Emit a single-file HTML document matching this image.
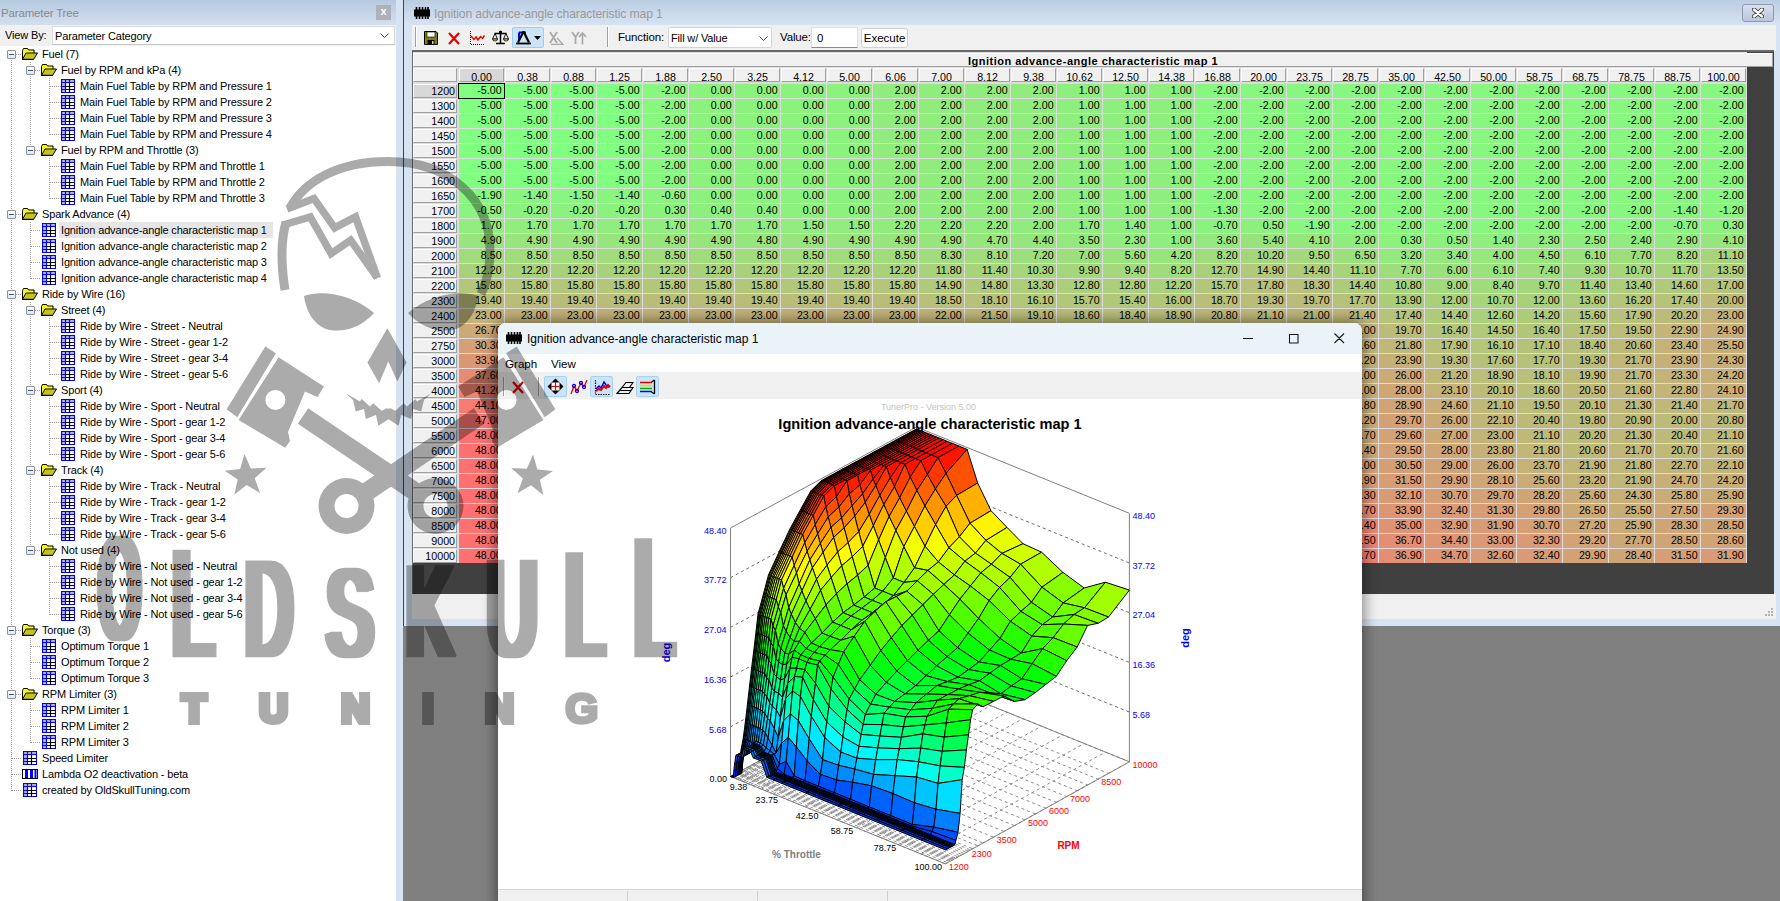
<!DOCTYPE html><html><head><meta charset="utf-8"><title>TunerPro</title><style>
html,body{margin:0;padding:0}
body{width:1780px;height:901px;overflow:hidden;background:#808080;position:relative;font-family:"Liberation Sans",sans-serif;font-size:11px;color:#000}
div,span,svg{position:absolute;box-sizing:border-box}
.t{white-space:nowrap;line-height:16px;height:16px;letter-spacing:-.15px}
#left{left:0;top:0;width:396px;height:901px;background:#fff}
#ltitle{left:0;top:0;width:396px;height:25px;background:linear-gradient(#b7c9df,#d3dfee)}
#lview{left:0;top:25px;width:396px;height:21px;background:#f0f0f0}
.dv{width:1px;background-image:linear-gradient(#9a9a9a 50%,rgba(0,0,0,0) 50%);background-size:1px 2px}
.dh{height:1px;background-image:linear-gradient(90deg,#9a9a9a 50%,rgba(0,0,0,0) 50%);background-size:2px 1px}
.bx{width:9px;height:9px;border:1px solid #919191;background:linear-gradient(#fff,#e4e4e4);border-radius:1px}
.bx:after{content:"";position:absolute;left:1px;top:3px;width:5px;height:1px;background:#3c52a0}
#tw{left:403px;top:0;width:1377px;height:626px;background:#d6e3f2;border-left:1px solid #444}
#gw{left:498px;top:323px;width:864px;height:590px;background:#fff;border-radius:8px 8px 0 0;box-shadow:0 0 14px 2px rgba(0,0,0,.45);overflow:hidden}
.c{height:13.6px;width:44.6px;text-align:right;padding-right:2px;font-size:10.67px;line-height:13px;white-space:nowrap;overflow:hidden}
.rh{left:0px;width:44px;height:14px;background:#f0f0f0;border:1px solid #fff;border-right-color:#a0a0a0;border-bottom-color:#a0a0a0;text-align:right;padding-right:1px;font-size:10.67px;line-height:12px}
.ch{top:16px;width:45px;height:14px;background:#f0f0f0;border:1px solid #fff;border-right-color:#a0a0a0;border-bottom-color:#a0a0a0;text-align:center;font-size:10.67px;line-height:16px;overflow:hidden}
</style></head><body>
<svg width="0" height="0" style="left:-10px;top:-10px"><defs>
<symbol id="it" viewBox="0 0 14 14"><rect x="0" y="0" width="14" height="14" fill="#fff"/><rect x="1" y="1" width="12" height="3" fill="#b8b8b8"/><rect x="1" y="1" width="3" height="12" fill="#b8b8b8"/><path d="M.5 .5h13v13h-13zM0 3.5h14M4.5 0v14M8.5 0v4M0 7.5h4.5M0 10.5h4.5" fill="none" stroke="#00f" stroke-width="1.2"/><path d="M8.5 4v10M4.5 7.5h9M4.5 10.5h9" fill="none" stroke="#000" stroke-width="1.2"/></symbol>
<symbol id="if" viewBox="0 0 16 12"><path d="M.5 11.5V2.5l1-2h4l1 1.5h5.5v3" fill="#ff0" stroke="#000"/><path d="M.5 11.5l3.5-6.5h11.5l-4 6.5z" fill="#c4c420" stroke="#000"/><path d="M0 11.5h11.5" stroke="#000" stroke-width="1.4"/></symbol>
<symbol id="il" viewBox="0 0 16 10"><rect x=".5" y=".5" width="15" height="9" fill="#fff" stroke="#000"/><rect x="3" y="1" width="3" height="8" fill="#00f"/><rect x="8" y="1" width="3" height="8" fill="#00f"/><rect x="12.5" y="1" width="2" height="8" fill="#00f"/></symbol>
<symbol id="chip" viewBox="0 0 16 12"><rect x="0" y="2.5" width="16" height="7" fill="#000"/><path d="M2.5 0v12M5.5 0v12M8.5 0v12M11.5 0v12M14 0v12" stroke="#000" stroke-width="1.6"/></symbol>
</defs></svg>
<div id="left">
<div id="ltitle"><span class="t" style="left:1px;top:5px;font-size:11.5px;color:#8a8a8a">Parameter Tree</span><div style="left:376px;top:5px;width:15px;height:15px;background:#aeb2b8;color:#fff;font-size:11px;font-weight:bold;line-height:13px;text-align:center">x</div></div>
<div id="lview"><span class="t" style="left:5px;top:2px">View By:</span><div style="left:52px;top:1px;width:343px;height:19px;background:#fff;border:1px solid #dcdcdc;border-bottom-color:#c8c8c8"><span class="t" style="left:2px;top:1px">Parameter Category</span><svg style="left:327px;top:6px" width="9" height="6"><path d="M.5 .5l4 4 4-4" fill="none" stroke="#444" stroke-width="1"/></svg></div></div>
<div class="dv" style="left:11px;top:60px;height:731px"></div>
<div class="dv" style="left:30px;top:62px;height:89px"></div>
<div class="dv" style="left:30px;top:222px;height:57px"></div>
<div class="dv" style="left:30px;top:302px;height:249px"></div>
<div class="dv" style="left:30px;top:638px;height:41px"></div>
<div class="dv" style="left:30px;top:702px;height:41px"></div>
<div class="dv" style="left:49px;top:78px;height:57px"></div>
<div class="dv" style="left:49px;top:158px;height:41px"></div>
<div class="dv" style="left:49px;top:318px;height:57px"></div>
<div class="dv" style="left:49px;top:398px;height:57px"></div>
<div class="dv" style="left:49px;top:478px;height:57px"></div>
<div class="dv" style="left:49px;top:558px;height:57px"></div>
<div class="dh" style="left:16px;top:54px;width:6px"></div>
<div class="bx" style="left:7px;top:50px"></div>
<svg style="left:22px;top:48px" width="16" height="12"><use href="#if"/></svg>
<span class="t" style="left:42px;top:46px">Fuel (7)</span>
<div class="dh" style="left:35px;top:70px;width:6px"></div>
<div class="bx" style="left:26px;top:66px"></div>
<svg style="left:41px;top:64px" width="16" height="12"><use href="#if"/></svg>
<span class="t" style="left:61px;top:62px">Fuel by RPM and kPa (4)</span>
<div class="dh" style="left:50px;top:86px;width:11px"></div>
<svg style="left:61px;top:79px" width="14" height="14"><use href="#it"/></svg>
<span class="t" style="left:80px;top:78px">Main Fuel Table by RPM and Pressure 1</span>
<div class="dh" style="left:50px;top:102px;width:11px"></div>
<svg style="left:61px;top:95px" width="14" height="14"><use href="#it"/></svg>
<span class="t" style="left:80px;top:94px">Main Fuel Table by RPM and Pressure 2</span>
<div class="dh" style="left:50px;top:118px;width:11px"></div>
<svg style="left:61px;top:111px" width="14" height="14"><use href="#it"/></svg>
<span class="t" style="left:80px;top:110px">Main Fuel Table by RPM and Pressure 3</span>
<div class="dh" style="left:50px;top:134px;width:11px"></div>
<svg style="left:61px;top:127px" width="14" height="14"><use href="#it"/></svg>
<span class="t" style="left:80px;top:126px">Main Fuel Table by RPM and Pressure 4</span>
<div class="dh" style="left:35px;top:150px;width:6px"></div>
<div class="bx" style="left:26px;top:146px"></div>
<svg style="left:41px;top:144px" width="16" height="12"><use href="#if"/></svg>
<span class="t" style="left:61px;top:142px">Fuel by RPM and Throttle (3)</span>
<div class="dh" style="left:50px;top:166px;width:11px"></div>
<svg style="left:61px;top:159px" width="14" height="14"><use href="#it"/></svg>
<span class="t" style="left:80px;top:158px">Main Fuel Table by RPM and Throttle 1</span>
<div class="dh" style="left:50px;top:182px;width:11px"></div>
<svg style="left:61px;top:175px" width="14" height="14"><use href="#it"/></svg>
<span class="t" style="left:80px;top:174px">Main Fuel Table by RPM and Throttle 2</span>
<div class="dh" style="left:50px;top:198px;width:11px"></div>
<svg style="left:61px;top:191px" width="14" height="14"><use href="#it"/></svg>
<span class="t" style="left:80px;top:190px">Main Fuel Table by RPM and Throttle 3</span>
<div class="dh" style="left:16px;top:214px;width:6px"></div>
<div class="bx" style="left:7px;top:210px"></div>
<svg style="left:22px;top:208px" width="16" height="12"><use href="#if"/></svg>
<span class="t" style="left:42px;top:206px">Spark Advance (4)</span>
<div class="dh" style="left:31px;top:230px;width:10px"></div>
<svg style="left:42px;top:223px" width="14" height="14"><use href="#it"/></svg>
<div style="left:59px;top:222px;width:214px;height:16px;background:#e6e6e6"></div>
<span class="t" style="left:61px;top:222px">Ignition advance-angle characteristic map 1</span>
<div class="dh" style="left:31px;top:246px;width:10px"></div>
<svg style="left:42px;top:239px" width="14" height="14"><use href="#it"/></svg>
<span class="t" style="left:61px;top:238px">Ignition advance-angle characteristic map 2</span>
<div class="dh" style="left:31px;top:262px;width:10px"></div>
<svg style="left:42px;top:255px" width="14" height="14"><use href="#it"/></svg>
<span class="t" style="left:61px;top:254px">Ignition advance-angle characteristic map 3</span>
<div class="dh" style="left:31px;top:278px;width:10px"></div>
<svg style="left:42px;top:271px" width="14" height="14"><use href="#it"/></svg>
<span class="t" style="left:61px;top:270px">Ignition advance-angle characteristic map 4</span>
<div class="dh" style="left:16px;top:294px;width:6px"></div>
<div class="bx" style="left:7px;top:290px"></div>
<svg style="left:22px;top:288px" width="16" height="12"><use href="#if"/></svg>
<span class="t" style="left:42px;top:286px">Ride by Wire (16)</span>
<div class="dh" style="left:35px;top:310px;width:6px"></div>
<div class="bx" style="left:26px;top:306px"></div>
<svg style="left:41px;top:304px" width="16" height="12"><use href="#if"/></svg>
<span class="t" style="left:61px;top:302px">Street (4)</span>
<div class="dh" style="left:50px;top:326px;width:11px"></div>
<svg style="left:61px;top:319px" width="14" height="14"><use href="#it"/></svg>
<span class="t" style="left:80px;top:318px">Ride by Wire - Street - Neutral</span>
<div class="dh" style="left:50px;top:342px;width:11px"></div>
<svg style="left:61px;top:335px" width="14" height="14"><use href="#it"/></svg>
<span class="t" style="left:80px;top:334px">Ride by Wire - Street - gear 1-2</span>
<div class="dh" style="left:50px;top:358px;width:11px"></div>
<svg style="left:61px;top:351px" width="14" height="14"><use href="#it"/></svg>
<span class="t" style="left:80px;top:350px">Ride by Wire - Street - gear 3-4</span>
<div class="dh" style="left:50px;top:374px;width:11px"></div>
<svg style="left:61px;top:367px" width="14" height="14"><use href="#it"/></svg>
<span class="t" style="left:80px;top:366px">Ride by Wire - Street - gear 5-6</span>
<div class="dh" style="left:35px;top:390px;width:6px"></div>
<div class="bx" style="left:26px;top:386px"></div>
<svg style="left:41px;top:384px" width="16" height="12"><use href="#if"/></svg>
<span class="t" style="left:61px;top:382px">Sport (4)</span>
<div class="dh" style="left:50px;top:406px;width:11px"></div>
<svg style="left:61px;top:399px" width="14" height="14"><use href="#it"/></svg>
<span class="t" style="left:80px;top:398px">Ride by Wire - Sport - Neutral</span>
<div class="dh" style="left:50px;top:422px;width:11px"></div>
<svg style="left:61px;top:415px" width="14" height="14"><use href="#it"/></svg>
<span class="t" style="left:80px;top:414px">Ride by Wire - Sport - gear 1-2</span>
<div class="dh" style="left:50px;top:438px;width:11px"></div>
<svg style="left:61px;top:431px" width="14" height="14"><use href="#it"/></svg>
<span class="t" style="left:80px;top:430px">Ride by Wire - Sport - gear 3-4</span>
<div class="dh" style="left:50px;top:454px;width:11px"></div>
<svg style="left:61px;top:447px" width="14" height="14"><use href="#it"/></svg>
<span class="t" style="left:80px;top:446px">Ride by Wire - Sport - gear 5-6</span>
<div class="dh" style="left:35px;top:470px;width:6px"></div>
<div class="bx" style="left:26px;top:466px"></div>
<svg style="left:41px;top:464px" width="16" height="12"><use href="#if"/></svg>
<span class="t" style="left:61px;top:462px">Track (4)</span>
<div class="dh" style="left:50px;top:486px;width:11px"></div>
<svg style="left:61px;top:479px" width="14" height="14"><use href="#it"/></svg>
<span class="t" style="left:80px;top:478px">Ride by Wire - Track - Neutral</span>
<div class="dh" style="left:50px;top:502px;width:11px"></div>
<svg style="left:61px;top:495px" width="14" height="14"><use href="#it"/></svg>
<span class="t" style="left:80px;top:494px">Ride by Wire - Track - gear 1-2</span>
<div class="dh" style="left:50px;top:518px;width:11px"></div>
<svg style="left:61px;top:511px" width="14" height="14"><use href="#it"/></svg>
<span class="t" style="left:80px;top:510px">Ride by Wire - Track - gear 3-4</span>
<div class="dh" style="left:50px;top:534px;width:11px"></div>
<svg style="left:61px;top:527px" width="14" height="14"><use href="#it"/></svg>
<span class="t" style="left:80px;top:526px">Ride by Wire - Track - gear 5-6</span>
<div class="dh" style="left:35px;top:550px;width:6px"></div>
<div class="bx" style="left:26px;top:546px"></div>
<svg style="left:41px;top:544px" width="16" height="12"><use href="#if"/></svg>
<span class="t" style="left:61px;top:542px">Not used (4)</span>
<div class="dh" style="left:50px;top:566px;width:11px"></div>
<svg style="left:61px;top:559px" width="14" height="14"><use href="#it"/></svg>
<span class="t" style="left:80px;top:558px">Ride by Wire - Not used - Neutral</span>
<div class="dh" style="left:50px;top:582px;width:11px"></div>
<svg style="left:61px;top:575px" width="14" height="14"><use href="#it"/></svg>
<span class="t" style="left:80px;top:574px">Ride by Wire - Not used - gear 1-2</span>
<div class="dh" style="left:50px;top:598px;width:11px"></div>
<svg style="left:61px;top:591px" width="14" height="14"><use href="#it"/></svg>
<span class="t" style="left:80px;top:590px">Ride by Wire - Not used - gear 3-4</span>
<div class="dh" style="left:50px;top:614px;width:11px"></div>
<svg style="left:61px;top:607px" width="14" height="14"><use href="#it"/></svg>
<span class="t" style="left:80px;top:606px">Ride by Wire - Not used - gear 5-6</span>
<div class="dh" style="left:16px;top:630px;width:6px"></div>
<div class="bx" style="left:7px;top:626px"></div>
<svg style="left:22px;top:624px" width="16" height="12"><use href="#if"/></svg>
<span class="t" style="left:42px;top:622px">Torque (3)</span>
<div class="dh" style="left:31px;top:646px;width:10px"></div>
<svg style="left:42px;top:639px" width="14" height="14"><use href="#it"/></svg>
<span class="t" style="left:61px;top:638px">Optimum Torque 1</span>
<div class="dh" style="left:31px;top:662px;width:10px"></div>
<svg style="left:42px;top:655px" width="14" height="14"><use href="#it"/></svg>
<span class="t" style="left:61px;top:654px">Optimum Torque 2</span>
<div class="dh" style="left:31px;top:678px;width:10px"></div>
<svg style="left:42px;top:671px" width="14" height="14"><use href="#it"/></svg>
<span class="t" style="left:61px;top:670px">Optimum Torque 3</span>
<div class="dh" style="left:16px;top:694px;width:6px"></div>
<div class="bx" style="left:7px;top:690px"></div>
<svg style="left:22px;top:688px" width="16" height="12"><use href="#if"/></svg>
<span class="t" style="left:42px;top:686px">RPM Limiter (3)</span>
<div class="dh" style="left:31px;top:710px;width:10px"></div>
<svg style="left:42px;top:703px" width="14" height="14"><use href="#it"/></svg>
<span class="t" style="left:61px;top:702px">RPM Limiter 1</span>
<div class="dh" style="left:31px;top:726px;width:10px"></div>
<svg style="left:42px;top:719px" width="14" height="14"><use href="#it"/></svg>
<span class="t" style="left:61px;top:718px">RPM Limiter 2</span>
<div class="dh" style="left:31px;top:742px;width:10px"></div>
<svg style="left:42px;top:735px" width="14" height="14"><use href="#it"/></svg>
<span class="t" style="left:61px;top:734px">RPM Limiter 3</span>
<div class="dh" style="left:12px;top:758px;width:10px"></div>
<svg style="left:23px;top:751px" width="14" height="14"><use href="#it"/></svg>
<span class="t" style="left:42px;top:750px">Speed Limiter</span>
<div class="dh" style="left:12px;top:774px;width:10px"></div>
<svg style="left:22px;top:769px" width="16" height="10"><use href="#il"/></svg>
<span class="t" style="left:42px;top:766px">Lambda O2 deactivation - beta</span>
<div class="dh" style="left:12px;top:790px;width:10px"></div>
<svg style="left:23px;top:783px" width="14" height="14"><use href="#it"/></svg>
<span class="t" style="left:42px;top:782px">created by OldSkullTuning.com</span>
</div>
<div style="left:396px;top:0;width:7px;height:901px;background:#d6e3f2"></div>
<div id="tw">
<svg style="left:10px;top:7px" width="16" height="12"><use href="#chip"/></svg>
<div style="left:0;top:0;width:1377px;height:25px;background:linear-gradient(#bccde2,#d6e3f2)"></div>
<svg style="left:10px;top:7px" width="16" height="12"><use href="#chip"/></svg>
<span class="t" style="left:30px;top:6px;font-size:12.2px;color:#9a9a9a">Ignition advance-angle characteristic map 1</span>
<div style="left:1338px;top:4px;width:32px;height:18px;border:1px solid #8f9bb0;border-radius:3px;background:linear-gradient(#d5dfee,#b9c6da)"><svg style="left:9px;top:3px" width="12" height="10"><path d="M2 1.5l8 7M10 1.5l-8 7" stroke="#3c3c3c" stroke-width="4.200" stroke-linecap="round"/><path d="M2 1.5l8 7M10 1.5l-8 7" stroke="#fff" stroke-width="2.400" stroke-linecap="round"/></svg></div>
<div id="tb" style="left:8px;top:25px;width:1364px;height:26px;background:#f0f0f0">
<div style="left:3px;top:2px;width:2px;height:20px;border-left:1px solid #a0a0a0;border-right:1px solid #fff"></div>
<svg style="left:12px;top:6px" width="14" height="14" viewBox="0 0 14 14"><path d="M.5 .5h11.5l1.5 1.5v11.5h-13z" fill="#808000" stroke="#000"/><rect x="3" y="1" width="8" height="5" fill="#fff" stroke="#000" stroke-width=".6"/><rect x="3.5" y="9" width="7" height="4.5" fill="#000"/><rect x="8" y="10" width="1.6" height="3" fill="#c8c8c8"/></svg>
<svg style="left:36px;top:7px" width="12" height="13" viewBox="0 0 12 13"><path d="M1 1l10 11M11 1l-10 11" stroke="#e60000" stroke-width="2.2" fill="none"/></svg>
<svg style="left:57px;top:6px" width="16" height="14" viewBox="0 0 16 14"><path d="M1.5 0v13.5h14" fill="none" stroke="#000" stroke-width="1" stroke-dasharray="1 1"/><path d="M2 5l3 3.5 2-2.5 2 3 2.5-3.5 2 2 2-3" fill="none" stroke="#e60000" stroke-width="1.4"/></svg>
<svg style="left:80px;top:5px" width="17" height="15" viewBox="0 0 17 15"><path d="M8.5 1v12M4 13.5h9M2.5 3.5h12" stroke="#000" stroke-width="1.5" fill="none"/><path d="M3 3.5l-2.5 5.5h5zM14 3.5l-2.5 5.5h5z" fill="none" stroke="#000" stroke-width=".9"/><path d="M.5 9h5a2.5 2 0 0 1-5 0zM11.5 9h5a2.5 2 0 0 1-5 0z" fill="#e8d800" stroke="#000" stroke-width=".7"/><circle cx="8.5" cy="2" r="1.6" fill="#000"/></svg>
<div style="left:100px;top:2px;width:32px;height:21px;background:#cce4f7;border:1px solid #99cff5;border-radius:2px"></div>
<svg style="left:104px;top:5px" width="16" height="15" viewBox="0 0 16 15"><path d="M3 2.5h7M3 2.5v8" stroke="#00f" stroke-width="2" fill="none"/><path d="M7.5 1.5l-5.5 11M7.5 1.5l5.5 11" stroke="#000" stroke-width="2.2" fill="none"/><path d="M0 13.5h15" stroke="#000" stroke-width="1.8"/></svg>
<svg style="left:122px;top:11px" width="8" height="5" viewBox="0 0 8 5"><path d="M0 0h7l-3.5 4z" fill="#000"/></svg>
<svg style="left:136px;top:6px" width="16" height="14" viewBox="0 0 16 14"><path d="M2 1l7 11M9 1l-7 11" stroke="#a9a9a9" stroke-width="1.8" fill="none"/><path d="M9 7l6 6.5h-12" stroke="#a9a9a9" stroke-width="1.4" fill="none"/></svg>
<svg style="left:159px;top:6px" width="16" height="14" viewBox="0 0 16 14"><path d="M1 1l3.5 5v7M8 1l-3.5 5" stroke="#a9a9a9" stroke-width="1.8" fill="none"/><path d="M11.5 13.5v-11M8 6l3.5-4 3.5 4" stroke="#a9a9a9" stroke-width="1.6" fill="none"/></svg>
<div style="left:195px;top:2px;width:2px;height:20px;border-left:1px solid #a0a0a0;border-right:1px solid #fff"></div>
<span class="t" style="left:206px;top:4px;font-size:11.5px">Function:</span>
<div style="left:256px;top:2px;width:104px;height:21px;background:#fff;border:1px solid #d4d4d4;border-radius:2px"><span class="t" style="left:2px;top:2px;font-size:11px">Fill w/ Value</span><svg style="left:90px;top:8px" width="9" height="6"><path d="M.5 .5l4 4 4-4" fill="none" stroke="#444"/></svg></div>
<span class="t" style="left:368px;top:4px;font-size:11.5px">Value:</span>
<div style="left:399px;top:2px;width:47px;height:21px;background:#fff;border:1px solid #e0e0e0;border-bottom-color:#8a8a8a"><span class="t" style="left:5px;top:2px;font-size:11.5px">0</span></div>
<div style="left:449px;top:3px;width:47px;height:20px;background:#fdfdfd;border:1px solid #d0d0d0;border-radius:3px;text-align:center;line-height:18px;font-size:11.5px">Execute</div>
</div>
<div id="grid" style="left:8px;top:50px;width:1362px;height:544px;background:#404040;border-top:2px solid #6a6a6a;border-left:1px solid #696969">
<div style="left:0;top:0;width:1334px;height:511px;background:#dedcde"></div>
<div style="left:0px;top:1px;width:1360px;height:14px;background:#f0f0f0;border:1px solid #fff;border-right-color:#a0a0a0;border-bottom-color:#a0a0a0;text-align:center;font-weight:bold;font-size:11px;line-height:15px;letter-spacing:.5px">Ignition advance-angle characteristic map 1</div>
<div class="ch" style="left:0px;width:44px"></div>
<div class="ch" style="left:46px;background:#d8d8d8">0.00</div>
<div class="ch" style="left:92px">0.38</div>
<div class="ch" style="left:138px">0.88</div>
<div class="ch" style="left:184px">1.25</div>
<div class="ch" style="left:230px">1.88</div>
<div class="ch" style="left:276px">2.50</div>
<div class="ch" style="left:322px">3.25</div>
<div class="ch" style="left:368px">4.12</div>
<div class="ch" style="left:414px">5.00</div>
<div class="ch" style="left:460px">6.06</div>
<div class="ch" style="left:506px">7.00</div>
<div class="ch" style="left:552px">8.12</div>
<div class="ch" style="left:598px">9.38</div>
<div class="ch" style="left:644px">10.62</div>
<div class="ch" style="left:690px">12.50</div>
<div class="ch" style="left:736px">14.38</div>
<div class="ch" style="left:782px">16.88</div>
<div class="ch" style="left:828px">20.00</div>
<div class="ch" style="left:874px">23.75</div>
<div class="ch" style="left:920px">28.75</div>
<div class="ch" style="left:966px">35.00</div>
<div class="ch" style="left:1012px">42.50</div>
<div class="ch" style="left:1058px">50.00</div>
<div class="ch" style="left:1104px">58.75</div>
<div class="ch" style="left:1150px">68.75</div>
<div class="ch" style="left:1196px">78.75</div>
<div class="ch" style="left:1242px">88.75</div>
<div class="ch" style="left:1288px">100.00</div>
<div class="rh" style="top:32px;background:#d8d8d8">1200</div>
<div class="c" style="left:46px;top:32px;background:#80ff80;outline:1px solid #000">-5.00</div>
<div class="c" style="left:92px;top:32px;background:#80ff80">-5.00</div>
<div class="c" style="left:138px;top:32px;background:#80ff80">-5.00</div>
<div class="c" style="left:184px;top:32px;background:#80ff80">-5.00</div>
<div class="c" style="left:230px;top:32px;background:#87f77f">-2.00</div>
<div class="c" style="left:276px;top:32px;background:#8cf27e">0.00</div>
<div class="c" style="left:322px;top:32px;background:#8cf27e">0.00</div>
<div class="c" style="left:368px;top:32px;background:#8cf27e">0.00</div>
<div class="c" style="left:414px;top:32px;background:#8cf27e">0.00</div>
<div class="c" style="left:460px;top:32px;background:#91ec7e">2.00</div>
<div class="c" style="left:506px;top:32px;background:#91ec7e">2.00</div>
<div class="c" style="left:552px;top:32px;background:#91ec7e">2.00</div>
<div class="c" style="left:598px;top:32px;background:#91ec7e">2.00</div>
<div class="c" style="left:644px;top:32px;background:#8eef7e">1.00</div>
<div class="c" style="left:690px;top:32px;background:#8eef7e">1.00</div>
<div class="c" style="left:736px;top:32px;background:#8eef7e">1.00</div>
<div class="c" style="left:782px;top:32px;background:#87f77f">-2.00</div>
<div class="c" style="left:828px;top:32px;background:#87f77f">-2.00</div>
<div class="c" style="left:874px;top:32px;background:#87f77f">-2.00</div>
<div class="c" style="left:920px;top:32px;background:#87f77f">-2.00</div>
<div class="c" style="left:966px;top:32px;background:#87f77f">-2.00</div>
<div class="c" style="left:1012px;top:32px;background:#87f77f">-2.00</div>
<div class="c" style="left:1058px;top:32px;background:#87f77f">-2.00</div>
<div class="c" style="left:1104px;top:32px;background:#87f77f">-2.00</div>
<div class="c" style="left:1150px;top:32px;background:#87f77f">-2.00</div>
<div class="c" style="left:1196px;top:32px;background:#87f77f">-2.00</div>
<div class="c" style="left:1242px;top:32px;background:#87f77f">-2.00</div>
<div class="c" style="left:1288px;top:32px;background:#87f77f">-2.00</div>
<div class="rh" style="top:47px">1300</div>
<div class="c" style="left:46px;top:47px;background:#80ff80">-5.00</div>
<div class="c" style="left:92px;top:47px;background:#80ff80">-5.00</div>
<div class="c" style="left:138px;top:47px;background:#80ff80">-5.00</div>
<div class="c" style="left:184px;top:47px;background:#80ff80">-5.00</div>
<div class="c" style="left:230px;top:47px;background:#87f77f">-2.00</div>
<div class="c" style="left:276px;top:47px;background:#8cf27e">0.00</div>
<div class="c" style="left:322px;top:47px;background:#8cf27e">0.00</div>
<div class="c" style="left:368px;top:47px;background:#8cf27e">0.00</div>
<div class="c" style="left:414px;top:47px;background:#8cf27e">0.00</div>
<div class="c" style="left:460px;top:47px;background:#91ec7e">2.00</div>
<div class="c" style="left:506px;top:47px;background:#91ec7e">2.00</div>
<div class="c" style="left:552px;top:47px;background:#91ec7e">2.00</div>
<div class="c" style="left:598px;top:47px;background:#91ec7e">2.00</div>
<div class="c" style="left:644px;top:47px;background:#8eef7e">1.00</div>
<div class="c" style="left:690px;top:47px;background:#8eef7e">1.00</div>
<div class="c" style="left:736px;top:47px;background:#8eef7e">1.00</div>
<div class="c" style="left:782px;top:47px;background:#87f77f">-2.00</div>
<div class="c" style="left:828px;top:47px;background:#87f77f">-2.00</div>
<div class="c" style="left:874px;top:47px;background:#87f77f">-2.00</div>
<div class="c" style="left:920px;top:47px;background:#87f77f">-2.00</div>
<div class="c" style="left:966px;top:47px;background:#87f77f">-2.00</div>
<div class="c" style="left:1012px;top:47px;background:#87f77f">-2.00</div>
<div class="c" style="left:1058px;top:47px;background:#87f77f">-2.00</div>
<div class="c" style="left:1104px;top:47px;background:#87f77f">-2.00</div>
<div class="c" style="left:1150px;top:47px;background:#87f77f">-2.00</div>
<div class="c" style="left:1196px;top:47px;background:#87f77f">-2.00</div>
<div class="c" style="left:1242px;top:47px;background:#87f77f">-2.00</div>
<div class="c" style="left:1288px;top:47px;background:#87f77f">-2.00</div>
<div class="rh" style="top:62px">1400</div>
<div class="c" style="left:46px;top:62px;background:#80ff80">-5.00</div>
<div class="c" style="left:92px;top:62px;background:#80ff80">-5.00</div>
<div class="c" style="left:138px;top:62px;background:#80ff80">-5.00</div>
<div class="c" style="left:184px;top:62px;background:#80ff80">-5.00</div>
<div class="c" style="left:230px;top:62px;background:#87f77f">-2.00</div>
<div class="c" style="left:276px;top:62px;background:#8cf27e">0.00</div>
<div class="c" style="left:322px;top:62px;background:#8cf27e">0.00</div>
<div class="c" style="left:368px;top:62px;background:#8cf27e">0.00</div>
<div class="c" style="left:414px;top:62px;background:#8cf27e">0.00</div>
<div class="c" style="left:460px;top:62px;background:#91ec7e">2.00</div>
<div class="c" style="left:506px;top:62px;background:#91ec7e">2.00</div>
<div class="c" style="left:552px;top:62px;background:#91ec7e">2.00</div>
<div class="c" style="left:598px;top:62px;background:#91ec7e">2.00</div>
<div class="c" style="left:644px;top:62px;background:#8eef7e">1.00</div>
<div class="c" style="left:690px;top:62px;background:#8eef7e">1.00</div>
<div class="c" style="left:736px;top:62px;background:#8eef7e">1.00</div>
<div class="c" style="left:782px;top:62px;background:#87f77f">-2.00</div>
<div class="c" style="left:828px;top:62px;background:#87f77f">-2.00</div>
<div class="c" style="left:874px;top:62px;background:#87f77f">-2.00</div>
<div class="c" style="left:920px;top:62px;background:#87f77f">-2.00</div>
<div class="c" style="left:966px;top:62px;background:#87f77f">-2.00</div>
<div class="c" style="left:1012px;top:62px;background:#87f77f">-2.00</div>
<div class="c" style="left:1058px;top:62px;background:#87f77f">-2.00</div>
<div class="c" style="left:1104px;top:62px;background:#87f77f">-2.00</div>
<div class="c" style="left:1150px;top:62px;background:#87f77f">-2.00</div>
<div class="c" style="left:1196px;top:62px;background:#87f77f">-2.00</div>
<div class="c" style="left:1242px;top:62px;background:#87f77f">-2.00</div>
<div class="c" style="left:1288px;top:62px;background:#87f77f">-2.00</div>
<div class="rh" style="top:77px">1450</div>
<div class="c" style="left:46px;top:77px;background:#80ff80">-5.00</div>
<div class="c" style="left:92px;top:77px;background:#80ff80">-5.00</div>
<div class="c" style="left:138px;top:77px;background:#80ff80">-5.00</div>
<div class="c" style="left:184px;top:77px;background:#80ff80">-5.00</div>
<div class="c" style="left:230px;top:77px;background:#87f77f">-2.00</div>
<div class="c" style="left:276px;top:77px;background:#8cf27e">0.00</div>
<div class="c" style="left:322px;top:77px;background:#8cf27e">0.00</div>
<div class="c" style="left:368px;top:77px;background:#8cf27e">0.00</div>
<div class="c" style="left:414px;top:77px;background:#8cf27e">0.00</div>
<div class="c" style="left:460px;top:77px;background:#91ec7e">2.00</div>
<div class="c" style="left:506px;top:77px;background:#91ec7e">2.00</div>
<div class="c" style="left:552px;top:77px;background:#91ec7e">2.00</div>
<div class="c" style="left:598px;top:77px;background:#91ec7e">2.00</div>
<div class="c" style="left:644px;top:77px;background:#8eef7e">1.00</div>
<div class="c" style="left:690px;top:77px;background:#8eef7e">1.00</div>
<div class="c" style="left:736px;top:77px;background:#8eef7e">1.00</div>
<div class="c" style="left:782px;top:77px;background:#87f77f">-2.00</div>
<div class="c" style="left:828px;top:77px;background:#87f77f">-2.00</div>
<div class="c" style="left:874px;top:77px;background:#87f77f">-2.00</div>
<div class="c" style="left:920px;top:77px;background:#87f77f">-2.00</div>
<div class="c" style="left:966px;top:77px;background:#87f77f">-2.00</div>
<div class="c" style="left:1012px;top:77px;background:#87f77f">-2.00</div>
<div class="c" style="left:1058px;top:77px;background:#87f77f">-2.00</div>
<div class="c" style="left:1104px;top:77px;background:#87f77f">-2.00</div>
<div class="c" style="left:1150px;top:77px;background:#87f77f">-2.00</div>
<div class="c" style="left:1196px;top:77px;background:#87f77f">-2.00</div>
<div class="c" style="left:1242px;top:77px;background:#87f77f">-2.00</div>
<div class="c" style="left:1288px;top:77px;background:#87f77f">-2.00</div>
<div class="rh" style="top:92px">1500</div>
<div class="c" style="left:46px;top:92px;background:#80ff80">-5.00</div>
<div class="c" style="left:92px;top:92px;background:#80ff80">-5.00</div>
<div class="c" style="left:138px;top:92px;background:#80ff80">-5.00</div>
<div class="c" style="left:184px;top:92px;background:#80ff80">-5.00</div>
<div class="c" style="left:230px;top:92px;background:#87f77f">-2.00</div>
<div class="c" style="left:276px;top:92px;background:#8cf27e">0.00</div>
<div class="c" style="left:322px;top:92px;background:#8cf27e">0.00</div>
<div class="c" style="left:368px;top:92px;background:#8cf27e">0.00</div>
<div class="c" style="left:414px;top:92px;background:#8cf27e">0.00</div>
<div class="c" style="left:460px;top:92px;background:#91ec7e">2.00</div>
<div class="c" style="left:506px;top:92px;background:#91ec7e">2.00</div>
<div class="c" style="left:552px;top:92px;background:#91ec7e">2.00</div>
<div class="c" style="left:598px;top:92px;background:#91ec7e">2.00</div>
<div class="c" style="left:644px;top:92px;background:#8eef7e">1.00</div>
<div class="c" style="left:690px;top:92px;background:#8eef7e">1.00</div>
<div class="c" style="left:736px;top:92px;background:#8eef7e">1.00</div>
<div class="c" style="left:782px;top:92px;background:#87f77f">-2.00</div>
<div class="c" style="left:828px;top:92px;background:#87f77f">-2.00</div>
<div class="c" style="left:874px;top:92px;background:#87f77f">-2.00</div>
<div class="c" style="left:920px;top:92px;background:#87f77f">-2.00</div>
<div class="c" style="left:966px;top:92px;background:#87f77f">-2.00</div>
<div class="c" style="left:1012px;top:92px;background:#87f77f">-2.00</div>
<div class="c" style="left:1058px;top:92px;background:#87f77f">-2.00</div>
<div class="c" style="left:1104px;top:92px;background:#87f77f">-2.00</div>
<div class="c" style="left:1150px;top:92px;background:#87f77f">-2.00</div>
<div class="c" style="left:1196px;top:92px;background:#87f77f">-2.00</div>
<div class="c" style="left:1242px;top:92px;background:#87f77f">-2.00</div>
<div class="c" style="left:1288px;top:92px;background:#87f77f">-2.00</div>
<div class="rh" style="top:107px">1550</div>
<div class="c" style="left:46px;top:107px;background:#80ff80">-5.00</div>
<div class="c" style="left:92px;top:107px;background:#80ff80">-5.00</div>
<div class="c" style="left:138px;top:107px;background:#80ff80">-5.00</div>
<div class="c" style="left:184px;top:107px;background:#80ff80">-5.00</div>
<div class="c" style="left:230px;top:107px;background:#87f77f">-2.00</div>
<div class="c" style="left:276px;top:107px;background:#8cf27e">0.00</div>
<div class="c" style="left:322px;top:107px;background:#8cf27e">0.00</div>
<div class="c" style="left:368px;top:107px;background:#8cf27e">0.00</div>
<div class="c" style="left:414px;top:107px;background:#8cf27e">0.00</div>
<div class="c" style="left:460px;top:107px;background:#91ec7e">2.00</div>
<div class="c" style="left:506px;top:107px;background:#91ec7e">2.00</div>
<div class="c" style="left:552px;top:107px;background:#91ec7e">2.00</div>
<div class="c" style="left:598px;top:107px;background:#91ec7e">2.00</div>
<div class="c" style="left:644px;top:107px;background:#8eef7e">1.00</div>
<div class="c" style="left:690px;top:107px;background:#8eef7e">1.00</div>
<div class="c" style="left:736px;top:107px;background:#8eef7e">1.00</div>
<div class="c" style="left:782px;top:107px;background:#87f77f">-2.00</div>
<div class="c" style="left:828px;top:107px;background:#87f77f">-2.00</div>
<div class="c" style="left:874px;top:107px;background:#87f77f">-2.00</div>
<div class="c" style="left:920px;top:107px;background:#87f77f">-2.00</div>
<div class="c" style="left:966px;top:107px;background:#87f77f">-2.00</div>
<div class="c" style="left:1012px;top:107px;background:#87f77f">-2.00</div>
<div class="c" style="left:1058px;top:107px;background:#87f77f">-2.00</div>
<div class="c" style="left:1104px;top:107px;background:#87f77f">-2.00</div>
<div class="c" style="left:1150px;top:107px;background:#87f77f">-2.00</div>
<div class="c" style="left:1196px;top:107px;background:#87f77f">-2.00</div>
<div class="c" style="left:1242px;top:107px;background:#87f77f">-2.00</div>
<div class="c" style="left:1288px;top:107px;background:#87f77f">-2.00</div>
<div class="rh" style="top:122px">1600</div>
<div class="c" style="left:46px;top:122px;background:#80ff80">-5.00</div>
<div class="c" style="left:92px;top:122px;background:#80ff80">-5.00</div>
<div class="c" style="left:138px;top:122px;background:#80ff80">-5.00</div>
<div class="c" style="left:184px;top:122px;background:#80ff80">-5.00</div>
<div class="c" style="left:230px;top:122px;background:#87f77f">-2.00</div>
<div class="c" style="left:276px;top:122px;background:#8cf27e">0.00</div>
<div class="c" style="left:322px;top:122px;background:#8cf27e">0.00</div>
<div class="c" style="left:368px;top:122px;background:#8cf27e">0.00</div>
<div class="c" style="left:414px;top:122px;background:#8cf27e">0.00</div>
<div class="c" style="left:460px;top:122px;background:#91ec7e">2.00</div>
<div class="c" style="left:506px;top:122px;background:#91ec7e">2.00</div>
<div class="c" style="left:552px;top:122px;background:#91ec7e">2.00</div>
<div class="c" style="left:598px;top:122px;background:#91ec7e">2.00</div>
<div class="c" style="left:644px;top:122px;background:#8eef7e">1.00</div>
<div class="c" style="left:690px;top:122px;background:#8eef7e">1.00</div>
<div class="c" style="left:736px;top:122px;background:#8eef7e">1.00</div>
<div class="c" style="left:782px;top:122px;background:#87f77f">-2.00</div>
<div class="c" style="left:828px;top:122px;background:#87f77f">-2.00</div>
<div class="c" style="left:874px;top:122px;background:#87f77f">-2.00</div>
<div class="c" style="left:920px;top:122px;background:#87f77f">-2.00</div>
<div class="c" style="left:966px;top:122px;background:#87f77f">-2.00</div>
<div class="c" style="left:1012px;top:122px;background:#87f77f">-2.00</div>
<div class="c" style="left:1058px;top:122px;background:#87f77f">-2.00</div>
<div class="c" style="left:1104px;top:122px;background:#87f77f">-2.00</div>
<div class="c" style="left:1150px;top:122px;background:#87f77f">-2.00</div>
<div class="c" style="left:1196px;top:122px;background:#87f77f">-2.00</div>
<div class="c" style="left:1242px;top:122px;background:#87f77f">-2.00</div>
<div class="c" style="left:1288px;top:122px;background:#87f77f">-2.00</div>
<div class="rh" style="top:137px">1650</div>
<div class="c" style="left:46px;top:137px;background:#87f77f">-1.90</div>
<div class="c" style="left:92px;top:137px;background:#89f57f">-1.40</div>
<div class="c" style="left:138px;top:137px;background:#88f67f">-1.50</div>
<div class="c" style="left:184px;top:137px;background:#89f57f">-1.40</div>
<div class="c" style="left:230px;top:137px;background:#8bf37f">-0.60</div>
<div class="c" style="left:276px;top:137px;background:#8cf27e">0.00</div>
<div class="c" style="left:322px;top:137px;background:#8cf27e">0.00</div>
<div class="c" style="left:368px;top:137px;background:#8cf27e">0.00</div>
<div class="c" style="left:414px;top:137px;background:#8cf27e">0.00</div>
<div class="c" style="left:460px;top:137px;background:#91ec7e">2.00</div>
<div class="c" style="left:506px;top:137px;background:#91ec7e">2.00</div>
<div class="c" style="left:552px;top:137px;background:#91ec7e">2.00</div>
<div class="c" style="left:598px;top:137px;background:#91ec7e">2.00</div>
<div class="c" style="left:644px;top:137px;background:#8eef7e">1.00</div>
<div class="c" style="left:690px;top:137px;background:#8eef7e">1.00</div>
<div class="c" style="left:736px;top:137px;background:#8eef7e">1.00</div>
<div class="c" style="left:782px;top:137px;background:#87f77f">-2.00</div>
<div class="c" style="left:828px;top:137px;background:#87f77f">-2.00</div>
<div class="c" style="left:874px;top:137px;background:#87f77f">-2.00</div>
<div class="c" style="left:920px;top:137px;background:#87f77f">-2.00</div>
<div class="c" style="left:966px;top:137px;background:#87f77f">-2.00</div>
<div class="c" style="left:1012px;top:137px;background:#87f77f">-2.00</div>
<div class="c" style="left:1058px;top:137px;background:#87f77f">-2.00</div>
<div class="c" style="left:1104px;top:137px;background:#87f77f">-2.00</div>
<div class="c" style="left:1150px;top:137px;background:#87f77f">-2.00</div>
<div class="c" style="left:1196px;top:137px;background:#87f77f">-2.00</div>
<div class="c" style="left:1242px;top:137px;background:#87f77f">-2.00</div>
<div class="c" style="left:1288px;top:137px;background:#87f77f">-2.00</div>
<div class="rh" style="top:152px">1700</div>
<div class="c" style="left:46px;top:152px;background:#8bf37f">-0.50</div>
<div class="c" style="left:92px;top:152px;background:#8cf27f">-0.20</div>
<div class="c" style="left:138px;top:152px;background:#8cf27f">-0.20</div>
<div class="c" style="left:184px;top:152px;background:#8cf27f">-0.20</div>
<div class="c" style="left:230px;top:152px;background:#8df17e">0.30</div>
<div class="c" style="left:276px;top:152px;background:#8df07e">0.40</div>
<div class="c" style="left:322px;top:152px;background:#8df07e">0.40</div>
<div class="c" style="left:368px;top:152px;background:#8cf27e">0.00</div>
<div class="c" style="left:414px;top:152px;background:#8cf27e">0.00</div>
<div class="c" style="left:460px;top:152px;background:#91ec7e">2.00</div>
<div class="c" style="left:506px;top:152px;background:#91ec7e">2.00</div>
<div class="c" style="left:552px;top:152px;background:#91ec7e">2.00</div>
<div class="c" style="left:598px;top:152px;background:#91ec7e">2.00</div>
<div class="c" style="left:644px;top:152px;background:#8eef7e">1.00</div>
<div class="c" style="left:690px;top:152px;background:#8eef7e">1.00</div>
<div class="c" style="left:736px;top:152px;background:#8eef7e">1.00</div>
<div class="c" style="left:782px;top:152px;background:#89f57f">-1.30</div>
<div class="c" style="left:828px;top:152px;background:#87f77f">-2.00</div>
<div class="c" style="left:874px;top:152px;background:#87f77f">-2.00</div>
<div class="c" style="left:920px;top:152px;background:#87f77f">-2.00</div>
<div class="c" style="left:966px;top:152px;background:#87f77f">-2.00</div>
<div class="c" style="left:1012px;top:152px;background:#87f77f">-2.00</div>
<div class="c" style="left:1058px;top:152px;background:#87f77f">-2.00</div>
<div class="c" style="left:1104px;top:152px;background:#87f77f">-2.00</div>
<div class="c" style="left:1150px;top:152px;background:#87f77f">-2.00</div>
<div class="c" style="left:1196px;top:152px;background:#87f77f">-2.00</div>
<div class="c" style="left:1242px;top:152px;background:#89f57f">-1.40</div>
<div class="c" style="left:1288px;top:152px;background:#89f57f">-1.20</div>
<div class="rh" style="top:167px">1800</div>
<div class="c" style="left:46px;top:167px;background:#90ed7e">1.70</div>
<div class="c" style="left:92px;top:167px;background:#90ed7e">1.70</div>
<div class="c" style="left:138px;top:167px;background:#90ed7e">1.70</div>
<div class="c" style="left:184px;top:167px;background:#90ed7e">1.70</div>
<div class="c" style="left:230px;top:167px;background:#90ed7e">1.70</div>
<div class="c" style="left:276px;top:167px;background:#90ed7e">1.70</div>
<div class="c" style="left:322px;top:167px;background:#90ed7e">1.70</div>
<div class="c" style="left:368px;top:167px;background:#90ed7e">1.50</div>
<div class="c" style="left:414px;top:167px;background:#90ed7e">1.50</div>
<div class="c" style="left:460px;top:167px;background:#91ec7e">2.20</div>
<div class="c" style="left:506px;top:167px;background:#91ec7e">2.20</div>
<div class="c" style="left:552px;top:167px;background:#91ec7e">2.20</div>
<div class="c" style="left:598px;top:167px;background:#91ec7e">2.00</div>
<div class="c" style="left:644px;top:167px;background:#90ed7e">1.70</div>
<div class="c" style="left:690px;top:167px;background:#8fee7e">1.40</div>
<div class="c" style="left:736px;top:167px;background:#8eef7e">1.00</div>
<div class="c" style="left:782px;top:167px;background:#8af37f">-0.70</div>
<div class="c" style="left:828px;top:167px;background:#8df07e">0.50</div>
<div class="c" style="left:874px;top:167px;background:#87f77f">-1.90</div>
<div class="c" style="left:920px;top:167px;background:#87f77f">-2.00</div>
<div class="c" style="left:966px;top:167px;background:#87f77f">-2.00</div>
<div class="c" style="left:1012px;top:167px;background:#87f77f">-2.00</div>
<div class="c" style="left:1058px;top:167px;background:#87f77f">-2.00</div>
<div class="c" style="left:1104px;top:167px;background:#87f77f">-2.00</div>
<div class="c" style="left:1150px;top:167px;background:#87f77f">-2.00</div>
<div class="c" style="left:1196px;top:167px;background:#87f77f">-2.00</div>
<div class="c" style="left:1242px;top:167px;background:#8af37f">-0.70</div>
<div class="c" style="left:1288px;top:167px;background:#8df17e">0.30</div>
<div class="rh" style="top:182px">1900</div>
<div class="c" style="left:46px;top:182px;background:#98e47d">4.90</div>
<div class="c" style="left:92px;top:182px;background:#98e47d">4.90</div>
<div class="c" style="left:138px;top:182px;background:#98e47d">4.90</div>
<div class="c" style="left:184px;top:182px;background:#98e47d">4.90</div>
<div class="c" style="left:230px;top:182px;background:#98e47d">4.90</div>
<div class="c" style="left:276px;top:182px;background:#98e47d">4.90</div>
<div class="c" style="left:322px;top:182px;background:#97e57d">4.80</div>
<div class="c" style="left:368px;top:182px;background:#98e47d">4.90</div>
<div class="c" style="left:414px;top:182px;background:#98e47d">4.90</div>
<div class="c" style="left:460px;top:182px;background:#98e47d">4.90</div>
<div class="c" style="left:506px;top:182px;background:#98e47d">4.90</div>
<div class="c" style="left:552px;top:182px;background:#97e57d">4.70</div>
<div class="c" style="left:598px;top:182px;background:#97e67d">4.40</div>
<div class="c" style="left:644px;top:182px;background:#94e87d">3.50</div>
<div class="c" style="left:690px;top:182px;background:#91eb7e">2.30</div>
<div class="c" style="left:736px;top:182px;background:#8eef7e">1.00</div>
<div class="c" style="left:782px;top:182px;background:#95e87d">3.60</div>
<div class="c" style="left:828px;top:182px;background:#99e37d">5.40</div>
<div class="c" style="left:874px;top:182px;background:#96e67d">4.10</div>
<div class="c" style="left:920px;top:182px;background:#91ec7e">2.00</div>
<div class="c" style="left:966px;top:182px;background:#8df17e">0.30</div>
<div class="c" style="left:1012px;top:182px;background:#8df07e">0.50</div>
<div class="c" style="left:1058px;top:182px;background:#8fee7e">1.40</div>
<div class="c" style="left:1104px;top:182px;background:#91eb7e">2.30</div>
<div class="c" style="left:1150px;top:182px;background:#92eb7e">2.50</div>
<div class="c" style="left:1196px;top:182px;background:#92eb7e">2.40</div>
<div class="c" style="left:1242px;top:182px;background:#93ea7e">2.90</div>
<div class="c" style="left:1288px;top:182px;background:#96e67d">4.10</div>
<div class="rh" style="top:197px">2000</div>
<div class="c" style="left:46px;top:197px;background:#a0db7c">8.50</div>
<div class="c" style="left:92px;top:197px;background:#a0db7c">8.50</div>
<div class="c" style="left:138px;top:197px;background:#a0db7c">8.50</div>
<div class="c" style="left:184px;top:197px;background:#a0db7c">8.50</div>
<div class="c" style="left:230px;top:197px;background:#a0db7c">8.50</div>
<div class="c" style="left:276px;top:197px;background:#a0db7c">8.50</div>
<div class="c" style="left:322px;top:197px;background:#a0db7c">8.50</div>
<div class="c" style="left:368px;top:197px;background:#a0db7c">8.50</div>
<div class="c" style="left:414px;top:197px;background:#a0db7c">8.50</div>
<div class="c" style="left:460px;top:197px;background:#a0db7c">8.50</div>
<div class="c" style="left:506px;top:197px;background:#a0db7c">8.30</div>
<div class="c" style="left:552px;top:197px;background:#9fdc7c">8.10</div>
<div class="c" style="left:598px;top:197px;background:#9dde7c">7.20</div>
<div class="c" style="left:644px;top:197px;background:#9ddf7c">7.00</div>
<div class="c" style="left:690px;top:197px;background:#99e27d">5.60</div>
<div class="c" style="left:736px;top:197px;background:#96e67d">4.20</div>
<div class="c" style="left:782px;top:197px;background:#a0db7c">8.20</div>
<div class="c" style="left:828px;top:197px;background:#a4d67b">10.20</div>
<div class="c" style="left:874px;top:197px;background:#a3d87c">9.50</div>
<div class="c" style="left:920px;top:197px;background:#9ce07d">6.50</div>
<div class="c" style="left:966px;top:197px;background:#94e97e">3.20</div>
<div class="c" style="left:1012px;top:197px;background:#94e87d">3.40</div>
<div class="c" style="left:1058px;top:197px;background:#96e77d">4.00</div>
<div class="c" style="left:1104px;top:197px;background:#97e57d">4.50</div>
<div class="c" style="left:1150px;top:197px;background:#9be17d">6.10</div>
<div class="c" style="left:1196px;top:197px;background:#9edd7c">7.70</div>
<div class="c" style="left:1242px;top:197px;background:#a0db7c">8.20</div>
<div class="c" style="left:1288px;top:197px;background:#a7d47b">11.10</div>
<div class="rh" style="top:212px">2100</div>
<div class="c" style="left:46px;top:212px;background:#a9d17b">12.20</div>
<div class="c" style="left:92px;top:212px;background:#a9d17b">12.20</div>
<div class="c" style="left:138px;top:212px;background:#a9d17b">12.20</div>
<div class="c" style="left:184px;top:212px;background:#a9d17b">12.20</div>
<div class="c" style="left:230px;top:212px;background:#a9d17b">12.20</div>
<div class="c" style="left:276px;top:212px;background:#a9d17b">12.20</div>
<div class="c" style="left:322px;top:212px;background:#a9d17b">12.20</div>
<div class="c" style="left:368px;top:212px;background:#a9d17b">12.20</div>
<div class="c" style="left:414px;top:212px;background:#a9d17b">12.20</div>
<div class="c" style="left:460px;top:212px;background:#a9d17b">12.20</div>
<div class="c" style="left:506px;top:212px;background:#a8d27b">11.80</div>
<div class="c" style="left:552px;top:212px;background:#a7d37b">11.40</div>
<div class="c" style="left:598px;top:212px;background:#a5d67b">10.30</div>
<div class="c" style="left:644px;top:212px;background:#a4d77c">9.90</div>
<div class="c" style="left:690px;top:212px;background:#a3d87c">9.40</div>
<div class="c" style="left:736px;top:212px;background:#a0db7c">8.20</div>
<div class="c" style="left:782px;top:212px;background:#aacf7b">12.70</div>
<div class="c" style="left:828px;top:212px;background:#b0c97a">14.90</div>
<div class="c" style="left:874px;top:212px;background:#aecb7a">14.40</div>
<div class="c" style="left:920px;top:212px;background:#a7d47b">11.10</div>
<div class="c" style="left:966px;top:212px;background:#9edd7c">7.70</div>
<div class="c" style="left:1012px;top:212px;background:#9ae17d">6.00</div>
<div class="c" style="left:1058px;top:212px;background:#9be17d">6.10</div>
<div class="c" style="left:1104px;top:212px;background:#9ede7c">7.40</div>
<div class="c" style="left:1150px;top:212px;background:#a2d87c">9.30</div>
<div class="c" style="left:1196px;top:212px;background:#a6d57b">10.70</div>
<div class="c" style="left:1242px;top:212px;background:#a8d27b">11.70</div>
<div class="c" style="left:1288px;top:212px;background:#accd7a">13.50</div>
<div class="rh" style="top:227px">2200</div>
<div class="c" style="left:46px;top:227px;background:#b2c77a">15.80</div>
<div class="c" style="left:92px;top:227px;background:#b2c77a">15.80</div>
<div class="c" style="left:138px;top:227px;background:#b2c77a">15.80</div>
<div class="c" style="left:184px;top:227px;background:#b2c77a">15.80</div>
<div class="c" style="left:230px;top:227px;background:#b2c77a">15.80</div>
<div class="c" style="left:276px;top:227px;background:#b2c77a">15.80</div>
<div class="c" style="left:322px;top:227px;background:#b2c77a">15.80</div>
<div class="c" style="left:368px;top:227px;background:#b2c77a">15.80</div>
<div class="c" style="left:414px;top:227px;background:#b2c77a">15.80</div>
<div class="c" style="left:460px;top:227px;background:#b2c77a">15.80</div>
<div class="c" style="left:506px;top:227px;background:#b0c97a">14.90</div>
<div class="c" style="left:552px;top:227px;background:#afca7a">14.80</div>
<div class="c" style="left:598px;top:227px;background:#acce7a">13.30</div>
<div class="c" style="left:644px;top:227px;background:#abcf7b">12.80</div>
<div class="c" style="left:690px;top:227px;background:#abcf7b">12.80</div>
<div class="c" style="left:736px;top:227px;background:#a9d17b">12.20</div>
<div class="c" style="left:782px;top:227px;background:#b2c77a">15.70</div>
<div class="c" style="left:828px;top:227px;background:#b7c179">17.80</div>
<div class="c" style="left:874px;top:227px;background:#b8c079">18.30</div>
<div class="c" style="left:920px;top:227px;background:#aecb7a">14.40</div>
<div class="c" style="left:966px;top:227px;background:#a6d47b">10.80</div>
<div class="c" style="left:1012px;top:227px;background:#a2d97c">9.00</div>
<div class="c" style="left:1058px;top:227px;background:#a0db7c">8.40</div>
<div class="c" style="left:1104px;top:227px;background:#a3d77c">9.70</div>
<div class="c" style="left:1150px;top:227px;background:#a7d37b">11.40</div>
<div class="c" style="left:1196px;top:227px;background:#accd7a">13.40</div>
<div class="c" style="left:1242px;top:227px;background:#afca7a">14.60</div>
<div class="c" style="left:1288px;top:227px;background:#b5c479">17.00</div>
<div class="rh" style="top:242px">2300</div>
<div class="c" style="left:46px;top:242px;background:#babd79">19.40</div>
<div class="c" style="left:92px;top:242px;background:#babd79">19.40</div>
<div class="c" style="left:138px;top:242px;background:#babd79">19.40</div>
<div class="c" style="left:184px;top:242px;background:#babd79">19.40</div>
<div class="c" style="left:230px;top:242px;background:#babd79">19.40</div>
<div class="c" style="left:276px;top:242px;background:#babd79">19.40</div>
<div class="c" style="left:322px;top:242px;background:#babd79">19.40</div>
<div class="c" style="left:368px;top:242px;background:#babd79">19.40</div>
<div class="c" style="left:414px;top:242px;background:#babd79">19.40</div>
<div class="c" style="left:460px;top:242px;background:#babd79">19.40</div>
<div class="c" style="left:506px;top:242px;background:#b8c079">18.50</div>
<div class="c" style="left:552px;top:242px;background:#b7c179">18.10</div>
<div class="c" style="left:598px;top:242px;background:#b3c67a">16.10</div>
<div class="c" style="left:644px;top:242px;background:#b2c77a">15.70</div>
<div class="c" style="left:690px;top:242px;background:#b1c87a">15.40</div>
<div class="c" style="left:736px;top:242px;background:#b2c67a">16.00</div>
<div class="c" style="left:782px;top:242px;background:#b9bf79">18.70</div>
<div class="c" style="left:828px;top:242px;background:#babd79">19.30</div>
<div class="c" style="left:874px;top:242px;background:#bbbc79">19.70</div>
<div class="c" style="left:920px;top:242px;background:#b6c279">17.70</div>
<div class="c" style="left:966px;top:242px;background:#adcc7a">13.90</div>
<div class="c" style="left:1012px;top:242px;background:#a9d17b">12.00</div>
<div class="c" style="left:1058px;top:242px;background:#a6d57b">10.70</div>
<div class="c" style="left:1104px;top:242px;background:#a9d17b">12.00</div>
<div class="c" style="left:1150px;top:242px;background:#adcd7a">13.60</div>
<div class="c" style="left:1196px;top:242px;background:#b3c67a">16.20</div>
<div class="c" style="left:1242px;top:242px;background:#b6c379">17.40</div>
<div class="c" style="left:1288px;top:242px;background:#bcbc78">20.00</div>
<div class="rh" style="top:257px">2400</div>
<div class="c" style="left:46px;top:257px;background:#c3b378">23.00</div>
<div class="c" style="left:92px;top:257px;background:#c3b378">23.00</div>
<div class="c" style="left:138px;top:257px;background:#c3b378">23.00</div>
<div class="c" style="left:184px;top:257px;background:#c3b378">23.00</div>
<div class="c" style="left:230px;top:257px;background:#c3b378">23.00</div>
<div class="c" style="left:276px;top:257px;background:#c3b378">23.00</div>
<div class="c" style="left:322px;top:257px;background:#c3b378">23.00</div>
<div class="c" style="left:368px;top:257px;background:#c3b378">23.00</div>
<div class="c" style="left:414px;top:257px;background:#c3b378">23.00</div>
<div class="c" style="left:460px;top:257px;background:#c3b378">23.00</div>
<div class="c" style="left:506px;top:257px;background:#c1b678">22.00</div>
<div class="c" style="left:552px;top:257px;background:#c0b878">21.50</div>
<div class="c" style="left:598px;top:257px;background:#babe79">19.10</div>
<div class="c" style="left:644px;top:257px;background:#b9bf79">18.60</div>
<div class="c" style="left:690px;top:257px;background:#b8c079">18.40</div>
<div class="c" style="left:736px;top:257px;background:#b9bf79">18.90</div>
<div class="c" style="left:782px;top:257px;background:#beb978">20.80</div>
<div class="c" style="left:828px;top:257px;background:#bfb978">21.10</div>
<div class="c" style="left:874px;top:257px;background:#beb978">21.00</div>
<div class="c" style="left:920px;top:257px;background:#bfb878">21.40</div>
<div class="c" style="left:966px;top:257px;background:#b6c379">17.40</div>
<div class="c" style="left:1012px;top:257px;background:#aecb7a">14.40</div>
<div class="c" style="left:1058px;top:257px;background:#aad07b">12.60</div>
<div class="c" style="left:1104px;top:257px;background:#aecb7a">14.20</div>
<div class="c" style="left:1150px;top:257px;background:#b1c77a">15.60</div>
<div class="c" style="left:1196px;top:257px;background:#b7c179">17.90</div>
<div class="c" style="left:1242px;top:257px;background:#bcbb78">20.20</div>
<div class="c" style="left:1288px;top:257px;background:#c3b378">23.00</div>
<div class="rh" style="top:272px">2500</div>
<div class="c" style="left:46px;top:272px;background:#cca976">26.70</div>
<div class="c" style="left:92px;top:272px;background:#cca976">26.70</div>
<div class="c" style="left:138px;top:272px;background:#cca976">26.70</div>
<div class="c" style="left:184px;top:272px;background:#cca976">26.70</div>
<div class="c" style="left:230px;top:272px;background:#cca976">26.70</div>
<div class="c" style="left:276px;top:272px;background:#cca976">26.70</div>
<div class="c" style="left:322px;top:272px;background:#cca976">26.70</div>
<div class="c" style="left:368px;top:272px;background:#cca976">26.70</div>
<div class="c" style="left:414px;top:272px;background:#cca976">26.70</div>
<div class="c" style="left:460px;top:272px;background:#cca976">26.70</div>
<div class="c" style="left:506px;top:272px;background:#c9ad77">25.40</div>
<div class="c" style="left:552px;top:272px;background:#c7af77">24.70</div>
<div class="c" style="left:598px;top:272px;background:#c1b678">22.10</div>
<div class="c" style="left:644px;top:272px;background:#bfb878">21.30</div>
<div class="c" style="left:690px;top:272px;background:#beba78">20.70</div>
<div class="c" style="left:736px;top:272px;background:#beb978">20.80</div>
<div class="c" style="left:782px;top:272px;background:#c1b678">22.10</div>
<div class="c" style="left:828px;top:272px;background:#c0b778">21.70</div>
<div class="c" style="left:874px;top:272px;background:#c0b778">21.60</div>
<div class="c" style="left:920px;top:272px;background:#c1b678">22.00</div>
<div class="c" style="left:966px;top:272px;background:#bbbc79">19.70</div>
<div class="c" style="left:1012px;top:272px;background:#b3c57a">16.40</div>
<div class="c" style="left:1058px;top:272px;background:#afca7a">14.50</div>
<div class="c" style="left:1104px;top:272px;background:#b3c57a">16.40</div>
<div class="c" style="left:1150px;top:272px;background:#b6c279">17.50</div>
<div class="c" style="left:1196px;top:272px;background:#bbbd79">19.50</div>
<div class="c" style="left:1242px;top:272px;background:#c3b478">22.90</div>
<div class="c" style="left:1288px;top:272px;background:#c8ae77">24.90</div>
<div class="rh" style="top:287px">2750</div>
<div class="c" style="left:46px;top:287px;background:#d5a075">30.30</div>
<div class="c" style="left:92px;top:287px;background:#d5a075">30.30</div>
<div class="c" style="left:138px;top:287px;background:#d5a075">30.30</div>
<div class="c" style="left:184px;top:287px;background:#d5a075">30.30</div>
<div class="c" style="left:230px;top:287px;background:#d5a075">30.30</div>
<div class="c" style="left:276px;top:287px;background:#d5a075">30.30</div>
<div class="c" style="left:322px;top:287px;background:#d5a075">30.30</div>
<div class="c" style="left:368px;top:287px;background:#d5a075">30.30</div>
<div class="c" style="left:414px;top:287px;background:#d5a075">30.30</div>
<div class="c" style="left:460px;top:287px;background:#d5a075">30.30</div>
<div class="c" style="left:506px;top:287px;background:#d1a476">28.90</div>
<div class="c" style="left:552px;top:287px;background:#cfa676">27.90</div>
<div class="c" style="left:598px;top:287px;background:#c9ad77">25.30</div>
<div class="c" style="left:644px;top:287px;background:#c6b077">24.40</div>
<div class="c" style="left:690px;top:287px;background:#c4b277">23.40</div>
<div class="c" style="left:736px;top:287px;background:#c3b478">22.90</div>
<div class="c" style="left:782px;top:287px;background:#c4b277">23.40</div>
<div class="c" style="left:828px;top:287px;background:#c2b578">22.40</div>
<div class="c" style="left:874px;top:287px;background:#c1b578">22.30</div>
<div class="c" style="left:920px;top:287px;background:#c2b578">22.60</div>
<div class="c" style="left:966px;top:287px;background:#c0b778">21.80</div>
<div class="c" style="left:1012px;top:287px;background:#b7c179">17.90</div>
<div class="c" style="left:1058px;top:287px;background:#b3c67a">16.10</div>
<div class="c" style="left:1104px;top:287px;background:#b5c379">17.10</div>
<div class="c" style="left:1150px;top:287px;background:#b8c079">18.40</div>
<div class="c" style="left:1196px;top:287px;background:#bdba78">20.60</div>
<div class="c" style="left:1242px;top:287px;background:#c4b277">23.40</div>
<div class="c" style="left:1288px;top:287px;background:#c9ad77">25.50</div>
<div class="rh" style="top:302px">3000</div>
<div class="c" style="left:46px;top:302px;background:#dd9674">33.90</div>
<div class="c" style="left:92px;top:302px;background:#dd9674">33.90</div>
<div class="c" style="left:138px;top:302px;background:#dd9674">33.90</div>
<div class="c" style="left:184px;top:302px;background:#dd9674">33.90</div>
<div class="c" style="left:230px;top:302px;background:#dd9674">33.90</div>
<div class="c" style="left:276px;top:302px;background:#dd9674">33.90</div>
<div class="c" style="left:322px;top:302px;background:#dd9674">33.90</div>
<div class="c" style="left:368px;top:302px;background:#dd9674">33.90</div>
<div class="c" style="left:414px;top:302px;background:#dd9674">33.90</div>
<div class="c" style="left:460px;top:302px;background:#dd9674">33.90</div>
<div class="c" style="left:506px;top:302px;background:#d99a75">32.30</div>
<div class="c" style="left:552px;top:302px;background:#d79e75">31.10</div>
<div class="c" style="left:598px;top:302px;background:#d1a476">28.60</div>
<div class="c" style="left:644px;top:302px;background:#cea876">27.40</div>
<div class="c" style="left:690px;top:302px;background:#caab77">26.00</div>
<div class="c" style="left:736px;top:302px;background:#c8ae77">25.10</div>
<div class="c" style="left:782px;top:302px;background:#c7af77">24.70</div>
<div class="c" style="left:828px;top:302px;background:#c3b378">23.00</div>
<div class="c" style="left:874px;top:302px;background:#c3b478">22.90</div>
<div class="c" style="left:920px;top:302px;background:#c4b377">23.20</div>
<div class="c" style="left:966px;top:302px;background:#c5b177">23.90</div>
<div class="c" style="left:1012px;top:302px;background:#babd79">19.30</div>
<div class="c" style="left:1058px;top:302px;background:#b6c279">17.60</div>
<div class="c" style="left:1104px;top:302px;background:#b6c279">17.70</div>
<div class="c" style="left:1150px;top:302px;background:#babd79">19.30</div>
<div class="c" style="left:1196px;top:302px;background:#c0b778">21.70</div>
<div class="c" style="left:1242px;top:302px;background:#c5b177">23.90</div>
<div class="c" style="left:1288px;top:302px;background:#c6b077">24.30</div>
<div class="rh" style="top:317px">3500</div>
<div class="c" style="left:46px;top:317px;background:#e68c73">37.60</div>
<div class="c" style="left:92px;top:317px;background:#e68c73">37.60</div>
<div class="c" style="left:138px;top:317px;background:#e68c73">37.60</div>
<div class="c" style="left:184px;top:317px;background:#e68c73">37.60</div>
<div class="c" style="left:230px;top:317px;background:#e68c73">37.60</div>
<div class="c" style="left:276px;top:317px;background:#e68c73">37.60</div>
<div class="c" style="left:322px;top:317px;background:#e68c73">37.60</div>
<div class="c" style="left:368px;top:317px;background:#e68c73">37.60</div>
<div class="c" style="left:414px;top:317px;background:#e68c73">37.60</div>
<div class="c" style="left:460px;top:317px;background:#e68c73">37.60</div>
<div class="c" style="left:506px;top:317px;background:#e29074">36.00</div>
<div class="c" style="left:552px;top:317px;background:#df9474">34.60</div>
<div class="c" style="left:598px;top:317px;background:#da9a75">32.50</div>
<div class="c" style="left:644px;top:317px;background:#d79d75">31.20</div>
<div class="c" style="left:690px;top:317px;background:#d2a276">29.40</div>
<div class="c" style="left:736px;top:317px;background:#cfa676">27.90</div>
<div class="c" style="left:782px;top:317px;background:#cbaa77">26.40</div>
<div class="c" style="left:828px;top:317px;background:#c5b177">23.90</div>
<div class="c" style="left:874px;top:317px;background:#c5b177">23.90</div>
<div class="c" style="left:920px;top:317px;background:#c5b177">24.00</div>
<div class="c" style="left:966px;top:317px;background:#caab77">26.00</div>
<div class="c" style="left:1012px;top:317px;background:#bfb878">21.20</div>
<div class="c" style="left:1058px;top:317px;background:#b9bf79">18.90</div>
<div class="c" style="left:1104px;top:317px;background:#b7c179">18.10</div>
<div class="c" style="left:1150px;top:317px;background:#bcbc78">19.90</div>
<div class="c" style="left:1196px;top:317px;background:#c0b778">21.70</div>
<div class="c" style="left:1242px;top:317px;background:#c4b377">23.30</div>
<div class="c" style="left:1288px;top:317px;background:#c6b077">24.20</div>
<div class="rh" style="top:332px">4000</div>
<div class="c" style="left:46px;top:332px;background:#ef8272">41.20</div>
<div class="c" style="left:92px;top:332px;background:#ef8272">41.20</div>
<div class="c" style="left:138px;top:332px;background:#ef8272">41.20</div>
<div class="c" style="left:184px;top:332px;background:#ef8272">41.20</div>
<div class="c" style="left:230px;top:332px;background:#ef8272">41.20</div>
<div class="c" style="left:276px;top:332px;background:#ef8272">41.20</div>
<div class="c" style="left:322px;top:332px;background:#ef8272">41.20</div>
<div class="c" style="left:368px;top:332px;background:#ef8272">41.20</div>
<div class="c" style="left:414px;top:332px;background:#ef8272">41.20</div>
<div class="c" style="left:460px;top:332px;background:#ef8272">41.20</div>
<div class="c" style="left:506px;top:332px;background:#eb8773">39.60</div>
<div class="c" style="left:552px;top:332px;background:#e78b73">38.00</div>
<div class="c" style="left:598px;top:332px;background:#e38f74">36.40</div>
<div class="c" style="left:644px;top:332px;background:#e09374">34.90</div>
<div class="c" style="left:690px;top:332px;background:#db9975">32.80</div>
<div class="c" style="left:736px;top:332px;background:#d69e75">30.80</div>
<div class="c" style="left:782px;top:332px;background:#cfa676">28.10</div>
<div class="c" style="left:828px;top:332px;background:#c8ae77">25.00</div>
<div class="c" style="left:874px;top:332px;background:#c8ae77">25.00</div>
<div class="c" style="left:920px;top:332px;background:#c8ae77">25.00</div>
<div class="c" style="left:966px;top:332px;background:#cfa676">28.00</div>
<div class="c" style="left:1012px;top:332px;background:#c3b378">23.10</div>
<div class="c" style="left:1058px;top:332px;background:#bcbb78">20.10</div>
<div class="c" style="left:1104px;top:332px;background:#b9bf79">18.60</div>
<div class="c" style="left:1150px;top:332px;background:#bdba78">20.50</div>
<div class="c" style="left:1196px;top:332px;background:#c0b778">21.60</div>
<div class="c" style="left:1242px;top:332px;background:#c3b478">22.80</div>
<div class="c" style="left:1288px;top:332px;background:#c6b077">24.10</div>
<div class="rh" style="top:347px">4500</div>
<div class="c" style="left:46px;top:347px;background:#f67b71">44.10</div>
<div class="c" style="left:92px;top:347px;background:#f67b71">44.10</div>
<div class="c" style="left:138px;top:347px;background:#f67b71">44.10</div>
<div class="c" style="left:184px;top:347px;background:#f67b71">44.10</div>
<div class="c" style="left:230px;top:347px;background:#f67b71">44.10</div>
<div class="c" style="left:276px;top:347px;background:#f67b71">44.10</div>
<div class="c" style="left:322px;top:347px;background:#f67b71">44.10</div>
<div class="c" style="left:368px;top:347px;background:#f67b71">44.10</div>
<div class="c" style="left:414px;top:347px;background:#f67b71">44.10</div>
<div class="c" style="left:460px;top:347px;background:#f67b71">44.10</div>
<div class="c" style="left:506px;top:347px;background:#f17f72">42.30</div>
<div class="c" style="left:552px;top:347px;background:#ed8472">40.50</div>
<div class="c" style="left:598px;top:347px;background:#e98973">38.70</div>
<div class="c" style="left:644px;top:347px;background:#e58e73">37.00</div>
<div class="c" style="left:690px;top:347px;background:#df9474">34.60</div>
<div class="c" style="left:736px;top:347px;background:#d99a75">32.30</div>
<div class="c" style="left:782px;top:347px;background:#d2a276">29.30</div>
<div class="c" style="left:828px;top:347px;background:#caac77">25.80</div>
<div class="c" style="left:874px;top:347px;background:#caac77">25.80</div>
<div class="c" style="left:920px;top:347px;background:#caac77">25.80</div>
<div class="c" style="left:966px;top:347px;background:#d1a476">28.90</div>
<div class="c" style="left:1012px;top:347px;background:#c7af77">24.60</div>
<div class="c" style="left:1058px;top:347px;background:#bfb978">21.10</div>
<div class="c" style="left:1104px;top:347px;background:#bbbd79">19.50</div>
<div class="c" style="left:1150px;top:347px;background:#bcbb78">20.10</div>
<div class="c" style="left:1196px;top:347px;background:#bfb878">21.30</div>
<div class="c" style="left:1242px;top:347px;background:#bfb878">21.40</div>
<div class="c" style="left:1288px;top:347px;background:#c0b778">21.70</div>
<div class="rh" style="top:362px">5000</div>
<div class="c" style="left:46px;top:362px;background:#fd7370">47.00</div>
<div class="c" style="left:92px;top:362px;background:#fd7370">47.00</div>
<div class="c" style="left:138px;top:362px;background:#fd7370">47.00</div>
<div class="c" style="left:184px;top:362px;background:#fd7370">47.00</div>
<div class="c" style="left:230px;top:362px;background:#fd7370">47.00</div>
<div class="c" style="left:276px;top:362px;background:#fd7370">47.00</div>
<div class="c" style="left:322px;top:362px;background:#fd7370">47.00</div>
<div class="c" style="left:368px;top:362px;background:#fd7370">47.00</div>
<div class="c" style="left:414px;top:362px;background:#fd7370">47.00</div>
<div class="c" style="left:460px;top:362px;background:#fd7370">47.00</div>
<div class="c" style="left:506px;top:362px;background:#f87871">44.90</div>
<div class="c" style="left:552px;top:362px;background:#f37e72">42.90</div>
<div class="c" style="left:598px;top:362px;background:#ee8372">40.90</div>
<div class="c" style="left:644px;top:362px;background:#e98873">39.00</div>
<div class="c" style="left:690px;top:362px;background:#e39074">36.20</div>
<div class="c" style="left:736px;top:362px;background:#dc9774">33.60</div>
<div class="c" style="left:782px;top:362px;background:#d4a075">30.20</div>
<div class="c" style="left:828px;top:362px;background:#cbab77">26.20</div>
<div class="c" style="left:874px;top:362px;background:#cbab77">26.20</div>
<div class="c" style="left:920px;top:362px;background:#cbab77">26.20</div>
<div class="c" style="left:966px;top:362px;background:#d3a176">29.70</div>
<div class="c" style="left:1012px;top:362px;background:#caab77">26.00</div>
<div class="c" style="left:1058px;top:362px;background:#c1b678">22.10</div>
<div class="c" style="left:1104px;top:362px;background:#bdba78">20.40</div>
<div class="c" style="left:1150px;top:362px;background:#bbbc79">19.80</div>
<div class="c" style="left:1196px;top:362px;background:#beb978">20.90</div>
<div class="c" style="left:1242px;top:362px;background:#bcbc78">20.00</div>
<div class="c" style="left:1288px;top:362px;background:#beb978">20.80</div>
<div class="rh" style="top:377px">5500</div>
<div class="c" style="left:46px;top:377px;background:#ff7070">48.00</div>
<div class="c" style="left:92px;top:377px;background:#ff7070">48.00</div>
<div class="c" style="left:138px;top:377px;background:#ff7070">48.00</div>
<div class="c" style="left:184px;top:377px;background:#ff7070">48.00</div>
<div class="c" style="left:230px;top:377px;background:#ff7070">48.00</div>
<div class="c" style="left:276px;top:377px;background:#ff7070">48.00</div>
<div class="c" style="left:322px;top:377px;background:#ff7070">48.00</div>
<div class="c" style="left:368px;top:377px;background:#ff7070">48.00</div>
<div class="c" style="left:414px;top:377px;background:#ff7070">48.00</div>
<div class="c" style="left:460px;top:377px;background:#ff7070">48.00</div>
<div class="c" style="left:506px;top:377px;background:#fa7671">45.80</div>
<div class="c" style="left:552px;top:377px;background:#f57b71">43.80</div>
<div class="c" style="left:598px;top:377px;background:#f08172">41.70</div>
<div class="c" style="left:644px;top:377px;background:#eb8672">39.80</div>
<div class="c" style="left:690px;top:377px;background:#e58e73">37.00</div>
<div class="c" style="left:736px;top:377px;background:#de9574">34.30</div>
<div class="c" style="left:782px;top:377px;background:#d69e75">30.80</div>
<div class="c" style="left:828px;top:377px;background:#cca976">26.70</div>
<div class="c" style="left:874px;top:377px;background:#cca976">26.70</div>
<div class="c" style="left:920px;top:377px;background:#cca976">26.70</div>
<div class="c" style="left:966px;top:377px;background:#d3a276">29.60</div>
<div class="c" style="left:1012px;top:377px;background:#cda976">27.00</div>
<div class="c" style="left:1058px;top:377px;background:#c3b378">23.00</div>
<div class="c" style="left:1104px;top:377px;background:#bfb978">21.10</div>
<div class="c" style="left:1150px;top:377px;background:#bcbb78">20.20</div>
<div class="c" style="left:1196px;top:377px;background:#bfb878">21.30</div>
<div class="c" style="left:1242px;top:377px;background:#bdba78">20.40</div>
<div class="c" style="left:1288px;top:377px;background:#bfb978">21.10</div>
<div class="rh" style="top:392px">6000</div>
<div class="c" style="left:46px;top:392px;background:#ff7070">48.00</div>
<div class="c" style="left:92px;top:392px;background:#ff7070">48.00</div>
<div class="c" style="left:138px;top:392px;background:#ff7070">48.00</div>
<div class="c" style="left:184px;top:392px;background:#ff7070">48.00</div>
<div class="c" style="left:230px;top:392px;background:#ff7070">48.00</div>
<div class="c" style="left:276px;top:392px;background:#ff7070">48.00</div>
<div class="c" style="left:322px;top:392px;background:#ff7070">48.00</div>
<div class="c" style="left:368px;top:392px;background:#ff7070">48.00</div>
<div class="c" style="left:414px;top:392px;background:#ff7070">48.00</div>
<div class="c" style="left:460px;top:392px;background:#ff7070">48.00</div>
<div class="c" style="left:506px;top:392px;background:#ff7070">48.00</div>
<div class="c" style="left:552px;top:392px;background:#f97771">45.40</div>
<div class="c" style="left:598px;top:392px;background:#f37d71">43.10</div>
<div class="c" style="left:644px;top:392px;background:#ee8372">41.10</div>
<div class="c" style="left:690px;top:392px;background:#e78b73">38.10</div>
<div class="c" style="left:736px;top:392px;background:#e19274">35.30</div>
<div class="c" style="left:782px;top:392px;background:#d89c75">31.70</div>
<div class="c" style="left:828px;top:392px;background:#cea876">27.40</div>
<div class="c" style="left:874px;top:392px;background:#cea876">27.40</div>
<div class="c" style="left:920px;top:392px;background:#cea876">27.40</div>
<div class="c" style="left:966px;top:392px;background:#d3a276">29.50</div>
<div class="c" style="left:1012px;top:392px;background:#cfa676">28.00</div>
<div class="c" style="left:1058px;top:392px;background:#c5b177">23.80</div>
<div class="c" style="left:1104px;top:392px;background:#c0b778">21.80</div>
<div class="c" style="left:1150px;top:392px;background:#bdba78">20.60</div>
<div class="c" style="left:1196px;top:392px;background:#c0b778">21.70</div>
<div class="c" style="left:1242px;top:392px;background:#beba78">20.70</div>
<div class="c" style="left:1288px;top:392px;background:#c0b778">21.60</div>
<div class="rh" style="top:407px">6500</div>
<div class="c" style="left:46px;top:407px;background:#ff7070">48.00</div>
<div class="c" style="left:92px;top:407px;background:#ff7070">48.00</div>
<div class="c" style="left:138px;top:407px;background:#ff7070">48.00</div>
<div class="c" style="left:184px;top:407px;background:#ff7070">48.00</div>
<div class="c" style="left:230px;top:407px;background:#ff7070">48.00</div>
<div class="c" style="left:276px;top:407px;background:#ff7070">48.00</div>
<div class="c" style="left:322px;top:407px;background:#ff7070">48.00</div>
<div class="c" style="left:368px;top:407px;background:#ff7070">48.00</div>
<div class="c" style="left:414px;top:407px;background:#ff7070">48.00</div>
<div class="c" style="left:460px;top:407px;background:#ff7070">48.00</div>
<div class="c" style="left:506px;top:407px;background:#ff7070">48.00</div>
<div class="c" style="left:552px;top:407px;background:#fa7571">46.10</div>
<div class="c" style="left:598px;top:407px;background:#f67a71">44.40</div>
<div class="c" style="left:644px;top:407px;background:#f37e72">42.80</div>
<div class="c" style="left:690px;top:407px;background:#ed8472">40.60</div>
<div class="c" style="left:736px;top:407px;background:#e88a73">38.50</div>
<div class="c" style="left:782px;top:407px;background:#e29174">35.90</div>
<div class="c" style="left:828px;top:407px;background:#da9975">32.70</div>
<div class="c" style="left:874px;top:407px;background:#d1a376">29.00</div>
<div class="c" style="left:920px;top:407px;background:#d1a376">29.00</div>
<div class="c" style="left:966px;top:407px;background:#d59f75">30.50</div>
<div class="c" style="left:1012px;top:407px;background:#d1a376">29.00</div>
<div class="c" style="left:1058px;top:407px;background:#caab77">26.00</div>
<div class="c" style="left:1104px;top:407px;background:#c5b277">23.70</div>
<div class="c" style="left:1150px;top:407px;background:#c0b678">21.90</div>
<div class="c" style="left:1196px;top:407px;background:#c0b778">21.80</div>
<div class="c" style="left:1242px;top:407px;background:#c2b478">22.70</div>
<div class="c" style="left:1288px;top:407px;background:#c1b678">22.10</div>
<div class="rh" style="top:422px">7000</div>
<div class="c" style="left:46px;top:422px;background:#ff7070">48.00</div>
<div class="c" style="left:92px;top:422px;background:#ff7070">48.00</div>
<div class="c" style="left:138px;top:422px;background:#ff7070">48.00</div>
<div class="c" style="left:184px;top:422px;background:#ff7070">48.00</div>
<div class="c" style="left:230px;top:422px;background:#ff7070">48.00</div>
<div class="c" style="left:276px;top:422px;background:#ff7070">48.00</div>
<div class="c" style="left:322px;top:422px;background:#ff7070">48.00</div>
<div class="c" style="left:368px;top:422px;background:#ff7070">48.00</div>
<div class="c" style="left:414px;top:422px;background:#ff7070">48.00</div>
<div class="c" style="left:460px;top:422px;background:#ff7070">48.00</div>
<div class="c" style="left:506px;top:422px;background:#ff7070">48.00</div>
<div class="c" style="left:552px;top:422px;background:#ff7070">48.00</div>
<div class="c" style="left:598px;top:422px;background:#fb7470">46.40</div>
<div class="c" style="left:644px;top:422px;background:#f87871">45.20</div>
<div class="c" style="left:690px;top:422px;background:#f47c71">43.40</div>
<div class="c" style="left:736px;top:422px;background:#f08172">41.80</div>
<div class="c" style="left:782px;top:422px;background:#eb8673">39.70</div>
<div class="c" style="left:828px;top:422px;background:#e58d73">37.30</div>
<div class="c" style="left:874px;top:422px;background:#df9474">34.50</div>
<div class="c" style="left:920px;top:422px;background:#d69e75">30.90</div>
<div class="c" style="left:966px;top:422px;background:#d79d75">31.50</div>
<div class="c" style="left:1012px;top:422px;background:#d4a175">29.90</div>
<div class="c" style="left:1058px;top:422px;background:#cfa676">28.10</div>
<div class="c" style="left:1104px;top:422px;background:#c9ac77">25.60</div>
<div class="c" style="left:1150px;top:422px;background:#c4b377">23.20</div>
<div class="c" style="left:1196px;top:422px;background:#c0b678">21.90</div>
<div class="c" style="left:1242px;top:422px;background:#c7af77">24.70</div>
<div class="c" style="left:1288px;top:422px;background:#c6b077">24.20</div>
<div class="rh" style="top:437px">7500</div>
<div class="c" style="left:46px;top:437px;background:#ff7070">48.00</div>
<div class="c" style="left:92px;top:437px;background:#ff7070">48.00</div>
<div class="c" style="left:138px;top:437px;background:#ff7070">48.00</div>
<div class="c" style="left:184px;top:437px;background:#ff7070">48.00</div>
<div class="c" style="left:230px;top:437px;background:#ff7070">48.00</div>
<div class="c" style="left:276px;top:437px;background:#ff7070">48.00</div>
<div class="c" style="left:322px;top:437px;background:#ff7070">48.00</div>
<div class="c" style="left:368px;top:437px;background:#ff7070">48.00</div>
<div class="c" style="left:414px;top:437px;background:#ff7070">48.00</div>
<div class="c" style="left:460px;top:437px;background:#ff7070">48.00</div>
<div class="c" style="left:506px;top:437px;background:#ff7070">48.00</div>
<div class="c" style="left:552px;top:437px;background:#ff7070">48.00</div>
<div class="c" style="left:598px;top:437px;background:#ff7070">48.00</div>
<div class="c" style="left:644px;top:437px;background:#ff7070">48.00</div>
<div class="c" style="left:690px;top:437px;background:#fa7571">46.00</div>
<div class="c" style="left:736px;top:437px;background:#f67a71">44.40</div>
<div class="c" style="left:782px;top:437px;background:#f27f72">42.50</div>
<div class="c" style="left:828px;top:437px;background:#ec8572">40.20</div>
<div class="c" style="left:874px;top:437px;background:#e68c73">37.60</div>
<div class="c" style="left:920px;top:437px;background:#de9574">34.30</div>
<div class="c" style="left:966px;top:437px;background:#d99b75">32.10</div>
<div class="c" style="left:1012px;top:437px;background:#d69f75">30.70</div>
<div class="c" style="left:1058px;top:437px;background:#d3a176">29.70</div>
<div class="c" style="left:1104px;top:437px;background:#d0a576">28.20</div>
<div class="c" style="left:1150px;top:437px;background:#c9ac77">25.60</div>
<div class="c" style="left:1196px;top:437px;background:#c6b077">24.30</div>
<div class="c" style="left:1242px;top:437px;background:#caac77">25.80</div>
<div class="c" style="left:1288px;top:437px;background:#caac77">25.90</div>
<div class="rh" style="top:452px">8000</div>
<div class="c" style="left:46px;top:452px;background:#ff7070">48.00</div>
<div class="c" style="left:92px;top:452px;background:#ff7070">48.00</div>
<div class="c" style="left:138px;top:452px;background:#ff7070">48.00</div>
<div class="c" style="left:184px;top:452px;background:#ff7070">48.00</div>
<div class="c" style="left:230px;top:452px;background:#ff7070">48.00</div>
<div class="c" style="left:276px;top:452px;background:#ff7070">48.00</div>
<div class="c" style="left:322px;top:452px;background:#ff7070">48.00</div>
<div class="c" style="left:368px;top:452px;background:#ff7070">48.00</div>
<div class="c" style="left:414px;top:452px;background:#ff7070">48.00</div>
<div class="c" style="left:460px;top:452px;background:#ff7070">48.00</div>
<div class="c" style="left:506px;top:452px;background:#ff7070">48.00</div>
<div class="c" style="left:552px;top:452px;background:#ff7070">48.00</div>
<div class="c" style="left:598px;top:452px;background:#ff7070">48.00</div>
<div class="c" style="left:644px;top:452px;background:#ff7070">48.00</div>
<div class="c" style="left:690px;top:452px;background:#ff7070">48.00</div>
<div class="c" style="left:736px;top:452px;background:#ff7070">48.00</div>
<div class="c" style="left:782px;top:452px;background:#f97671">45.70</div>
<div class="c" style="left:828px;top:452px;background:#f47c71">43.40</div>
<div class="c" style="left:874px;top:452px;background:#ee8372">40.80</div>
<div class="c" style="left:920px;top:452px;background:#e68c73">37.70</div>
<div class="c" style="left:966px;top:452px;background:#dd9674">33.90</div>
<div class="c" style="left:1012px;top:452px;background:#da9a75">32.40</div>
<div class="c" style="left:1058px;top:452px;background:#d79d75">31.30</div>
<div class="c" style="left:1104px;top:452px;background:#d3a175">29.80</div>
<div class="c" style="left:1150px;top:452px;background:#cbaa76">26.50</div>
<div class="c" style="left:1196px;top:452px;background:#c9ad77">25.50</div>
<div class="c" style="left:1242px;top:452px;background:#cea776">27.50</div>
<div class="c" style="left:1288px;top:452px;background:#d2a276">29.30</div>
<div class="rh" style="top:467px">8500</div>
<div class="c" style="left:46px;top:467px;background:#ff7070">48.00</div>
<div class="c" style="left:92px;top:467px;background:#ff7070">48.00</div>
<div class="c" style="left:138px;top:467px;background:#ff7070">48.00</div>
<div class="c" style="left:184px;top:467px;background:#ff7070">48.00</div>
<div class="c" style="left:230px;top:467px;background:#ff7070">48.00</div>
<div class="c" style="left:276px;top:467px;background:#ff7070">48.00</div>
<div class="c" style="left:322px;top:467px;background:#ff7070">48.00</div>
<div class="c" style="left:368px;top:467px;background:#ff7070">48.00</div>
<div class="c" style="left:414px;top:467px;background:#ff7070">48.00</div>
<div class="c" style="left:460px;top:467px;background:#ff7070">48.00</div>
<div class="c" style="left:506px;top:467px;background:#ff7070">48.00</div>
<div class="c" style="left:552px;top:467px;background:#ff7070">48.00</div>
<div class="c" style="left:598px;top:467px;background:#ff7070">48.00</div>
<div class="c" style="left:644px;top:467px;background:#ff7070">48.00</div>
<div class="c" style="left:690px;top:467px;background:#ff7070">48.00</div>
<div class="c" style="left:736px;top:467px;background:#ff7070">48.00</div>
<div class="c" style="left:782px;top:467px;background:#ff7070">48.00</div>
<div class="c" style="left:828px;top:467px;background:#f97671">45.60</div>
<div class="c" style="left:874px;top:467px;background:#f37d71">43.20</div>
<div class="c" style="left:920px;top:467px;background:#ed8572">40.40</div>
<div class="c" style="left:966px;top:467px;background:#e09374">35.00</div>
<div class="c" style="left:1012px;top:467px;background:#db9975">32.90</div>
<div class="c" style="left:1058px;top:467px;background:#d89b75">31.90</div>
<div class="c" style="left:1104px;top:467px;background:#d69f75">30.70</div>
<div class="c" style="left:1150px;top:467px;background:#cda876">27.20</div>
<div class="c" style="left:1196px;top:467px;background:#caac77">25.90</div>
<div class="c" style="left:1242px;top:467px;background:#d0a576">28.30</div>
<div class="c" style="left:1288px;top:467px;background:#d0a576">28.50</div>
<div class="rh" style="top:482px">9000</div>
<div class="c" style="left:46px;top:482px;background:#ff7070">48.00</div>
<div class="c" style="left:92px;top:482px;background:#ff7070">48.00</div>
<div class="c" style="left:138px;top:482px;background:#ff7070">48.00</div>
<div class="c" style="left:184px;top:482px;background:#ff7070">48.00</div>
<div class="c" style="left:230px;top:482px;background:#ff7070">48.00</div>
<div class="c" style="left:276px;top:482px;background:#ff7070">48.00</div>
<div class="c" style="left:322px;top:482px;background:#ff7070">48.00</div>
<div class="c" style="left:368px;top:482px;background:#ff7070">48.00</div>
<div class="c" style="left:414px;top:482px;background:#ff7070">48.00</div>
<div class="c" style="left:460px;top:482px;background:#ff7070">48.00</div>
<div class="c" style="left:506px;top:482px;background:#ff7070">48.00</div>
<div class="c" style="left:552px;top:482px;background:#ff7070">48.00</div>
<div class="c" style="left:598px;top:482px;background:#ff7070">48.00</div>
<div class="c" style="left:644px;top:482px;background:#ff7070">48.00</div>
<div class="c" style="left:690px;top:482px;background:#ff7070">48.00</div>
<div class="c" style="left:736px;top:482px;background:#ff7070">48.00</div>
<div class="c" style="left:782px;top:482px;background:#ff7070">48.00</div>
<div class="c" style="left:828px;top:482px;background:#ff7070">48.00</div>
<div class="c" style="left:874px;top:482px;background:#f97771">45.30</div>
<div class="c" style="left:920px;top:482px;background:#ef8272">41.50</div>
<div class="c" style="left:966px;top:482px;background:#e48e73">36.70</div>
<div class="c" style="left:1012px;top:482px;background:#de9574">34.40</div>
<div class="c" style="left:1058px;top:482px;background:#db9875">33.00</div>
<div class="c" style="left:1104px;top:482px;background:#d99a75">32.30</div>
<div class="c" style="left:1150px;top:482px;background:#d2a376">29.20</div>
<div class="c" style="left:1196px;top:482px;background:#cea776">27.70</div>
<div class="c" style="left:1242px;top:482px;background:#d0a576">28.50</div>
<div class="c" style="left:1288px;top:482px;background:#d1a476">28.60</div>
<div class="rh" style="top:497px">10000</div>
<div class="c" style="left:46px;top:497px;background:#ff7070">48.00</div>
<div class="c" style="left:92px;top:497px;background:#ff7070">48.00</div>
<div class="c" style="left:138px;top:497px;background:#ff7070">48.00</div>
<div class="c" style="left:184px;top:497px;background:#ff7070">48.00</div>
<div class="c" style="left:230px;top:497px;background:#ff7070">48.00</div>
<div class="c" style="left:276px;top:497px;background:#ff7070">48.00</div>
<div class="c" style="left:322px;top:497px;background:#ff7070">48.00</div>
<div class="c" style="left:368px;top:497px;background:#ff7070">48.00</div>
<div class="c" style="left:414px;top:497px;background:#ff7070">48.00</div>
<div class="c" style="left:460px;top:497px;background:#ff7070">48.00</div>
<div class="c" style="left:506px;top:497px;background:#ff7070">48.00</div>
<div class="c" style="left:552px;top:497px;background:#ff7070">48.00</div>
<div class="c" style="left:598px;top:497px;background:#ff7070">48.00</div>
<div class="c" style="left:644px;top:497px;background:#ff7070">48.00</div>
<div class="c" style="left:690px;top:497px;background:#ff7070">48.00</div>
<div class="c" style="left:736px;top:497px;background:#ff7070">48.00</div>
<div class="c" style="left:782px;top:497px;background:#ff7070">48.00</div>
<div class="c" style="left:828px;top:497px;background:#ff7070">48.00</div>
<div class="c" style="left:874px;top:497px;background:#ff7070">48.00</div>
<div class="c" style="left:920px;top:497px;background:#f08172">41.70</div>
<div class="c" style="left:966px;top:497px;background:#e48e73">36.90</div>
<div class="c" style="left:1012px;top:497px;background:#df9474">34.70</div>
<div class="c" style="left:1058px;top:497px;background:#da9a75">32.60</div>
<div class="c" style="left:1104px;top:497px;background:#da9a75">32.40</div>
<div class="c" style="left:1150px;top:497px;background:#d4a175">29.90</div>
<div class="c" style="left:1196px;top:497px;background:#d0a576">28.40</div>
<div class="c" style="left:1242px;top:497px;background:#d79d75">31.50</div>
<div class="c" style="left:1288px;top:497px;background:#d89b75">31.90</div>
</div>
<div style="left:8px;top:594px;width:1364px;height:25px;background:#f0f0f0"><svg style="left:1352px;top:13px" width="10" height="10"><path d="M7 1h2v2h-2zM4 4h2v2h-2zM7 4h2v2h-2zM1 7h2v2h-2zM4 7h2v2h-2zM7 7h2v2h-2z" fill="#b4b4b4"/></svg></div>
</div>
<div id="gw">
<div style="left:0;top:0;width:864px;height:31px;background:#e9f3f8"></div>
<svg style="left:8px;top:9px" width="16" height="12"><use href="#chip"/></svg>
<span class="t" style="left:29px;top:8px;font-size:12px;letter-spacing:0">Ignition advance-angle characteristic map 1</span>
<svg style="left:740px;top:5px" width="110" height="20"><path d="M5 10.5h10M51.5 6.5h8.5v8.500h-8.500zM96.500 5.500l9.500 9.500M106 5.500l-9.500 9.500" fill="none" stroke="#1a1a1a" stroke-width="1.100"/></svg>
<span class="t" style="left:7px;top:33px;font-size:11.6px;letter-spacing:0">Graph</span>
<span class="t" style="left:53px;top:33px;font-size:11.6px;letter-spacing:0">View</span>
<div style="left:0;top:49px;width:864px;height:27px;background:#f0f0f0"></div>
<div style="left:5px;top:54px;width:2px;height:19px;border-left:1px solid #a0a0a0;border-right:1px solid #fff"></div>
<svg style="left:14px;top:58px" width="12" height="13" viewBox="0 0 12 13"><path d="M1 1l10 11M11 1l-10 11" stroke="#e00000" stroke-width="2.200" fill="none"/></svg>
<div style="left:40px;top:54px;width:2px;height:19px;border-left:1px solid #a0a0a0;border-right:1px solid #fff"></div>
<div style="left:46px;top:53px;width:23px;height:21px;background:#cce4f7;border:1px solid #a5d2f5;border-radius:2px"></div>
<svg style="left:49px;top:55px" width="17" height="17" viewBox="0 0 17 17"><path d="M8.500 .5l8 8-8 8-8-8z" fill="#000"/><rect x="4.500" y="4.500" width="8" height="8" fill="#fff"/><path d="M8.500 4.500v8M4.500 8.500h8" stroke="#e00000" stroke-width="1.200" fill="none"/></svg>
<svg style="left:72px;top:55px" width="18" height="18" viewBox="0 0 18 18"><path d="M1 16l3-8 3 5 4-8 3 4 3-7" fill="none" stroke="#e00000" stroke-width="1.300"/><g fill="none" stroke="#00f" stroke-width="1.100"><circle cx="4" cy="8" r="1.600"/><circle cx="7" cy="13" r="1.600"/><circle cx="11" cy="5" r="1.600"/><circle cx="14" cy="9" r="1.600"/></g></svg>
<div style="left:92px;top:53px;width:23px;height:21px;background:#cce4f7;border:1px solid #a5d2f5;border-radius:2px"></div>
<svg style="left:95px;top:55px" width="18" height="18" viewBox="0 0 18 18"><path d="M2.500 2v13.500M2.500 16.500h14" fill="none" stroke="#000" stroke-width="1.200" stroke-dasharray="1.500 1"/><path d="M3 11l3-3 2 2 3-6 2 3 2 2 2-1" fill="none" stroke="#00f" stroke-width="1.500"/><path d="M3 13l3-2 2 1 3-4 2 2 2-3 2 2" fill="none" stroke="#e00000" stroke-width="2"/></svg>
<svg style="left:118px;top:56px" width="18" height="16" viewBox="0 0 18 16"><path d="M1 14.500l5-6h11l-4 6zM6 8.500l4-5h7l-3.500 5M3.500 11.500h11" fill="none" stroke="#000" stroke-width="1.200"/></svg>
<div style="left:138px;top:53px;width:23px;height:21px;background:#cce4f7;border:1px solid #a5d2f5;border-radius:2px"></div>
<svg style="left:141px;top:56px" width="18" height="16" viewBox="0 0 18 16"><path d="M1 3.500h12" stroke="#e00000" stroke-width="1.600"/><path d="M1 6.500h12" stroke="#e8d800" stroke-width="1.600"/><path d="M1 9.500h12" stroke="#00b000" stroke-width="1.600"/><path d="M1 12.500h12" stroke="#00f" stroke-width="1.600"/><path d="M15.500 1v14M15.500 1l-3 2M15.500 15l-3-2" stroke="#000" stroke-width="1.300" fill="none"/></svg>
<svg style="left:0;top:76px" width="864" height="490" viewBox="498 399 864 490" font-family="Liberation Sans,sans-serif" font-size="9">
<path d="M730.5,776.5 L916.5,675.5M731.3,776.8 L917.3,675.8M732.4,777.3 L918.4,676.3M733.2,777.6 L919.2,676.6M734.5,778.1 L920.5,677.1M735.9,778.7 L921.8,677.7M737.5,779.3 L923.4,678.3M739.4,780.1 L925.3,679.1M741.2,780.9 L927.1,679.8M743.5,781.8 L929.4,680.7M745.5,782.6 L931.4,681.5M748.0,783.6 L933.8,682.5M750.7,784.7 L936.5,683.6M753.3,785.8 L939.1,684.7M757.4,787.4 L943.1,686.3M761.4,789.1 L947.1,687.9M766.8,791.3 L952.4,690.1M773.5,794.0 L959.1,692.8M781.6,797.3 L967.1,696.0M792.3,801.6 L977.7,700.3M805.8,807.1 L991.0,705.7M821.9,813.6 L1007.0,712.2M838.0,820.2 L1023.0,718.6M856.8,827.8 L1041.6,726.2M878.3,836.6 L1062.9,734.8M899.8,845.3 L1084.2,743.5M921.3,854.1 L1105.4,752.1M945.5,863.9 L1129.4,761.8M730.5,776.5 L945.5,863.9M732.6,775.4 L947.6,862.7M734.7,774.2 L949.7,861.6M735.8,773.6 L950.7,861.0M736.8,773.1 L951.8,860.4M737.9,772.5 L952.8,859.8M739.0,771.9 L953.9,859.3M740.0,771.3 L954.9,858.7M741.1,770.8 L955.9,858.1M743.2,769.6 L958.0,856.9M745.3,768.5 L960.1,855.8M747.4,767.3 L962.2,854.6M749.5,766.2 L964.3,853.5M751.6,765.0 L966.4,852.3M753.8,763.9 L968.5,851.1M755.9,762.7 L970.6,850.0M758.0,761.6 L972.7,848.8M763.3,758.7 L977.9,845.9M768.5,755.8 L983.1,843.0M779.1,750.1 L993.6,837.2M789.7,744.4 L1004.0,831.4M800.2,738.6 L1014.5,825.6M810.8,732.9 L1024.9,819.8M821.4,727.1 L1035.4,814.0M832.0,721.4 L1045.8,808.2M842.5,715.7 L1056.3,802.4M853.1,709.9 L1066.7,796.6M863.7,704.2 L1077.2,790.8M874.2,698.5 L1087.6,785.0M884.8,692.7 L1098.1,779.2M895.4,687.0 L1108.5,773.4M916.5,675.5 L1129.4,761.8" fill="none" stroke="#8c8c8c" stroke-width="1" stroke-dasharray="3 3"/>
<path d="M730.5,577.7 L916.5,476.7 L1129.4,563.0M730.5,627.4 L916.5,526.4 L1129.4,612.7M730.5,677.1 L916.5,576.1 L1129.4,662.4M730.5,726.8 L916.5,625.8 L1129.4,712.1" fill="none" stroke="#6e6e6e" stroke-width="1" stroke-dasharray="3 3"/>
<path d="M730.5,776.5 L730.5,528.0 L916.5,427.0 L1129.4,513.3 L1129.4,761.8M730.5,776.5 L945.5,863.9 L1129.4,761.8 L916.5,675.5 L730.5,776.5M916.5,675.5 L916.5,427.0" fill="none" stroke="#808080" stroke-width="1"/>
<g stroke="#000" stroke-width="1" stroke-linejoin="round">
<path d="M895.4,440.3 896.2,440.7 917.3,429.2 916.5,428.9z" fill="#ff0800"/>
<path d="M896.2,440.7 897.2,441.1 918.4,429.6 917.3,429.2z" fill="#ff0800"/>
<path d="M897.2,441.1 898.0,441.4 919.2,429.9 918.4,429.6z" fill="#ff0800"/>
<path d="M898.0,441.4 899.4,442.0 920.5,430.5 919.2,429.9z" fill="#ff0800"/>
<path d="M899.4,442.0 900.7,442.5 921.8,431.0 920.5,430.5z" fill="#ff0800"/>
<path d="M900.7,442.5 902.3,443.1 923.4,431.7 921.8,431.0z" fill="#ff0800"/>
<path d="M902.3,443.1 904.1,443.9 925.3,432.4 923.4,431.7z" fill="#ff0800"/>
<path d="M904.1,443.9 906.0,444.7 927.1,433.2 925.3,432.4z" fill="#ff0800"/>
<path d="M906.0,444.7 908.3,445.6 929.4,434.1 927.1,433.2z" fill="#ff0800"/>
<path d="M908.3,445.6 910.3,446.4 931.4,434.9 929.4,434.1z" fill="#ff0800"/>
<path d="M910.3,446.4 912.7,447.4 933.8,435.9 931.4,434.9z" fill="#ff0800"/>
<path d="M912.7,447.4 915.4,448.4 936.5,437.0 933.8,435.9z" fill="#ff0800"/>
<path d="M915.4,448.4 918.0,449.5 939.1,438.0 936.5,437.0z" fill="#ff0800"/>
<path d="M918.0,449.5 922.0,451.1 943.1,439.6 939.1,438.0z" fill="#ff0800"/>
<path d="M922.0,451.1 926.0,452.8 947.1,441.3 943.1,439.6z" fill="#ff0800"/>
<path d="M926.0,452.8 931.3,454.9 952.4,443.4 947.1,441.3z" fill="#ff0800"/>
<path d="M931.3,454.9 938.0,457.6 959.1,446.1 952.4,443.4z" fill="#ff0800"/>
<path d="M938.0,457.6 946.0,473.4 967.1,449.4 959.1,446.1z" fill="#ff1500"/>
<path d="M946.0,473.4 956.6,495.4 977.7,483.0 967.1,449.4z" fill="#ff5200"/>
<path d="M956.6,495.4 970.0,523.2 991.0,510.7 977.7,483.0z" fill="#ffb000"/>
<path d="M970.0,523.2 985.9,540.4 1007.0,527.4 991.0,510.7z" fill="#fff300"/>
<path d="M985.9,540.4 1001.9,553.4 1023.0,543.7 1007.0,527.4z" fill="#e5ff00"/>
<path d="M1001.9,553.4 1020.6,564.2 1041.6,552.2 1023.0,543.7z" fill="#d0ff00"/>
<path d="M1020.6,564.2 1041.9,587.2 1062.9,572.4 1041.6,552.2z" fill="#b1ff00"/>
<path d="M1041.9,587.2 1063.2,602.9 1084.2,588.0 1062.9,572.4z" fill="#8f0"/>
<path d="M1063.2,602.9 1084.5,607.8 1105.4,582.2 1084.2,588.0z" fill="#8cff00"/>
<path d="M1084.5,607.8 1108.5,617.0 1129.4,590.1 1105.4,582.2z" fill="#a1ff00"/>
<path d="M884.8,446.1 885.6,446.4 896.2,440.7 895.4,440.3z" fill="#ff0800"/>
<path d="M885.6,446.4 886.7,446.8 897.2,441.1 896.2,440.7z" fill="#ff0800"/>
<path d="M886.7,446.8 887.5,447.2 898.0,441.4 897.2,441.1z" fill="#ff0800"/>
<path d="M887.5,447.2 888.8,447.7 899.4,442.0 898.0,441.4z" fill="#ff0800"/>
<path d="M888.8,447.7 890.1,448.2 900.7,442.5 899.4,442.0z" fill="#ff0800"/>
<path d="M890.1,448.2 891.7,448.9 902.3,443.1 900.7,442.5z" fill="#ff0800"/>
<path d="M891.7,448.9 893.6,449.6 904.1,443.9 902.3,443.1z" fill="#ff0800"/>
<path d="M893.6,449.6 895.5,450.4 906.0,444.7 904.1,443.9z" fill="#ff0800"/>
<path d="M895.5,450.4 897.7,451.3 908.3,445.6 906.0,444.7z" fill="#ff0800"/>
<path d="M897.7,451.3 899.7,452.1 910.3,446.4 908.3,445.6z" fill="#ff0800"/>
<path d="M899.7,452.1 902.1,453.1 912.7,447.4 910.3,446.4z" fill="#ff0800"/>
<path d="M902.1,453.1 904.8,454.2 915.4,448.4 912.7,447.4z" fill="#ff0800"/>
<path d="M904.8,454.2 907.4,455.3 918.0,449.5 915.4,448.4z" fill="#ff0800"/>
<path d="M907.4,455.3 911.5,456.9 922.0,451.1 918.0,449.5z" fill="#ff0800"/>
<path d="M911.5,456.9 915.5,458.5 926.0,452.8 922.0,451.1z" fill="#ff0800"/>
<path d="M915.5,458.5 920.8,460.7 931.3,454.9 926.0,452.8z" fill="#ff0800"/>
<path d="M920.8,460.7 927.4,474.5 938.0,457.6 931.3,454.9z" fill="#ff1300"/>
<path d="M927.4,474.5 935.4,489.0 946.0,473.4 938.0,457.6z" fill="#ff3700"/>
<path d="M935.4,489.0 946.1,506.3 956.6,495.4 946.0,473.4z" fill="#ff6f00"/>
<path d="M946.1,506.3 959.4,536.8 970.0,523.2 956.6,495.4z" fill="#ffbf00"/>
<path d="M959.4,536.8 975.4,553.1 985.9,540.4 970.0,523.2z" fill="#f9ff00"/>
<path d="M975.4,553.1 991.4,564.2 1001.9,553.4 985.9,540.4z" fill="#d9ff00"/>
<path d="M991.4,564.2 1010.1,577.4 1020.6,564.2 1001.9,553.4z" fill="#c4ff00"/>
<path d="M1010.1,577.4 1031.4,602.3 1041.9,587.2 1020.6,564.2z" fill="#9cff00"/>
<path d="M1031.4,602.3 1052.7,617.0 1063.2,602.9 1041.9,587.2z" fill="#6fff00"/>
<path d="M1052.7,617.0 1074.1,614.5 1084.5,607.8 1063.2,602.9z" fill="#71ff00"/>
<path d="M1074.1,614.5 1098.1,623.3 1108.5,617.0 1084.5,607.8z" fill="#81ff00"/>
<path d="M874.2,451.8 875.0,452.1 885.6,446.4 884.8,446.1z" fill="#ff0800"/>
<path d="M875.0,452.1 876.1,452.6 886.7,446.8 885.6,446.4z" fill="#ff0800"/>
<path d="M876.1,452.6 876.9,452.9 887.5,447.2 886.7,446.8z" fill="#ff0800"/>
<path d="M876.9,452.9 878.2,453.4 888.8,447.7 887.5,447.2z" fill="#ff0800"/>
<path d="M878.2,453.4 879.6,454.0 890.1,448.2 888.8,447.7z" fill="#ff0800"/>
<path d="M879.6,454.0 881.2,454.6 891.7,448.9 890.1,448.2z" fill="#ff0800"/>
<path d="M881.2,454.6 883.0,455.4 893.6,449.6 891.7,448.9z" fill="#ff0800"/>
<path d="M883.0,455.4 884.9,456.1 895.5,450.4 893.6,449.6z" fill="#ff0800"/>
<path d="M884.9,456.1 887.2,457.1 897.7,451.3 895.5,450.4z" fill="#ff0800"/>
<path d="M887.2,457.1 889.2,457.9 899.7,452.1 897.7,451.3z" fill="#ff0800"/>
<path d="M889.2,457.9 891.6,458.8 902.1,453.1 899.7,452.1z" fill="#ff0800"/>
<path d="M891.6,458.8 894.2,459.9 904.8,454.2 902.1,453.1z" fill="#ff0800"/>
<path d="M894.2,459.9 896.9,461.0 907.4,455.3 904.8,454.2z" fill="#ff0800"/>
<path d="M896.9,461.0 900.9,462.6 911.5,456.9 907.4,455.3z" fill="#ff0800"/>
<path d="M900.9,462.6 904.9,464.3 915.5,458.5 911.5,456.9z" fill="#ff0800"/>
<path d="M904.9,464.3 910.2,477.1 920.8,460.7 915.5,458.5z" fill="#ff1300"/>
<path d="M910.2,477.1 916.9,490.5 927.4,474.5 920.8,460.7z" fill="#ff3400"/>
<path d="M916.9,490.5 924.9,505.9 935.4,489.0 927.4,474.5z" fill="#ff6200"/>
<path d="M924.9,505.9 935.6,524.6 946.1,506.3 935.4,489.0z" fill="#ff9600"/>
<path d="M935.6,524.6 948.9,547.7 959.4,536.8 946.1,506.3z" fill="#ffdf00"/>
<path d="M948.9,547.7 964.9,561.2 975.4,553.1 959.4,536.8z" fill="#e2ff00"/>
<path d="M964.9,561.2 980.9,572.8 991.4,564.2 975.4,553.1z" fill="#c7ff00"/>
<path d="M980.9,572.8 999.6,587.4 1010.1,577.4 991.4,564.2z" fill="#b0ff00"/>
<path d="M999.6,587.4 1020.9,611.4 1031.4,602.3 1010.1,577.4z" fill="#83ff00"/>
<path d="M1020.9,611.4 1042.3,624.7 1052.7,617.0 1031.4,602.3z" fill="#57ff00"/>
<path d="M1042.3,624.7 1063.6,624.0 1074.1,614.5 1052.7,617.0z" fill="#61ff00"/>
<path d="M1063.6,624.0 1087.6,625.4 1098.1,623.3 1074.1,614.5z" fill="#80ff00"/>
<path d="M863.7,457.6 864.5,457.9 875.0,452.1 874.2,451.8z" fill="#ff0800"/>
<path d="M864.5,457.9 865.5,458.3 876.1,452.6 875.0,452.1z" fill="#ff0800"/>
<path d="M865.5,458.3 866.3,458.6 876.9,452.9 876.1,452.6z" fill="#ff0800"/>
<path d="M866.3,458.6 867.7,459.2 878.2,453.4 876.9,452.9z" fill="#ff0800"/>
<path d="M867.7,459.2 869.0,459.7 879.6,454.0 878.2,453.4z" fill="#ff0800"/>
<path d="M869.0,459.7 870.6,460.4 881.2,454.6 879.6,454.0z" fill="#ff0800"/>
<path d="M870.6,460.4 872.5,461.1 883.0,455.4 881.2,454.6z" fill="#ff0800"/>
<path d="M872.5,461.1 874.3,461.9 884.9,456.1 883.0,455.4z" fill="#ff0800"/>
<path d="M874.3,461.9 876.6,462.8 887.2,457.1 884.9,456.1z" fill="#ff0800"/>
<path d="M876.6,462.8 878.6,463.6 889.2,457.9 887.2,457.1z" fill="#ff0800"/>
<path d="M878.6,463.6 881.0,464.6 891.6,458.8 889.2,457.9z" fill="#ff0800"/>
<path d="M881.0,464.6 883.7,465.7 894.2,459.9 891.6,458.8z" fill="#ff0800"/>
<path d="M883.7,465.7 886.3,466.8 896.9,461.0 894.2,459.9z" fill="#ff0800"/>
<path d="M886.3,466.8 890.3,477.7 900.9,462.6 896.9,461.0z" fill="#f10"/>
<path d="M890.3,477.7 894.4,486.8 904.9,464.3 900.9,462.6z" fill="#f20"/>
<path d="M894.4,486.8 899.7,497.8 910.2,477.1 904.9,464.3z" fill="#ff3e00"/>
<path d="M899.7,497.8 906.4,511.2 916.9,490.5 910.2,477.1z" fill="#ff6800"/>
<path d="M906.4,511.2 914.4,526.5 924.9,505.9 916.9,490.5z" fill="#ff9700"/>
<path d="M914.4,526.5 925.0,546.2 935.6,524.6 924.9,505.9z" fill="#ffce00"/>
<path d="M925.0,546.2 938.4,561.9 948.9,547.7 935.6,524.6z" fill="#f4ff00"/>
<path d="M938.4,561.9 954.4,574.9 964.9,561.2 948.9,547.7z" fill="#caff00"/>
<path d="M954.4,574.9 970.4,586.0 980.9,572.8 964.9,561.2z" fill="#b2ff00"/>
<path d="M970.4,586.0 989.1,600.6 999.6,587.4 980.9,572.8z" fill="#9aff00"/>
<path d="M989.1,600.6 1010.4,621.3 1020.9,611.4 999.6,587.4z" fill="#6fff00"/>
<path d="M1010.4,621.3 1031.8,636.1 1042.3,624.7 1020.9,611.4z" fill="#48ff00"/>
<path d="M1031.8,636.1 1053.1,637.7 1063.6,624.0 1042.3,624.7z" fill="#4eff00"/>
<path d="M1053.1,637.7 1077.2,647.0 1087.6,625.4 1063.6,624.0z" fill="#68ff00"/>
<path d="M853.1,463.3 853.9,463.6 864.5,457.9 863.7,457.6z" fill="#ff0800"/>
<path d="M853.9,463.6 855.0,464.1 865.5,458.3 864.5,457.9z" fill="#ff0800"/>
<path d="M855.0,464.1 855.8,464.4 866.3,458.6 865.5,458.3z" fill="#ff0800"/>
<path d="M855.8,464.4 857.1,464.9 867.7,459.2 866.3,458.6z" fill="#ff0800"/>
<path d="M857.1,464.9 858.4,465.5 869.0,459.7 867.7,459.2z" fill="#ff0800"/>
<path d="M858.4,465.5 860.0,466.1 870.6,460.4 869.0,459.7z" fill="#ff0800"/>
<path d="M860.0,466.1 861.9,466.9 872.5,461.1 870.6,460.4z" fill="#ff0800"/>
<path d="M861.9,466.9 863.8,467.6 874.3,461.9 872.5,461.1z" fill="#ff0800"/>
<path d="M863.8,467.6 866.0,468.5 876.6,462.8 874.3,461.9z" fill="#ff0800"/>
<path d="M866.0,468.5 868.0,469.4 878.6,463.6 876.6,462.8z" fill="#ff0800"/>
<path d="M868.0,469.4 870.4,470.3 881.0,464.6 878.6,463.6z" fill="#ff0800"/>
<path d="M870.4,470.3 873.1,478.9 883.7,465.7 881.0,464.6z" fill="#ff0f00"/>
<path d="M873.1,478.9 875.8,485.5 886.3,466.8 883.7,465.7z" fill="#ff1d00"/>
<path d="M875.8,485.5 879.8,495.5 890.3,477.7 886.3,466.8z" fill="#ff3500"/>
<path d="M879.8,495.5 883.8,504.6 894.4,486.8 890.3,477.7z" fill="#ff5600"/>
<path d="M883.8,504.6 889.1,516.5 899.7,497.8 894.4,486.8z" fill="#ff7800"/>
<path d="M889.1,516.5 895.8,530.4 906.4,511.2 899.7,497.8z" fill="#ffa200"/>
<path d="M895.8,530.4 903.8,546.7 914.4,526.5 906.4,511.2z" fill="#ffd200"/>
<path d="M903.8,546.7 914.5,567.8 925.0,546.2 914.4,526.5z" fill="#f1ff00"/>
<path d="M914.5,567.8 927.9,570.4 938.4,561.9 925.0,546.2z" fill="#c9ff00"/>
<path d="M927.9,570.4 943.9,584.4 954.4,574.9 938.4,561.9z" fill="#b3ff00"/>
<path d="M943.9,584.4 959.9,599.2 970.4,586.0 954.4,574.9z" fill="#97ff00"/>
<path d="M959.9,599.2 978.6,618.5 989.1,600.6 970.4,586.0z" fill="#76ff00"/>
<path d="M978.6,618.5 1000.0,638.3 1010.4,621.3 989.1,600.6z" fill="#4bff00"/>
<path d="M1000.0,638.3 1021.3,653.0 1031.8,636.1 1010.4,621.3z" fill="#27ff00"/>
<path d="M1021.3,653.0 1042.7,648.6 1053.1,637.7 1031.8,636.1z" fill="#2fff00"/>
<path d="M1042.7,648.6 1066.7,660.7 1077.2,647.0 1053.1,637.7z" fill="#42ff00"/>
<path d="M842.5,469.0 843.3,469.4 853.9,463.6 853.1,463.3z" fill="#ff0800"/>
<path d="M843.3,469.4 844.4,469.8 855.0,464.1 853.9,463.6z" fill="#ff0800"/>
<path d="M844.4,469.8 845.2,470.1 855.8,464.4 855.0,464.1z" fill="#ff0800"/>
<path d="M845.2,470.1 846.5,470.7 857.1,464.9 855.8,464.4z" fill="#ff0800"/>
<path d="M846.5,470.7 847.9,471.2 858.4,465.5 857.1,464.9z" fill="#ff0800"/>
<path d="M847.9,471.2 849.5,471.9 860.0,466.1 858.4,465.5z" fill="#ff0800"/>
<path d="M849.5,471.9 851.3,472.6 861.9,466.9 860.0,466.1z" fill="#ff0800"/>
<path d="M851.3,472.6 853.2,473.4 863.8,467.6 861.9,466.9z" fill="#ff0800"/>
<path d="M853.2,473.4 855.5,474.3 866.0,468.5 863.8,467.6z" fill="#ff0800"/>
<path d="M855.5,474.3 857.5,475.1 868.0,469.4 866.0,468.5z" fill="#ff0800"/>
<path d="M857.5,475.1 859.9,484.9 870.4,470.3 868.0,469.4z" fill="#f10"/>
<path d="M859.9,484.9 862.6,493.9 873.1,478.9 870.4,470.3z" fill="#ff2a00"/>
<path d="M862.6,493.9 865.2,502.4 875.8,485.5 873.1,478.9z" fill="#ff4700"/>
<path d="M865.2,502.4 869.2,514.3 879.8,495.5 875.8,485.5z" fill="#ff6700"/>
<path d="M869.2,514.3 873.3,525.7 883.8,504.6 879.8,495.5z" fill="#ff8c00"/>
<path d="M873.3,525.7 878.6,540.0 889.1,516.5 883.8,504.6z" fill="#ffb400"/>
<path d="M878.6,540.0 885.3,557.6 895.8,530.4 889.1,516.5z" fill="#ffe500"/>
<path d="M885.3,557.6 893.3,578.0 903.8,546.7 895.8,530.4z" fill="#dfff00"/>
<path d="M893.3,578.0 904.0,582.4 914.5,567.8 903.8,546.7z" fill="#afff00"/>
<path d="M904.0,582.4 917.3,580.8 927.9,570.4 914.5,567.8z" fill="#a8ff00"/>
<path d="M917.3,580.8 933.4,594.3 943.9,584.4 927.9,570.4z" fill="#a3ff00"/>
<path d="M933.4,594.3 949.4,614.8 959.9,599.2 943.9,584.4z" fill="#7dff00"/>
<path d="M949.4,614.8 968.1,633.1 978.6,618.5 959.9,599.2z" fill="#4fff00"/>
<path d="M968.1,633.1 989.5,650.1 1000.0,638.3 978.6,618.5z" fill="#24ff00"/>
<path d="M989.5,650.1 1010.8,659.3 1021.3,653.0 1000.0,638.3z" fill="#0aff00"/>
<path d="M1010.8,659.3 1032.2,663.7 1042.7,648.6 1021.3,653.0z" fill="#15ff00"/>
<path d="M1032.2,663.7 1056.3,676.3 1066.7,660.7 1042.7,648.6z" fill="#21ff00"/>
<path d="M832.0,474.8 832.8,475.1 843.3,469.4 842.5,469.0z" fill="#ff0800"/>
<path d="M832.8,475.1 833.8,475.5 844.4,469.8 843.3,469.4z" fill="#ff0800"/>
<path d="M833.8,475.5 834.6,475.9 845.2,470.1 844.4,469.8z" fill="#ff0800"/>
<path d="M834.6,475.9 836.0,476.4 846.5,470.7 845.2,470.1z" fill="#ff0800"/>
<path d="M836.0,476.4 837.3,476.9 847.9,471.2 846.5,470.7z" fill="#ff0800"/>
<path d="M837.3,476.9 838.9,477.6 849.5,471.9 847.9,471.2z" fill="#ff0800"/>
<path d="M838.9,477.6 840.8,478.3 851.3,472.6 849.5,471.9z" fill="#ff0800"/>
<path d="M840.8,478.3 842.6,479.1 853.2,473.4 851.3,472.6z" fill="#ff0800"/>
<path d="M842.6,479.1 844.9,480.0 855.5,474.3 853.2,473.4z" fill="#ff0800"/>
<path d="M844.9,480.0 846.9,480.8 857.5,475.1 855.5,474.3z" fill="#ff0800"/>
<path d="M846.9,480.8 849.3,493.9 859.9,484.9 857.5,475.1z" fill="#ff1d00"/>
<path d="M849.3,493.9 852.0,505.7 862.6,493.9 859.9,484.9z" fill="#ff4600"/>
<path d="M852.0,505.7 854.7,516.1 865.2,502.4 862.6,493.9z" fill="#ff6a00"/>
<path d="M854.7,516.1 858.7,531.7 869.2,514.3 865.2,502.4z" fill="#ff9400"/>
<path d="M858.7,531.7 862.7,546.4 873.3,525.7 869.2,514.3z" fill="#ffc400"/>
<path d="M862.7,546.4 868.1,565.3 878.6,540.0 873.3,525.7z" fill="#fff900"/>
<path d="M868.1,565.3 874.7,588.0 885.3,557.6 878.6,540.0z" fill="#c3ff00"/>
<path d="M874.7,588.0 882.7,591.2 893.3,578.0 885.3,557.6z" fill="#8eff00"/>
<path d="M882.7,591.2 893.4,595.6 904.0,582.4 893.3,578.0z" fill="#7cff00"/>
<path d="M893.4,595.6 906.8,591.2 917.3,580.8 904.0,582.4z" fill="#8dff00"/>
<path d="M906.8,591.2 922.8,604.7 933.4,594.3 917.3,580.8z" fill="#90ff00"/>
<path d="M922.8,604.7 938.9,630.8 949.4,614.8 933.4,594.3z" fill="#60ff00"/>
<path d="M938.9,630.8 957.6,647.7 968.1,633.1 949.4,614.8z" fill="#29ff00"/>
<path d="M957.6,647.7 979.0,662.0 989.5,650.1 968.1,633.1z" fill="#06ff00"/>
<path d="M979.0,662.0 1000.4,665.5 1010.8,659.3 989.5,650.1z" fill="#00ff04"/>
<path d="M1000.4,665.5 1021.8,678.8 1032.2,663.7 1010.8,659.3z" fill="#0f0"/>
<path d="M1021.8,678.8 1045.8,684.4 1056.3,676.3 1032.2,663.7z" fill="#01ff00"/>
<path d="M821.4,480.5 822.2,480.8 832.8,475.1 832.0,474.8z" fill="#ff0800"/>
<path d="M822.2,480.8 823.3,481.3 833.8,475.5 832.8,475.1z" fill="#ff0800"/>
<path d="M823.3,481.3 824.1,481.6 834.6,475.9 833.8,475.5z" fill="#ff0800"/>
<path d="M824.1,481.6 825.4,482.1 836.0,476.4 834.6,475.9z" fill="#ff0800"/>
<path d="M825.4,482.1 826.7,482.7 837.3,476.9 836.0,476.4z" fill="#ff0800"/>
<path d="M826.7,482.7 828.3,483.3 838.9,477.6 837.3,476.9z" fill="#ff0800"/>
<path d="M828.3,483.3 830.2,484.1 840.8,478.3 838.9,477.6z" fill="#ff0800"/>
<path d="M830.2,484.1 832.1,484.9 842.6,479.1 840.8,478.3z" fill="#ff0800"/>
<path d="M832.1,484.9 834.4,485.8 844.9,480.0 842.6,479.1z" fill="#ff0800"/>
<path d="M834.4,485.8 836.4,496.8 846.9,480.8 844.9,480.0z" fill="#ff1200"/>
<path d="M836.4,496.8 838.8,507.1 849.3,493.9 846.9,480.8z" fill="#f30"/>
<path d="M838.8,507.1 841.5,518.0 852.0,505.7 849.3,493.9z" fill="#ff5e00"/>
<path d="M841.5,518.0 844.1,527.9 854.7,516.1 852.0,505.7z" fill="#ff8500"/>
<path d="M844.1,527.9 848.1,542.6 858.7,531.7 854.7,516.1z" fill="#ffb400"/>
<path d="M848.1,542.6 852.2,556.8 862.7,546.4 858.7,531.7z" fill="#ffea00"/>
<path d="M852.2,556.8 857.5,575.2 868.1,565.3 862.7,546.4z" fill="#d8ff00"/>
<path d="M857.5,575.2 864.2,597.0 874.7,588.0 868.1,565.3z" fill="#8eff00"/>
<path d="M864.2,597.0 872.2,600.3 882.7,591.2 874.7,588.0z" fill="#6f0"/>
<path d="M872.2,600.3 882.9,604.6 893.4,595.6 882.7,591.2z" fill="#6f0"/>
<path d="M882.9,604.6 896.3,596.5 906.8,591.2 893.4,595.6z" fill="#7eff00"/>
<path d="M896.3,596.5 912.3,615.2 922.8,604.7 906.8,591.2z" fill="#82ff00"/>
<path d="M912.3,615.2 928.4,640.3 938.9,630.8 922.8,604.7z" fill="#48ff00"/>
<path d="M928.4,640.3 947.1,656.7 957.6,647.7 938.9,630.8z" fill="#0eff00"/>
<path d="M947.1,656.7 968.5,669.6 979.0,662.0 957.6,647.7z" fill="#00ff0f"/>
<path d="M968.5,669.6 989.9,673.2 1000.4,665.5 979.0,662.0z" fill="#00ff0e"/>
<path d="M989.9,673.2 1011.3,686.0 1021.8,678.8 1000.4,665.5z" fill="#00ff0d"/>
<path d="M1011.3,686.0 1035.4,692.6 1045.8,684.4 1021.8,678.8z" fill="#00ff0e"/>
<path d="M810.8,490.9 811.6,491.2 822.2,480.8 821.4,480.5z" fill="#f10"/>
<path d="M811.6,491.2 812.7,491.7 823.3,481.3 822.2,480.8z" fill="#f10"/>
<path d="M812.7,491.7 813.5,492.0 824.1,481.6 823.3,481.3z" fill="#f10"/>
<path d="M813.5,492.0 814.8,492.5 825.4,482.1 824.1,481.6z" fill="#f10"/>
<path d="M814.8,492.5 816.2,493.1 826.7,482.7 825.4,482.1z" fill="#f10"/>
<path d="M816.2,493.1 817.8,493.7 828.3,483.3 826.7,482.7z" fill="#f10"/>
<path d="M817.8,493.7 819.6,494.5 830.2,484.1 828.3,483.3z" fill="#f10"/>
<path d="M819.6,494.5 821.5,495.2 832.1,484.9 830.2,484.1z" fill="#f10"/>
<path d="M821.5,495.2 823.8,496.2 834.4,485.8 832.1,484.9z" fill="#f10"/>
<path d="M823.8,496.2 825.8,506.8 836.4,496.8 834.4,485.8z" fill="#ff2600"/>
<path d="M825.8,506.8 828.2,517.0 838.8,507.1 836.4,496.8z" fill="#ff4d00"/>
<path d="M828.2,517.0 830.9,527.4 841.5,518.0 838.8,507.1z" fill="#ff7400"/>
<path d="M830.9,527.4 833.6,537.4 844.1,527.9 841.5,518.0z" fill="#ff9a00"/>
<path d="M833.6,537.4 837.6,552.0 848.1,542.6 844.1,527.9z" fill="#ffc700"/>
<path d="M837.6,552.0 841.6,565.8 852.2,556.8 848.1,542.6z" fill="#fffb00"/>
<path d="M841.6,565.8 847.0,583.8 857.5,575.2 852.2,556.8z" fill="#c9ff00"/>
<path d="M847.0,583.8 853.6,605.1 864.2,597.0 857.5,575.2z" fill="#81ff00"/>
<path d="M853.6,605.1 861.7,608.3 872.2,600.3 864.2,597.0z" fill="#5bff00"/>
<path d="M861.7,608.3 872.4,612.7 882.9,604.6 872.2,600.3z" fill="#5bff00"/>
<path d="M872.4,612.7 885.8,601.8 896.3,596.5 882.9,604.6z" fill="#79ff00"/>
<path d="M885.8,601.8 901.8,625.6 912.3,615.2 896.3,596.5z" fill="#7aff00"/>
<path d="M901.8,625.6 917.9,650.2 928.4,640.3 912.3,615.2z" fill="#36ff00"/>
<path d="M917.9,650.2 936.6,665.8 947.1,656.7 928.4,640.3z" fill="#00ff01"/>
<path d="M936.6,665.8 958.0,677.2 968.5,669.6 947.1,656.7z" fill="#00ff19"/>
<path d="M958.0,677.2 979.4,680.8 989.9,673.2 968.5,669.6z" fill="#00ff16"/>
<path d="M979.4,680.8 1000.8,693.7 1011.3,686.0 989.9,673.2z" fill="#00ff14"/>
<path d="M1000.8,693.7 1024.9,699.7 1035.4,692.6 1011.3,686.0z" fill="#00ff15"/>
<path d="M800.2,510.1 801.1,510.5 811.6,491.2 810.8,490.9z" fill="#ff3600"/>
<path d="M801.1,510.5 802.1,510.9 812.7,491.7 811.6,491.2z" fill="#ff3600"/>
<path d="M802.1,510.9 802.9,511.2 813.5,492.0 812.7,491.7z" fill="#ff3600"/>
<path d="M802.9,511.2 804.3,511.8 814.8,492.5 813.5,492.0z" fill="#ff3600"/>
<path d="M804.3,511.8 805.6,512.3 816.2,493.1 814.8,492.5z" fill="#ff3600"/>
<path d="M805.6,512.3 807.2,513.0 817.8,493.7 816.2,493.1z" fill="#ff3600"/>
<path d="M807.2,513.0 809.1,513.7 819.6,494.5 817.8,493.7z" fill="#ff3600"/>
<path d="M809.1,513.7 811.0,514.5 821.5,495.2 819.6,494.5z" fill="#ff3600"/>
<path d="M811.0,514.5 813.2,515.4 823.8,496.2 821.5,495.2z" fill="#ff3600"/>
<path d="M813.2,515.4 815.2,524.6 825.8,506.8 823.8,496.2z" fill="#ff4900"/>
<path d="M815.2,524.6 817.6,534.0 828.2,517.0 825.8,506.8z" fill="#ff6e00"/>
<path d="M817.6,534.0 820.3,543.4 830.9,527.4 828.2,517.0z" fill="#ff9200"/>
<path d="M820.3,543.4 823.0,552.4 833.6,537.4 830.9,527.4z" fill="#ffb500"/>
<path d="M823.0,552.4 827.0,565.2 837.6,552.0 833.6,537.4z" fill="#ffdf00"/>
<path d="M827.0,565.2 831.1,577.6 841.6,565.8 837.6,552.0z" fill="#ef0"/>
<path d="M831.1,577.6 836.4,593.7 847.0,583.8 841.6,565.8z" fill="#b8ff00"/>
<path d="M836.4,593.7 843.1,612.7 853.6,605.1 847.0,583.8z" fill="#76ff00"/>
<path d="M843.1,612.7 851.1,616.0 861.7,608.3 853.6,605.1z" fill="#52ff00"/>
<path d="M851.1,616.0 861.8,620.3 872.4,612.7 861.7,608.3z" fill="#52ff00"/>
<path d="M861.8,620.3 875.2,611.3 885.8,601.8 872.4,612.7z" fill="#72ff00"/>
<path d="M875.2,611.3 891.3,637.8 901.8,625.6 885.8,601.8z" fill="#6bff00"/>
<path d="M891.3,637.8 907.4,660.7 917.9,650.2 901.8,625.6z" fill="#21ff00"/>
<path d="M907.4,660.7 926.1,675.7 936.6,665.8 917.9,650.2z" fill="#00ff12"/>
<path d="M926.1,675.7 947.5,681.6 958.0,677.2 936.6,665.8z" fill="#00ff21"/>
<path d="M947.5,681.6 968.9,684.7 979.4,680.8 958.0,677.2z" fill="#00ff16"/>
<path d="M968.9,684.7 990.4,693.0 1000.8,693.7 979.4,680.8z" fill="#00ff0f"/>
<path d="M990.4,693.0 1014.5,701.4 1024.9,699.7 1000.8,693.7z" fill="#00ff0e"/>
<path d="M789.7,529.4 790.5,529.7 801.1,510.5 800.2,510.1z" fill="#ff6e00"/>
<path d="M790.5,529.7 791.6,530.1 802.1,510.9 801.1,510.5z" fill="#ff6e00"/>
<path d="M791.6,530.1 792.4,530.5 802.9,511.2 802.1,510.9z" fill="#ff6e00"/>
<path d="M792.4,530.5 793.7,531.0 804.3,511.8 802.9,511.2z" fill="#ff6e00"/>
<path d="M793.7,531.0 795.0,531.5 805.6,512.3 804.3,511.8z" fill="#ff6e00"/>
<path d="M795.0,531.5 796.6,532.2 807.2,513.0 805.6,512.3z" fill="#ff6e00"/>
<path d="M796.6,532.2 798.5,533.0 809.1,513.7 807.2,513.0z" fill="#ff6e00"/>
<path d="M798.5,533.0 800.4,533.7 811.0,514.5 809.1,513.7z" fill="#ff6e00"/>
<path d="M800.4,533.7 802.7,534.6 813.2,515.4 811.0,514.5z" fill="#ff6e00"/>
<path d="M802.7,534.6 804.7,542.9 815.2,524.6 813.2,515.4z" fill="#ff7e00"/>
<path d="M804.7,542.9 807.1,551.3 817.6,534.0 815.2,524.6z" fill="#ff9f00"/>
<path d="M807.1,551.3 809.8,559.9 820.3,543.4 817.6,534.0z" fill="#ffbf00"/>
<path d="M809.8,559.9 812.4,567.9 823.0,552.4 820.3,543.4z" fill="#ffdf00"/>
<path d="M812.4,567.9 816.5,579.3 827.0,565.2 823.0,552.4z" fill="#fbff00"/>
<path d="M816.5,579.3 820.5,590.3 831.1,577.6 827.0,565.2z" fill="#d1ff00"/>
<path d="M820.5,590.3 825.9,605.0 836.4,593.7 831.1,577.6z" fill="#a1ff00"/>
<path d="M825.9,605.0 832.5,622.2 843.1,612.7 836.4,593.7z" fill="#6f0"/>
<path d="M832.5,622.2 840.6,625.4 851.1,616.0 843.1,612.7z" fill="#47ff00"/>
<path d="M840.6,625.4 851.3,629.8 861.8,620.3 851.1,616.0z" fill="#47ff00"/>
<path d="M851.3,629.8 864.7,621.3 875.2,611.3 861.8,620.3z" fill="#64ff00"/>
<path d="M864.7,621.3 880.8,650.6 891.3,637.8 875.2,611.3z" fill="#5f0"/>
<path d="M880.8,650.6 896.8,671.1 907.4,660.7 891.3,637.8z" fill="#0aff00"/>
<path d="M896.8,671.1 915.6,685.7 926.1,675.7 907.4,660.7z" fill="#00ff24"/>
<path d="M915.6,685.7 937.0,685.5 947.5,681.6 926.1,675.7z" fill="#00ff27"/>
<path d="M937.0,685.5 958.5,689.1 968.9,684.7 947.5,681.6z" fill="#00ff10"/>
<path d="M958.5,689.1 979.9,692.3 990.4,693.0 968.9,684.7z" fill="#01ff00"/>
<path d="M979.9,692.3 1004.0,696.0 1014.5,701.4 990.4,693.0z" fill="#0fff00"/>
<path d="M779.1,551.9 779.9,552.2 790.5,529.7 789.7,529.4z" fill="#ffac00"/>
<path d="M779.9,552.2 781.0,552.6 791.6,530.1 790.5,529.7z" fill="#ffac00"/>
<path d="M781.0,552.6 781.8,552.9 792.4,530.5 791.6,530.1z" fill="#ffac00"/>
<path d="M781.8,552.9 783.1,553.5 793.7,531.0 792.4,530.5z" fill="#ffac00"/>
<path d="M783.1,553.5 784.5,554.0 795.0,531.5 793.7,531.0z" fill="#ffac00"/>
<path d="M784.5,554.0 786.1,554.7 796.6,532.2 795.0,531.5z" fill="#ffac00"/>
<path d="M786.1,554.7 787.9,555.4 798.5,533.0 796.6,532.2z" fill="#ffac00"/>
<path d="M787.9,555.4 789.8,556.2 800.4,533.7 798.5,533.0z" fill="#ffac00"/>
<path d="M789.8,556.2 792.1,557.1 802.7,534.6 800.4,533.7z" fill="#ffac00"/>
<path d="M792.1,557.1 794.1,565.4 804.7,542.9 802.7,534.6z" fill="#fb0"/>
<path d="M794.1,565.4 796.5,572.9 807.1,551.3 804.7,542.9z" fill="#ffd900"/>
<path d="M796.5,572.9 799.2,583.8 809.8,559.9 807.1,551.3z" fill="#fff900"/>
<path d="M799.2,583.8 801.9,590.9 812.4,567.9 809.8,559.9z" fill="#e6ff00"/>
<path d="M801.9,590.9 805.9,600.9 816.5,579.3 812.4,567.9z" fill="#c6ff00"/>
<path d="M805.9,600.9 810.0,609.5 820.5,590.3 816.5,579.3z" fill="#a3ff00"/>
<path d="M810.0,609.5 815.3,618.7 825.9,605.0 820.5,590.3z" fill="#7eff00"/>
<path d="M815.3,618.7 822.0,633.0 832.5,622.2 825.9,605.0z" fill="#4fff00"/>
<path d="M822.0,633.0 830.0,636.3 840.6,625.4 832.5,622.2z" fill="#35ff00"/>
<path d="M830.0,636.3 840.8,640.2 851.3,629.8 840.6,625.4z" fill="#35ff00"/>
<path d="M840.8,640.2 854.2,636.3 864.7,621.3 851.3,629.8z" fill="#4dff00"/>
<path d="M854.2,636.3 870.3,665.2 880.8,650.6 864.7,621.3z" fill="#37ff00"/>
<path d="M870.3,665.2 886.3,682.4 896.8,671.1 880.8,650.6z" fill="#0f1"/>
<path d="M886.3,682.4 905.1,693.8 915.6,685.7 896.8,671.1z" fill="#00ff35"/>
<path d="M905.1,693.8 926.5,694.1 937.0,685.5 915.6,685.7z" fill="#00ff2e"/>
<path d="M926.5,694.1 948.0,694.5 958.5,689.1 937.0,685.5z" fill="#00ff0f"/>
<path d="M948.0,694.5 969.4,695.7 979.9,692.3 958.5,689.1z" fill="#0cff00"/>
<path d="M969.4,695.7 993.6,701.3 1004.0,696.0 979.9,692.3z" fill="#24ff00"/>
<path d="M768.5,574.8 769.4,575.1 779.9,552.2 779.1,551.9z" fill="#fff200"/>
<path d="M769.4,575.1 770.4,575.6 781.0,552.6 779.9,552.2z" fill="#fff200"/>
<path d="M770.4,575.6 771.2,575.9 781.8,552.9 781.0,552.6z" fill="#fff200"/>
<path d="M771.2,575.9 772.6,576.5 783.1,553.5 781.8,552.9z" fill="#fff200"/>
<path d="M772.6,576.5 773.9,577.0 784.5,554.0 783.1,553.5z" fill="#fff200"/>
<path d="M773.9,577.0 775.5,577.7 786.1,554.7 784.5,554.0z" fill="#fff200"/>
<path d="M775.5,577.7 777.4,578.4 787.9,555.4 786.1,554.7z" fill="#fff200"/>
<path d="M777.4,578.4 779.3,579.2 789.8,556.2 787.9,555.4z" fill="#fff200"/>
<path d="M779.3,579.2 781.5,580.1 792.1,557.1 789.8,556.2z" fill="#fff200"/>
<path d="M781.5,580.1 783.6,588.4 794.1,565.4 792.1,557.1z" fill="#fdff00"/>
<path d="M783.6,588.4 786.0,594.9 796.5,572.9 794.1,565.4z" fill="#e1ff00"/>
<path d="M786.0,594.9 788.7,607.7 799.2,583.8 796.5,572.9z" fill="#bfff00"/>
<path d="M788.7,607.7 791.3,614.3 801.9,590.9 799.2,583.8z" fill="#9dff00"/>
<path d="M791.3,614.3 795.4,622.5 805.9,600.9 801.9,590.9z" fill="#82ff00"/>
<path d="M795.4,622.5 799.4,628.3 810.0,609.5 805.9,600.9z" fill="#67ff00"/>
<path d="M799.4,628.3 804.8,632.3 815.3,618.7 810.0,609.5z" fill="#53ff00"/>
<path d="M804.8,632.3 811.5,643.0 822.0,633.0 815.3,618.7z" fill="#35ff00"/>
<path d="M811.5,643.0 819.5,646.7 830.0,636.3 822.0,633.0z" fill="#21ff00"/>
<path d="M819.5,646.7 830.2,649.7 840.8,640.2 830.0,636.3z" fill="#2f0"/>
<path d="M830.2,649.7 843.6,651.9 854.2,636.3 840.8,640.2z" fill="#31ff00"/>
<path d="M843.6,651.9 859.7,679.8 870.3,665.2 854.2,636.3z" fill="#1f0"/>
<path d="M859.7,679.8 875.8,694.3 886.3,682.4 870.3,665.2z" fill="#00ff2f"/>
<path d="M875.8,694.3 894.6,701.4 905.1,693.8 886.3,682.4z" fill="#00ff45"/>
<path d="M894.6,701.4 916.1,702.7 926.5,694.1 905.1,693.8z" fill="#00ff38"/>
<path d="M916.1,702.7 937.5,700.2 948.0,694.5 926.5,694.1z" fill="#00ff14"/>
<path d="M937.5,700.2 959.0,698.7 969.4,695.7 948.0,694.5z" fill="#12ff00"/>
<path d="M959.0,698.7 983.1,706.7 993.6,701.3 969.4,695.7z" fill="#2bff00"/>
<path d="M763.3,594.4 764.1,594.8 769.4,575.1 768.5,574.8z" fill="#c7ff00"/>
<path d="M764.1,594.8 765.2,595.2 770.4,575.6 769.4,575.1z" fill="#c7ff00"/>
<path d="M765.2,595.2 765.9,595.5 771.2,575.9 770.4,575.6z" fill="#c7ff00"/>
<path d="M765.9,595.5 767.3,596.1 772.6,576.5 771.2,575.9z" fill="#c7ff00"/>
<path d="M767.3,596.1 768.6,596.6 773.9,577.0 772.6,576.5z" fill="#c7ff00"/>
<path d="M768.6,596.6 770.2,597.3 775.5,577.7 773.9,577.0z" fill="#c7ff00"/>
<path d="M770.2,597.3 772.1,598.0 777.4,578.4 775.5,577.7z" fill="#c7ff00"/>
<path d="M772.1,598.0 774.0,598.8 779.3,579.2 777.4,578.4z" fill="#c7ff00"/>
<path d="M774.0,598.8 776.3,599.7 781.5,580.1 779.3,579.2z" fill="#c7ff00"/>
<path d="M776.3,599.7 778.3,607.1 783.6,588.4 781.5,580.1z" fill="#b8ff00"/>
<path d="M778.3,607.1 780.7,612.7 786.0,594.9 783.6,588.4z" fill="#9fff00"/>
<path d="M780.7,612.7 783.4,625.9 788.7,607.7 786.0,594.9z" fill="#7dff00"/>
<path d="M783.4,625.9 786.1,631.2 791.3,614.3 788.7,607.7z" fill="#5aff00"/>
<path d="M786.1,631.2 790.1,637.4 795.4,622.5 791.3,614.3z" fill="#45ff00"/>
<path d="M790.1,637.4 794.1,641.4 799.4,628.3 795.4,622.5z" fill="#3f0"/>
<path d="M794.1,641.4 799.5,641.3 804.8,632.3 799.4,628.3z" fill="#2cff00"/>
<path d="M799.5,641.3 806.2,648.6 811.5,643.0 804.8,632.3z" fill="#20ff00"/>
<path d="M806.2,648.6 814.2,652.4 819.5,646.7 811.5,643.0z" fill="#12ff00"/>
<path d="M814.2,652.4 825.0,655.3 830.2,649.7 819.5,646.7z" fill="#14ff00"/>
<path d="M825.0,655.3 838.4,664.5 843.6,651.9 830.2,649.7z" fill="#16ff00"/>
<path d="M838.4,664.5 854.5,689.2 859.7,679.8 843.6,651.9z" fill="#00ff13"/>
<path d="M854.5,689.2 870.6,704.1 875.8,694.3 859.7,679.8z" fill="#00ff4c"/>
<path d="M870.6,704.1 889.4,707.1 894.6,701.4 875.8,694.3z" fill="#00ff57"/>
<path d="M889.4,707.1 910.8,709.8 916.1,702.7 894.6,701.4z" fill="#0f4"/>
<path d="M910.8,709.8 932.3,708.3 937.5,700.2 916.1,702.7z" fill="#00ff20"/>
<path d="M932.3,708.3 953.7,703.9 959.0,698.7 937.5,700.2z" fill="#0dff00"/>
<path d="M953.7,703.9 977.9,704.0 983.1,706.7 959.0,698.7z" fill="#31ff00"/>
<path d="M758.0,614.1 758.8,614.4 764.1,594.8 763.3,594.4z" fill="#82ff00"/>
<path d="M758.8,614.4 759.9,614.8 765.2,595.2 764.1,594.8z" fill="#82ff00"/>
<path d="M759.9,614.8 760.7,615.2 765.9,595.5 765.2,595.2z" fill="#82ff00"/>
<path d="M760.7,615.2 762.0,615.7 767.3,596.1 765.9,595.5z" fill="#82ff00"/>
<path d="M762.0,615.7 763.3,616.2 768.6,596.6 767.3,596.1z" fill="#82ff00"/>
<path d="M763.3,616.2 765.0,616.9 770.2,597.3 768.6,596.6z" fill="#82ff00"/>
<path d="M765.0,616.9 766.8,617.7 772.1,598.0 770.2,597.3z" fill="#82ff00"/>
<path d="M766.8,617.7 768.7,618.4 774.0,598.8 772.1,598.0z" fill="#82ff00"/>
<path d="M768.7,618.4 771.0,619.3 776.3,599.7 774.0,598.8z" fill="#82ff00"/>
<path d="M771.0,619.3 773.0,626.2 778.3,607.1 776.3,599.7z" fill="#75ff00"/>
<path d="M773.0,626.2 775.4,630.5 780.7,612.7 778.3,607.1z" fill="#60ff00"/>
<path d="M775.4,630.5 778.1,643.7 783.4,625.9 780.7,612.7z" fill="#3fff00"/>
<path d="M778.1,643.7 780.8,648.5 786.1,631.2 783.4,625.9z" fill="#1eff00"/>
<path d="M780.8,648.5 784.8,652.9 790.1,637.4 786.1,631.2z" fill="#0eff00"/>
<path d="M784.8,652.9 788.8,654.1 794.1,641.4 790.1,637.4z" fill="#05ff00"/>
<path d="M788.8,654.1 794.2,650.2 799.5,641.3 794.1,641.4z" fill="#0bff00"/>
<path d="M794.2,650.2 800.9,654.8 806.2,648.6 799.5,641.3z" fill="#0dff00"/>
<path d="M800.9,654.8 809.0,658.5 814.2,652.4 806.2,648.6z" fill="#06ff00"/>
<path d="M809.0,658.5 819.7,661.0 825.0,655.3 814.2,652.4z" fill="#08ff00"/>
<path d="M819.7,661.0 833.1,677.2 838.4,664.5 825.0,655.3z" fill="#00ff03"/>
<path d="M833.1,677.2 849.2,699.1 854.5,689.2 838.4,664.5z" fill="#00ff35"/>
<path d="M849.2,699.1 865.3,714.5 870.6,704.1 854.5,689.2z" fill="#00ff69"/>
<path d="M865.3,714.5 884.1,713.2 889.4,707.1 870.6,704.1z" fill="#00ff6c"/>
<path d="M884.1,713.2 905.6,716.9 910.8,709.8 889.4,707.1z" fill="#00ff53"/>
<path d="M905.6,716.9 927.0,716.3 932.3,708.3 910.8,709.8z" fill="#00ff34"/>
<path d="M927.0,716.3 948.5,709.2 953.7,703.9 932.3,708.3z" fill="#00ff02"/>
<path d="M948.5,709.2 972.7,709.7 977.9,704.0 953.7,703.9z" fill="#2fff00"/>
<path d="M755.9,632.4 756.7,632.8 758.8,614.4 758.0,614.1z" fill="#3cff00"/>
<path d="M756.7,632.8 757.8,633.2 759.9,614.8 758.8,614.4z" fill="#3cff00"/>
<path d="M757.8,633.2 758.5,633.5 760.7,615.2 759.9,614.8z" fill="#3cff00"/>
<path d="M758.5,633.5 759.9,634.1 762.0,615.7 760.7,615.2z" fill="#3cff00"/>
<path d="M759.9,634.1 761.2,634.6 763.3,616.2 762.0,615.7z" fill="#3cff00"/>
<path d="M761.2,634.6 762.8,635.3 765.0,616.9 763.3,616.2z" fill="#3cff00"/>
<path d="M762.8,635.3 764.7,636.0 766.8,617.7 765.0,616.9z" fill="#3cff00"/>
<path d="M764.7,636.0 766.6,636.8 768.7,618.4 766.8,617.7z" fill="#3cff00"/>
<path d="M766.6,636.8 768.9,637.7 771.0,619.3 768.7,618.4z" fill="#3cff00"/>
<path d="M768.9,637.7 770.9,643.2 773.0,626.2 771.0,619.3z" fill="#31ff00"/>
<path d="M770.9,643.2 773.3,646.5 775.4,630.5 773.0,626.2z" fill="#20ff00"/>
<path d="M773.3,646.5 776.0,658.8 778.1,643.7 775.4,630.5z" fill="#03ff00"/>
<path d="M776.0,658.8 778.7,662.2 780.8,648.5 778.1,643.7z" fill="#00ff1b"/>
<path d="M778.7,662.2 782.7,664.7 784.8,652.9 780.8,648.5z" fill="#00ff25"/>
<path d="M782.7,664.7 786.7,664.1 788.8,654.1 784.8,652.9z" fill="#00ff26"/>
<path d="M786.7,664.1 792.1,657.4 794.2,650.2 788.8,654.1z" fill="#00ff14"/>
<path d="M792.1,657.4 798.8,658.7 800.9,654.8 794.2,650.2z" fill="#00ff05"/>
<path d="M798.8,658.7 806.9,662.5 809.0,658.5 800.9,654.8z" fill="#00ff07"/>
<path d="M806.9,662.5 817.6,665.0 819.7,661.0 809.0,658.5z" fill="#00ff04"/>
<path d="M817.6,665.0 831.0,689.0 833.1,677.2 819.7,661.0z" fill="#00ff1e"/>
<path d="M831.0,689.0 847.1,709.5 849.2,699.1 833.1,677.2z" fill="#00ff5a"/>
<path d="M847.1,709.5 863.2,724.4 865.3,714.5 849.2,699.1z" fill="#00ff8a"/>
<path d="M863.2,724.4 882.0,724.6 884.1,713.2 865.3,714.5z" fill="#00ff8b"/>
<path d="M882.0,724.6 903.5,726.8 905.6,716.9 884.1,713.2z" fill="#00ff6e"/>
<path d="M903.5,726.8 925.0,724.9 927.0,716.3 905.6,716.9z" fill="#00ff4e"/>
<path d="M925.0,724.9 946.4,722.9 948.5,709.2 927.0,716.3z" fill="#00ff1e"/>
<path d="M946.4,722.9 970.6,719.7 972.7,709.7 948.5,709.2z" fill="#14ff00"/>
<path d="M753.8,650.3 754.6,650.7 756.7,632.8 755.9,632.4z" fill="#00ff0a"/>
<path d="M754.6,650.7 755.6,651.1 757.8,633.2 756.7,632.8z" fill="#00ff0a"/>
<path d="M755.6,651.1 756.4,651.4 758.5,633.5 757.8,633.2z" fill="#00ff0a"/>
<path d="M756.4,651.4 757.8,652.0 759.9,634.1 758.5,633.5z" fill="#00ff0a"/>
<path d="M757.8,652.0 759.1,652.5 761.2,634.6 759.9,634.1z" fill="#00ff0a"/>
<path d="M759.1,652.5 760.7,653.2 762.8,635.3 761.2,634.6z" fill="#00ff0a"/>
<path d="M760.7,653.2 762.6,653.9 764.7,636.0 762.8,635.3z" fill="#00ff0a"/>
<path d="M762.6,653.9 764.5,654.7 766.6,636.8 764.7,636.0z" fill="#00ff0a"/>
<path d="M764.5,654.7 766.8,655.6 768.9,637.7 766.6,636.8z" fill="#00ff0a"/>
<path d="M766.8,655.6 768.8,660.6 770.9,643.2 768.9,637.7z" fill="#00ff13"/>
<path d="M768.8,660.6 771.2,663.5 773.3,646.5 770.9,643.2z" fill="#00ff20"/>
<path d="M771.2,663.5 773.9,673.9 776.0,658.8 773.3,646.5z" fill="#00ff39"/>
<path d="M773.9,673.9 776.6,676.8 778.7,662.2 776.0,658.8z" fill="#00ff53"/>
<path d="M776.6,676.8 780.6,679.9 782.7,664.7 778.7,662.2z" fill="#00ff59"/>
<path d="M780.6,679.9 784.6,678.7 786.7,664.1 782.7,664.7z" fill="#00ff56"/>
<path d="M784.6,678.7 790.0,668.3 792.1,657.4 786.7,664.1z" fill="#00ff3b"/>
<path d="M790.0,668.3 796.7,668.2 798.8,658.7 792.1,657.4z" fill="#00ff21"/>
<path d="M796.7,668.2 804.8,669.7 806.9,662.5 798.8,658.7z" fill="#00ff1b"/>
<path d="M804.8,669.7 815.5,683.3 817.6,665.0 806.9,662.5z" fill="#00ff21"/>
<path d="M815.5,683.3 828.9,706.5 831.0,689.0 817.6,665.0z" fill="#00ff4e"/>
<path d="M828.9,706.5 845.0,721.9 847.1,709.5 831.0,689.0z" fill="#00ff8b"/>
<path d="M845.0,721.9 861.1,734.4 863.2,724.4 847.1,709.5z" fill="#00ffb1"/>
<path d="M861.1,734.4 879.9,736.0 882.0,724.6 863.2,724.4z" fill="#00ffb2"/>
<path d="M879.9,736.0 901.4,737.3 903.5,726.8 882.0,724.6z" fill="#00ff96"/>
<path d="M901.4,737.3 922.9,733.9 925.0,724.9 903.5,726.8z" fill="#00ff70"/>
<path d="M922.9,733.9 944.3,737.1 946.4,722.9 925.0,724.9z" fill="#00ff48"/>
<path d="M944.3,737.1 968.5,734.8 970.6,719.7 946.4,722.9z" fill="#00ff1e"/>
<path d="M751.6,668.2 752.5,668.6 754.6,650.7 753.8,650.3z" fill="#00ff4e"/>
<path d="M752.5,668.6 753.5,669.0 755.6,651.1 754.6,650.7z" fill="#00ff4e"/>
<path d="M753.5,669.0 754.3,669.3 756.4,651.4 755.6,651.1z" fill="#00ff4e"/>
<path d="M754.3,669.3 755.7,669.9 757.8,652.0 756.4,651.4z" fill="#00ff4e"/>
<path d="M755.7,669.9 757.0,670.4 759.1,652.5 757.8,652.0z" fill="#00ff4e"/>
<path d="M757.0,670.4 758.6,671.1 760.7,653.2 759.1,652.5z" fill="#00ff4e"/>
<path d="M758.6,671.1 760.5,671.8 762.6,653.9 760.7,653.2z" fill="#00ff4e"/>
<path d="M760.5,671.8 762.4,672.6 764.5,654.7 762.6,653.9z" fill="#00ff4e"/>
<path d="M762.4,672.6 764.7,673.5 766.8,655.6 764.5,654.7z" fill="#00ff4e"/>
<path d="M764.7,673.5 766.7,678.5 768.8,660.6 766.8,655.6z" fill="#00ff57"/>
<path d="M766.7,678.5 769.1,680.0 771.2,663.5 768.8,660.6z" fill="#00ff62"/>
<path d="M769.1,680.0 771.8,688.0 773.9,673.9 771.2,663.5z" fill="#00ff75"/>
<path d="M771.8,688.0 774.4,691.5 776.6,676.8 773.9,673.9z" fill="#00ff8a"/>
<path d="M774.4,691.5 778.5,693.1 780.6,679.9 776.6,676.8z" fill="#00ff90"/>
<path d="M778.5,693.1 782.5,697.5 784.6,678.7 780.6,679.9z" fill="#00ff91"/>
<path d="M782.5,697.5 787.9,683.4 790.0,668.3 784.6,678.7z" fill="#00ff74"/>
<path d="M787.9,683.4 794.6,676.4 796.7,668.2 790.0,668.3z" fill="#00ff49"/>
<path d="M794.6,676.4 802.6,677.3 804.8,669.7 796.7,668.2z" fill="#00ff38"/>
<path d="M802.6,677.3 813.4,699.8 815.5,683.3 804.8,669.7z" fill="#00ff50"/>
<path d="M813.4,699.8 826.8,722.0 828.9,706.5 815.5,683.3z" fill="#00ff8f"/>
<path d="M826.8,722.0 842.9,737.0 845.0,721.9 828.9,706.5z" fill="#00ffc4"/>
<path d="M842.9,737.0 859.0,746.3 861.1,734.4 845.0,721.9z" fill="#00ffdf"/>
<path d="M859.0,746.3 877.8,747.9 879.9,736.0 861.1,734.4z" fill="#00ffdc"/>
<path d="M877.8,747.9 899.3,748.7 901.4,737.3 879.9,736.0z" fill="#00ffbf"/>
<path d="M899.3,748.7 920.8,748.1 922.9,733.9 901.4,737.3z" fill="#00ff9a"/>
<path d="M920.8,748.1 942.2,751.3 944.3,737.1 922.9,733.9z" fill="#00ff78"/>
<path d="M942.2,751.3 966.4,749.9 968.5,734.8 944.3,737.1z" fill="#0f5"/>
<path d="M749.5,686.1 750.3,686.5 752.5,668.6 751.6,668.2z" fill="#00ff93"/>
<path d="M750.3,686.5 751.4,686.9 753.5,669.0 752.5,668.6z" fill="#00ff93"/>
<path d="M751.4,686.9 752.2,687.2 754.3,669.3 753.5,669.0z" fill="#00ff93"/>
<path d="M752.2,687.2 753.6,687.8 755.7,669.9 754.3,669.3z" fill="#00ff93"/>
<path d="M753.6,687.8 754.9,688.3 757.0,670.4 755.7,669.9z" fill="#00ff93"/>
<path d="M754.9,688.3 756.5,689.0 758.6,671.1 757.0,670.4z" fill="#00ff93"/>
<path d="M756.5,689.0 758.4,689.7 760.5,671.8 758.6,671.1z" fill="#00ff93"/>
<path d="M758.4,689.7 760.3,690.5 762.4,672.6 760.5,671.8z" fill="#00ff93"/>
<path d="M760.3,690.5 762.5,691.4 764.7,673.5 762.4,672.6z" fill="#00ff93"/>
<path d="M762.5,691.4 764.6,694.1 766.7,678.5 764.7,673.5z" fill="#0f9"/>
<path d="M764.6,694.1 767.0,696.9 769.1,680.0 766.7,678.5z" fill="#00ffa2"/>
<path d="M767.0,696.9 769.7,703.2 771.8,688.0 769.1,680.0z" fill="#00ffb1"/>
<path d="M769.7,703.2 772.3,706.1 774.4,691.5 771.8,688.0z" fill="#00ffc1"/>
<path d="M772.3,706.1 776.4,710.1 778.5,693.1 774.4,691.5z" fill="#00ffc8"/>
<path d="M776.4,710.1 780.4,717.3 782.5,697.5 778.5,693.1z" fill="#00ffd3"/>
<path d="M780.4,717.3 785.8,698.5 787.9,683.4 782.5,697.5z" fill="#00ffb5"/>
<path d="M785.8,698.5 792.5,691.0 794.6,676.4 787.9,683.4z" fill="#00ff7b"/>
<path d="M792.5,691.0 800.5,696.6 802.6,677.3 794.6,676.4z" fill="#0f6"/>
<path d="M800.5,696.6 811.3,716.3 813.4,699.8 802.6,677.3z" fill="#00ff89"/>
<path d="M811.3,716.3 824.7,737.6 826.8,722.0 813.4,699.8z" fill="#0fc"/>
<path d="M824.7,737.6 840.8,752.1 842.9,737.0 826.8,722.0z" fill="#0ff"/>
<path d="M840.8,752.1 856.9,758.2 859.0,746.3 842.9,737.0z" fill="#00ecff"/>
<path d="M856.9,758.2 875.7,759.7 877.8,747.9 859.0,746.3z" fill="#00f6ff"/>
<path d="M875.7,759.7 897.2,759.6 899.3,748.7 877.8,747.9z" fill="#00ffea"/>
<path d="M897.2,759.6 918.7,761.8 920.8,748.1 899.3,748.7z" fill="#00ffc9"/>
<path d="M918.7,761.8 940.1,765.9 942.2,751.3 920.8,748.1z" fill="#00ffae"/>
<path d="M940.1,765.9 964.3,767.4 966.4,749.9 942.2,751.3z" fill="#00ff8f"/>
<path d="M747.4,704.5 748.2,704.8 750.3,686.5 749.5,686.1z" fill="#00ffd9"/>
<path d="M748.2,704.8 749.3,705.3 751.4,686.9 750.3,686.5z" fill="#00ffd9"/>
<path d="M749.3,705.3 750.1,705.6 752.2,687.2 751.4,686.9z" fill="#00ffd9"/>
<path d="M750.1,705.6 751.4,706.1 753.6,687.8 752.2,687.2z" fill="#00ffd9"/>
<path d="M751.4,706.1 752.8,706.7 754.9,688.3 753.6,687.8z" fill="#00ffd9"/>
<path d="M752.8,706.7 754.4,707.3 756.5,689.0 754.9,688.3z" fill="#00ffd9"/>
<path d="M754.4,707.3 756.3,708.1 758.4,689.7 756.5,689.0z" fill="#00ffd9"/>
<path d="M756.3,708.1 758.1,708.9 760.3,690.5 758.4,689.7z" fill="#00ffd9"/>
<path d="M758.1,708.9 760.4,709.8 762.5,691.4 760.3,690.5z" fill="#00ffd9"/>
<path d="M760.4,709.8 762.4,711.5 764.6,694.1 762.5,691.4z" fill="#00ffdc"/>
<path d="M762.4,711.5 764.9,713.4 767.0,696.9 764.6,694.1z" fill="#00ffe1"/>
<path d="M764.9,713.4 767.6,718.7 769.7,703.2 767.0,696.9z" fill="#0fe"/>
<path d="M767.6,718.7 770.2,720.7 772.3,706.1 769.7,703.2z" fill="#00fffa"/>
<path d="M770.2,720.7 774.3,728.9 776.4,710.1 772.3,706.1z" fill="#00f8ff"/>
<path d="M774.3,728.9 778.3,737.1 780.4,717.3 776.4,710.1z" fill="#00e2ff"/>
<path d="M778.3,737.1 783.7,720.6 785.8,698.5 780.4,717.3z" fill="#0ff"/>
<path d="M783.7,720.6 790.4,714.0 792.5,691.0 785.8,698.5z" fill="#00ffc3"/>
<path d="M790.4,714.0 798.4,720.6 800.5,696.6 792.5,691.0z" fill="#00ffb5"/>
<path d="M798.4,720.6 809.2,738.9 811.3,716.3 800.5,696.6z" fill="#00ffd8"/>
<path d="M809.2,738.9 822.6,759.7 824.7,737.6 811.3,716.3z" fill="#00e8ff"/>
<path d="M822.6,759.7 838.7,765.3 840.8,752.1 824.7,737.6z" fill="#00c0ff"/>
<path d="M838.7,765.3 854.8,769.1 856.9,758.2 840.8,752.1z" fill="#00bdff"/>
<path d="M854.8,769.1 873.6,774.4 875.7,759.7 856.9,758.2z" fill="#00c9ff"/>
<path d="M873.6,774.4 895.1,775.7 897.2,759.6 875.7,759.7z" fill="#00e2ff"/>
<path d="M895.1,775.7 916.6,777.0 918.7,761.8 897.2,759.6z" fill="#00fffd"/>
<path d="M916.6,777.0 938.1,783.4 940.1,765.9 918.7,761.8z" fill="#00ffe8"/>
<path d="M938.1,783.4 962.2,779.7 964.3,767.4 940.1,765.9z" fill="#00ffca"/>
<path d="M745.3,722.4 746.1,722.7 748.2,704.8 747.4,704.5z" fill="#00dfff"/>
<path d="M746.1,722.7 747.2,723.2 749.3,705.3 748.2,704.8z" fill="#00dfff"/>
<path d="M747.2,723.2 748.0,723.5 750.1,705.6 749.3,705.3z" fill="#00dfff"/>
<path d="M748.0,723.5 749.3,724.0 751.4,706.1 750.1,705.6z" fill="#00dfff"/>
<path d="M749.3,724.0 750.7,724.6 752.8,706.7 751.4,706.1z" fill="#00dfff"/>
<path d="M750.7,724.6 752.3,725.7 754.4,707.3 752.8,706.7z" fill="#00dfff"/>
<path d="M752.3,725.7 754.1,726.0 756.3,708.1 754.4,707.3z" fill="#00dfff"/>
<path d="M754.1,726.0 756.0,726.8 758.1,708.9 756.3,708.1z" fill="#00dfff"/>
<path d="M756.0,726.8 758.3,727.7 760.4,709.8 758.1,708.9z" fill="#00dfff"/>
<path d="M758.3,727.7 760.3,728.5 762.4,711.5 760.4,709.8z" fill="#00dfff"/>
<path d="M760.3,728.5 762.7,730.4 764.9,713.4 762.4,711.5z" fill="#00dcff"/>
<path d="M762.7,730.4 765.4,732.9 767.6,718.7 764.9,713.4z" fill="#00d4ff"/>
<path d="M765.4,732.9 768.1,738.2 770.2,720.7 767.6,718.7z" fill="#00c9ff"/>
<path d="M768.1,738.2 772.1,745.4 774.3,728.9 770.2,720.7z" fill="#00b7ff"/>
<path d="M772.1,745.4 776.2,753.1 778.3,737.1 774.3,728.9z" fill="#009eff"/>
<path d="M776.2,753.1 781.6,743.2 783.7,720.6 778.3,737.1z" fill="#00b1ff"/>
<path d="M781.6,743.2 788.3,737.5 790.4,714.0 783.7,720.6z" fill="#00e2ff"/>
<path d="M788.3,737.5 796.3,746.9 798.4,720.6 790.4,714.0z" fill="#00ebff"/>
<path d="M796.3,746.9 807.1,761.0 809.2,738.9 798.4,720.6z" fill="#00c9ff"/>
<path d="M807.1,761.0 820.5,774.4 822.6,759.7 809.2,738.9z" fill="#09f"/>
<path d="M820.5,774.4 836.6,780.0 838.7,765.3 822.6,759.7z" fill="#0083ff"/>
<path d="M836.6,780.0 852.7,782.3 854.8,769.1 838.7,765.3z" fill="#008cff"/>
<path d="M852.7,782.3 871.5,785.8 873.6,774.4 854.8,769.1z" fill="#009aff"/>
<path d="M871.5,785.8 893.0,793.6 895.1,775.7 873.6,774.4z" fill="#00a9ff"/>
<path d="M893.0,793.6 914.5,802.8 916.6,777.0 895.1,775.7z" fill="#00b9ff"/>
<path d="M914.5,802.8 936.0,809.2 938.1,783.4 916.6,777.0z" fill="#00c5ff"/>
<path d="M936.0,809.2 960.1,813.4 962.2,779.7 938.1,783.4z" fill="#0df"/>
<path d="M743.2,738.4 744.0,738.8 746.1,722.7 745.3,722.4z" fill="#009fff"/>
<path d="M744.0,738.8 745.1,739.2 747.2,723.2 746.1,722.7z" fill="#009fff"/>
<path d="M745.1,739.2 745.9,739.5 748.0,723.5 747.2,723.2z" fill="#009fff"/>
<path d="M745.9,739.5 747.2,740.1 749.3,724.0 748.0,723.5z" fill="#009fff"/>
<path d="M747.2,740.1 748.6,740.6 750.7,724.6 749.3,724.0z" fill="#009fff"/>
<path d="M748.6,740.6 750.2,741.3 752.3,725.7 750.7,724.6z" fill="#009eff"/>
<path d="M750.2,741.3 752.0,743.0 754.1,726.0 752.3,725.7z" fill="#009dff"/>
<path d="M752.0,743.0 753.9,743.7 756.0,726.8 754.1,726.0z" fill="#009dff"/>
<path d="M753.9,743.7 756.2,741.4 758.3,727.7 756.0,726.8z" fill="#00a0ff"/>
<path d="M756.2,741.4 758.2,742.2 760.3,728.5 758.3,727.7z" fill="#00a3ff"/>
<path d="M758.2,742.2 760.6,743.2 762.7,730.4 760.3,728.5z" fill="#00a2ff"/>
<path d="M760.6,743.2 763.3,745.2 765.4,732.9 762.7,730.4z" fill="#009fff"/>
<path d="M763.3,745.2 766.0,747.7 768.1,738.2 765.4,732.9z" fill="#0097ff"/>
<path d="M766.0,747.7 770.0,750.7 772.1,745.4 768.1,738.2z" fill="#008aff"/>
<path d="M770.0,750.7 774.1,754.2 776.2,753.1 772.1,745.4z" fill="#007bff"/>
<path d="M774.1,754.2 779.4,764.3 781.6,743.2 776.2,753.1z" fill="#07f"/>
<path d="M779.4,764.3 786.2,761.5 788.3,737.5 781.6,743.2z" fill="#008aff"/>
<path d="M786.2,761.5 794.2,775.9 796.3,746.9 788.3,737.5z" fill="#0086ff"/>
<path d="M794.2,775.9 805.0,780.8 807.1,761.0 796.3,746.9z" fill="#006aff"/>
<path d="M805.0,780.8 818.4,786.2 820.5,774.4 807.1,761.0z" fill="#0057ff"/>
<path d="M818.4,786.2 834.5,792.8 836.6,780.0 820.5,774.4z" fill="#0050ff"/>
<path d="M834.5,792.8 850.6,799.3 852.7,782.3 836.6,780.0z" fill="#05f"/>
<path d="M850.6,799.3 869.4,807.0 871.5,785.8 852.7,782.3z" fill="#005eff"/>
<path d="M869.4,807.0 890.9,815.7 893.0,793.6 871.5,785.8z" fill="#0063ff"/>
<path d="M890.9,815.7 912.4,824.4 914.5,802.8 893.0,793.6z" fill="#0064ff"/>
<path d="M912.4,824.4 933.9,827.1 936.0,809.2 914.5,802.8z" fill="#006cff"/>
<path d="M933.9,827.1 958.0,832.3 960.1,813.4 936.0,809.2z" fill="#007fff"/>
<path d="M741.1,749.8 741.9,748.8 744.0,738.8 743.2,738.4z" fill="#006cff"/>
<path d="M741.9,748.8 743.0,749.2 745.1,739.2 744.0,738.8z" fill="#006eff"/>
<path d="M743.0,749.2 743.8,749.5 745.9,739.5 745.1,739.2z" fill="#006eff"/>
<path d="M743.8,749.5 745.1,747.7 747.2,740.1 745.9,739.5z" fill="#0070ff"/>
<path d="M745.1,747.7 746.4,747.8 748.6,740.6 747.2,740.1z" fill="#0073ff"/>
<path d="M746.4,747.8 748.1,748.5 750.2,741.3 748.6,740.6z" fill="#0074ff"/>
<path d="M748.1,748.5 749.9,751.1 752.0,743.0 750.2,741.3z" fill="#0071ff"/>
<path d="M749.9,751.1 751.8,751.9 753.9,743.7 752.0,743.0z" fill="#006eff"/>
<path d="M751.8,751.9 754.1,743.5 756.2,741.4 753.9,743.7z" fill="#007bff"/>
<path d="M754.1,743.5 756.1,744.3 758.2,742.2 756.2,741.4z" fill="#08f"/>
<path d="M756.1,744.3 758.5,745.3 760.6,743.2 758.2,742.2z" fill="#08f"/>
<path d="M758.5,745.3 761.2,746.4 763.3,745.2 760.6,743.2z" fill="#0087ff"/>
<path d="M761.2,746.4 763.9,752.1 766.0,747.7 763.3,745.2z" fill="#0080ff"/>
<path d="M763.9,752.1 767.9,753.8 770.0,750.7 766.0,747.7z" fill="#0078ff"/>
<path d="M767.9,753.8 772.0,755.4 774.1,754.2 770.0,750.7z" fill="#0075ff"/>
<path d="M772.0,755.4 777.3,768.3 779.4,764.3 774.1,754.2z" fill="#0060ff"/>
<path d="M777.3,768.3 784.0,774.3 786.2,761.5 779.4,764.3z" fill="#004fff"/>
<path d="M784.0,774.3 792.1,777.5 794.2,775.9 786.2,761.5z" fill="#0046ff"/>
<path d="M792.1,777.5 802.8,781.9 805.0,780.8 794.2,775.9z" fill="#003aff"/>
<path d="M802.8,781.9 816.3,787.4 818.4,786.2 805.0,780.8z" fill="#0039ff"/>
<path d="M816.3,787.4 832.4,793.9 834.5,792.8 818.4,786.2z" fill="#0039ff"/>
<path d="M832.4,793.9 848.5,800.5 850.6,799.3 834.5,792.8z" fill="#0039ff"/>
<path d="M848.5,800.5 867.3,808.1 869.4,807.0 850.6,799.3z" fill="#0039ff"/>
<path d="M867.3,808.1 888.8,816.8 890.9,815.7 869.4,807.0z" fill="#0039ff"/>
<path d="M888.8,816.8 910.3,825.6 912.4,824.4 890.9,815.7z" fill="#0039ff"/>
<path d="M910.3,825.6 931.8,831.5 933.9,827.1 912.4,824.4z" fill="#0042ff"/>
<path d="M931.8,831.5 955.9,840.4 958.0,832.3 933.9,827.1z" fill="#0051ff"/>
<path d="M740.0,756.9 740.8,754.9 741.9,748.8 741.1,749.8z" fill="#004cff"/>
<path d="M740.8,754.9 741.9,755.8 743.0,749.2 741.9,748.8z" fill="#0050ff"/>
<path d="M741.9,755.8 742.7,755.7 743.8,749.5 743.0,749.2z" fill="#0050ff"/>
<path d="M742.7,755.7 744.1,752.5 745.1,747.7 743.8,749.5z" fill="#0056ff"/>
<path d="M744.1,752.5 745.4,750.3 746.4,747.8 745.1,747.7z" fill="#0060ff"/>
<path d="M745.4,750.3 747.0,750.9 748.1,748.5 746.4,747.8z" fill="#0063ff"/>
<path d="M747.0,750.9 748.9,751.7 749.9,751.1 748.1,748.5z" fill="#0061ff"/>
<path d="M748.9,751.7 750.8,752.4 751.8,751.9 749.9,751.1z" fill="#0060ff"/>
<path d="M750.8,752.4 753.0,744.1 754.1,743.5 751.8,751.9z" fill="#0073ff"/>
<path d="M753.0,744.1 755.1,744.9 756.1,744.3 754.1,743.5z" fill="#0086ff"/>
<path d="M755.1,744.9 757.5,745.9 758.5,745.3 756.1,744.3z" fill="#0086ff"/>
<path d="M757.5,745.9 760.2,747.0 761.2,746.4 758.5,745.3z" fill="#0086ff"/>
<path d="M760.2,747.0 762.8,752.7 763.9,752.1 761.2,746.4z" fill="#007cff"/>
<path d="M762.8,752.7 766.9,754.3 767.9,753.8 763.9,752.1z" fill="#0073ff"/>
<path d="M766.9,754.3 770.9,756.0 772.0,755.4 767.9,753.8z" fill="#0073ff"/>
<path d="M770.9,756.0 776.3,772.1 777.3,768.3 772.0,755.4z" fill="#0059ff"/>
<path d="M776.3,772.1 783.0,774.8 784.0,774.3 777.3,768.3z" fill="#003dff"/>
<path d="M783.0,774.8 791.0,778.1 792.1,777.5 784.0,774.3z" fill="#0039ff"/>
<path d="M791.0,778.1 801.8,782.5 802.8,781.9 792.1,777.5z" fill="#0039ff"/>
<path d="M801.8,782.5 815.2,787.9 816.3,787.4 802.8,781.9z" fill="#0039ff"/>
<path d="M815.2,787.9 831.3,794.5 832.4,793.9 816.3,787.4z" fill="#0039ff"/>
<path d="M831.3,794.5 847.5,801.0 848.5,800.5 832.4,793.9z" fill="#0039ff"/>
<path d="M847.5,801.0 866.3,808.7 867.3,808.1 848.5,800.5z" fill="#0039ff"/>
<path d="M866.3,808.7 887.8,817.4 888.8,816.8 867.3,808.1z" fill="#0039ff"/>
<path d="M887.8,817.4 909.2,826.2 910.3,825.6 888.8,816.8z" fill="#0039ff"/>
<path d="M909.2,826.2 930.7,834.9 931.8,831.5 910.3,825.6z" fill="#003cff"/>
<path d="M930.7,834.9 954.9,844.7 955.9,840.4 931.8,831.5z" fill="#0040ff"/>
<path d="M739.0,771.9 739.8,772.2 740.8,754.9 740.0,756.9z" fill="#0020ff"/>
<path d="M739.8,772.2 740.8,772.7 741.9,755.8 740.8,754.9z" fill="#02f"/>
<path d="M740.8,772.7 741.6,773.0 742.7,755.7 741.9,755.8z" fill="#02f"/>
<path d="M741.6,773.0 743.0,759.6 744.1,752.5 742.7,755.7z" fill="#0035ff"/>
<path d="M743.0,759.6 744.3,750.8 745.4,750.3 744.1,752.5z" fill="#0053ff"/>
<path d="M744.3,750.8 745.9,751.5 747.0,750.9 745.4,750.3z" fill="#0060ff"/>
<path d="M745.9,751.5 747.8,752.2 748.9,751.7 747.0,750.9z" fill="#0060ff"/>
<path d="M747.8,752.2 749.7,753.0 750.8,752.4 748.9,751.7z" fill="#0060ff"/>
<path d="M749.7,753.0 752.0,744.6 753.0,744.1 750.8,752.4z" fill="#0073ff"/>
<path d="M752.0,744.6 754.0,745.4 755.1,744.9 753.0,744.1z" fill="#0086ff"/>
<path d="M754.0,745.4 756.4,746.4 757.5,745.9 755.1,744.9z" fill="#0086ff"/>
<path d="M756.4,746.4 759.1,747.5 760.2,747.0 757.5,745.9z" fill="#0086ff"/>
<path d="M759.1,747.5 761.8,753.3 762.8,752.7 760.2,747.0z" fill="#007cff"/>
<path d="M761.8,753.3 765.8,754.9 766.9,754.3 762.8,752.7z" fill="#0073ff"/>
<path d="M765.8,754.9 769.9,756.5 770.9,756.0 766.9,754.3z" fill="#0073ff"/>
<path d="M769.9,756.5 775.2,772.7 776.3,772.1 770.9,756.0z" fill="#0056ff"/>
<path d="M775.2,772.7 781.9,775.4 783.0,774.8 776.3,772.1z" fill="#0039ff"/>
<path d="M781.9,775.4 790.0,778.7 791.0,778.1 783.0,774.8z" fill="#0039ff"/>
<path d="M790.0,778.7 800.7,783.1 801.8,782.5 791.0,778.1z" fill="#0039ff"/>
<path d="M800.7,783.1 814.2,788.5 815.2,787.9 801.8,782.5z" fill="#0039ff"/>
<path d="M814.2,788.5 830.3,795.1 831.3,794.5 815.2,787.9z" fill="#0039ff"/>
<path d="M830.3,795.1 846.4,801.6 847.5,801.0 831.3,794.5z" fill="#0039ff"/>
<path d="M846.4,801.6 865.2,809.3 866.3,808.7 847.5,801.0z" fill="#0039ff"/>
<path d="M865.2,809.3 886.7,818.0 887.8,817.4 866.3,808.7z" fill="#0039ff"/>
<path d="M886.7,818.0 908.2,826.7 909.2,826.2 887.8,817.4z" fill="#0039ff"/>
<path d="M908.2,826.7 929.7,835.5 930.7,834.9 909.2,826.2z" fill="#0039ff"/>
<path d="M929.7,835.5 953.9,845.3 954.9,844.7 930.7,834.9z" fill="#0039ff"/>
<path d="M737.9,772.5 738.7,772.8 739.8,772.2 739.0,771.9z" fill="#00f"/>
<path d="M738.7,772.8 739.8,773.3 740.8,772.7 739.8,772.2z" fill="#00f"/>
<path d="M739.8,773.3 740.6,773.6 741.6,773.0 740.8,772.7z" fill="#00f"/>
<path d="M740.6,773.6 741.9,760.2 743.0,759.6 741.6,773.0z" fill="#001dff"/>
<path d="M741.9,760.2 743.3,751.4 744.3,750.8 743.0,759.6z" fill="#004cff"/>
<path d="M743.3,751.4 744.9,752.1 745.9,751.5 744.3,750.8z" fill="#0060ff"/>
<path d="M744.9,752.1 746.8,752.8 747.8,752.2 745.9,751.5z" fill="#0060ff"/>
<path d="M746.8,752.8 748.6,753.6 749.7,753.0 747.8,752.2z" fill="#0060ff"/>
<path d="M748.6,753.6 750.9,745.2 752.0,744.6 749.7,753.0z" fill="#0073ff"/>
<path d="M750.9,745.2 752.9,746.0 754.0,745.4 752.0,744.6z" fill="#0086ff"/>
<path d="M752.9,746.0 755.3,747.0 756.4,746.4 754.0,745.4z" fill="#0086ff"/>
<path d="M755.3,747.0 758.1,748.1 759.1,747.5 756.4,746.4z" fill="#0086ff"/>
<path d="M758.1,748.1 760.7,753.8 761.8,753.3 759.1,747.5z" fill="#007cff"/>
<path d="M760.7,753.8 764.8,755.5 765.8,754.9 761.8,753.3z" fill="#0073ff"/>
<path d="M764.8,755.5 768.8,757.1 769.9,756.5 765.8,754.9z" fill="#0073ff"/>
<path d="M768.8,757.1 774.2,773.3 775.2,772.7 769.9,756.5z" fill="#0056ff"/>
<path d="M774.2,773.3 780.9,776.0 781.9,775.4 775.2,772.7z" fill="#0039ff"/>
<path d="M780.9,776.0 788.9,779.3 790.0,778.7 781.9,775.4z" fill="#0039ff"/>
<path d="M788.9,779.3 799.7,783.6 800.7,783.1 790.0,778.7z" fill="#0039ff"/>
<path d="M799.7,783.6 813.1,789.1 814.2,788.5 800.7,783.1z" fill="#0039ff"/>
<path d="M813.1,789.1 829.2,795.6 830.3,795.1 814.2,788.5z" fill="#0039ff"/>
<path d="M829.2,795.6 845.4,802.2 846.4,801.6 830.3,795.1z" fill="#0039ff"/>
<path d="M845.4,802.2 864.2,809.8 865.2,809.3 846.4,801.6z" fill="#0039ff"/>
<path d="M864.2,809.8 885.7,818.6 886.7,818.0 865.2,809.3z" fill="#0039ff"/>
<path d="M885.7,818.6 907.1,827.3 908.2,826.7 886.7,818.0z" fill="#0039ff"/>
<path d="M907.1,827.3 928.6,836.1 929.7,835.5 908.2,826.7z" fill="#0039ff"/>
<path d="M928.6,836.1 952.8,845.9 953.9,845.3 929.7,835.5z" fill="#0039ff"/>
<path d="M736.8,773.1 737.7,773.4 738.7,772.8 737.9,772.5z" fill="#00f"/>
<path d="M737.7,773.4 738.7,773.8 739.8,773.3 738.7,772.8z" fill="#00f"/>
<path d="M738.7,773.8 739.5,774.1 740.6,773.6 739.8,773.3z" fill="#00f"/>
<path d="M739.5,774.1 740.9,760.7 741.9,760.2 740.6,773.6z" fill="#001dff"/>
<path d="M740.9,760.7 742.2,752.0 743.3,751.4 741.9,760.2z" fill="#004cff"/>
<path d="M742.2,752.0 743.8,752.6 744.9,752.1 743.3,751.4z" fill="#0060ff"/>
<path d="M743.8,752.6 745.7,753.4 746.8,752.8 744.9,752.1z" fill="#0060ff"/>
<path d="M745.7,753.4 747.6,754.2 748.6,753.6 746.8,752.8z" fill="#0060ff"/>
<path d="M747.6,754.2 749.9,745.8 750.9,745.2 748.6,753.6z" fill="#0073ff"/>
<path d="M749.9,745.8 751.9,746.6 752.9,746.0 750.9,745.2z" fill="#0086ff"/>
<path d="M751.9,746.6 754.3,747.6 755.3,747.0 752.9,746.0z" fill="#0086ff"/>
<path d="M754.3,747.6 757.0,748.7 758.1,748.1 755.3,747.0z" fill="#0086ff"/>
<path d="M757.0,748.7 759.7,754.4 760.7,753.8 758.1,748.1z" fill="#007cff"/>
<path d="M759.7,754.4 763.7,756.1 764.8,755.5 760.7,753.8z" fill="#0073ff"/>
<path d="M763.7,756.1 767.7,757.7 768.8,757.1 764.8,755.5z" fill="#0073ff"/>
<path d="M767.7,757.7 773.1,773.8 774.2,773.3 768.8,757.1z" fill="#0056ff"/>
<path d="M773.1,773.8 779.8,776.6 780.9,776.0 774.2,773.3z" fill="#0039ff"/>
<path d="M779.8,776.6 787.9,779.8 788.9,779.3 780.9,776.0z" fill="#0039ff"/>
<path d="M787.9,779.8 798.6,784.2 799.7,783.6 788.9,779.3z" fill="#0039ff"/>
<path d="M798.6,784.2 812.1,789.7 813.1,789.1 799.7,783.6z" fill="#0039ff"/>
<path d="M812.1,789.7 828.2,796.2 829.2,795.6 813.1,789.1z" fill="#0039ff"/>
<path d="M828.2,796.2 844.3,802.8 845.4,802.2 829.2,795.6z" fill="#0039ff"/>
<path d="M844.3,802.8 863.1,810.4 864.2,809.8 845.4,802.2z" fill="#0039ff"/>
<path d="M863.1,810.4 884.6,819.2 885.7,818.6 864.2,809.8z" fill="#0039ff"/>
<path d="M884.6,819.2 906.1,827.9 907.1,827.3 885.7,818.6z" fill="#0039ff"/>
<path d="M906.1,827.9 927.6,836.6 928.6,836.1 907.1,827.3z" fill="#0039ff"/>
<path d="M927.6,836.6 951.8,846.5 952.8,845.9 928.6,836.1z" fill="#0039ff"/>
<path d="M735.8,773.6 736.6,774.0 737.7,773.4 736.8,773.1z" fill="#00f"/>
<path d="M736.6,774.0 737.7,774.4 738.7,773.8 737.7,773.4z" fill="#00f"/>
<path d="M737.7,774.4 738.5,774.7 739.5,774.1 738.7,773.8z" fill="#00f"/>
<path d="M738.5,774.7 739.8,761.3 740.9,760.7 739.5,774.1z" fill="#001dff"/>
<path d="M739.8,761.3 741.2,752.5 742.2,752.0 740.9,760.7z" fill="#004cff"/>
<path d="M741.2,752.5 742.8,753.2 743.8,752.6 742.2,752.0z" fill="#0060ff"/>
<path d="M742.8,753.2 744.6,754.0 745.7,753.4 743.8,752.6z" fill="#0060ff"/>
<path d="M744.6,754.0 746.5,754.7 747.6,754.2 745.7,753.4z" fill="#0060ff"/>
<path d="M746.5,754.7 748.8,746.4 749.9,745.8 747.6,754.2z" fill="#0073ff"/>
<path d="M748.8,746.4 750.8,747.2 751.9,746.6 749.9,745.8z" fill="#0086ff"/>
<path d="M750.8,747.2 753.2,748.2 754.3,747.6 751.9,746.6z" fill="#0086ff"/>
<path d="M753.2,748.2 755.9,749.3 757.0,748.7 754.3,747.6z" fill="#0086ff"/>
<path d="M755.9,749.3 758.6,755.0 759.7,754.4 757.0,748.7z" fill="#007cff"/>
<path d="M758.6,755.0 762.7,756.6 763.7,756.1 759.7,754.4z" fill="#0073ff"/>
<path d="M762.7,756.6 766.7,758.3 767.7,757.7 763.7,756.1z" fill="#0073ff"/>
<path d="M766.7,758.3 772.1,774.4 773.1,773.8 767.7,757.7z" fill="#0056ff"/>
<path d="M772.1,774.4 778.8,777.1 779.8,776.6 773.1,773.8z" fill="#0039ff"/>
<path d="M778.8,777.1 786.8,780.4 787.9,779.8 779.8,776.6z" fill="#0039ff"/>
<path d="M786.8,780.4 797.6,784.8 798.6,784.2 787.9,779.8z" fill="#0039ff"/>
<path d="M797.6,784.8 811.0,790.2 812.1,789.7 798.6,784.2z" fill="#0039ff"/>
<path d="M811.0,790.2 827.1,796.8 828.2,796.2 812.1,789.7z" fill="#0039ff"/>
<path d="M827.1,796.8 843.3,803.4 844.3,802.8 828.2,796.2z" fill="#0039ff"/>
<path d="M843.3,803.4 862.1,811.0 863.1,810.4 844.3,802.8z" fill="#0039ff"/>
<path d="M862.1,811.0 883.6,819.7 884.6,819.2 863.1,810.4z" fill="#0039ff"/>
<path d="M883.6,819.7 905.0,828.5 906.1,827.9 884.6,819.2z" fill="#0039ff"/>
<path d="M905.0,828.5 926.5,837.2 927.6,836.6 906.1,827.9z" fill="#0039ff"/>
<path d="M926.5,837.2 950.7,847.0 951.8,846.5 927.6,836.6z" fill="#0039ff"/>
<path d="M734.7,774.2 735.5,774.5 736.6,774.0 735.8,773.6z" fill="#00f"/>
<path d="M735.5,774.5 736.6,775.0 737.7,774.4 736.6,774.0z" fill="#00f"/>
<path d="M736.6,775.0 737.4,775.3 738.5,774.7 737.7,774.4z" fill="#00f"/>
<path d="M737.4,775.3 738.8,761.9 739.8,761.3 738.5,774.7z" fill="#001dff"/>
<path d="M738.8,761.9 740.1,753.1 741.2,752.5 739.8,761.3z" fill="#004cff"/>
<path d="M740.1,753.1 741.7,753.8 742.8,753.2 741.2,752.5z" fill="#0060ff"/>
<path d="M741.7,753.8 743.6,754.5 744.6,754.0 742.8,753.2z" fill="#0060ff"/>
<path d="M743.6,754.5 745.5,755.3 746.5,754.7 744.6,754.0z" fill="#0060ff"/>
<path d="M745.5,755.3 747.8,746.9 748.8,746.4 746.5,754.7z" fill="#0073ff"/>
<path d="M747.8,746.9 749.8,747.7 750.8,747.2 748.8,746.4z" fill="#0086ff"/>
<path d="M749.8,747.7 752.2,748.7 753.2,748.2 750.8,747.2z" fill="#0086ff"/>
<path d="M752.2,748.7 754.9,749.8 755.9,749.3 753.2,748.2z" fill="#0086ff"/>
<path d="M754.9,749.8 757.6,755.6 758.6,755.0 755.9,749.3z" fill="#007cff"/>
<path d="M757.6,755.6 761.6,757.2 762.7,756.6 758.6,755.0z" fill="#0073ff"/>
<path d="M761.6,757.2 765.6,758.8 766.7,758.3 762.7,756.6z" fill="#0073ff"/>
<path d="M765.6,758.8 771.0,775.0 772.1,774.4 766.7,758.3z" fill="#0056ff"/>
<path d="M771.0,775.0 777.7,777.7 778.8,777.1 772.1,774.4z" fill="#0039ff"/>
<path d="M777.7,777.7 785.8,781.0 786.8,780.4 778.8,777.1z" fill="#0039ff"/>
<path d="M785.8,781.0 796.5,785.4 797.6,784.8 786.8,780.4z" fill="#0039ff"/>
<path d="M796.5,785.4 810.0,790.8 811.0,790.2 797.6,784.8z" fill="#0039ff"/>
<path d="M810.0,790.8 826.1,797.4 827.1,796.8 811.0,790.2z" fill="#0039ff"/>
<path d="M826.1,797.4 842.2,803.9 843.3,803.4 827.1,796.8z" fill="#0039ff"/>
<path d="M842.2,803.9 861.0,811.6 862.1,811.0 843.3,803.4z" fill="#0039ff"/>
<path d="M861.0,811.6 882.5,820.3 883.6,819.7 862.1,811.0z" fill="#0039ff"/>
<path d="M882.5,820.3 904.0,829.1 905.0,828.5 883.6,819.7z" fill="#0039ff"/>
<path d="M904.0,829.1 925.5,837.8 926.5,837.2 905.0,828.5z" fill="#0039ff"/>
<path d="M925.5,837.8 949.7,847.6 950.7,847.0 926.5,837.2z" fill="#0039ff"/>
<path d="M732.6,775.4 733.4,775.7 735.5,774.5 734.7,774.2z" fill="#00f"/>
<path d="M733.4,775.7 734.5,776.1 736.6,775.0 735.5,774.5z" fill="#00f"/>
<path d="M734.5,776.1 735.3,776.4 737.4,775.3 736.6,775.0z" fill="#00f"/>
<path d="M735.3,776.4 736.7,763.0 738.8,761.9 737.4,775.3z" fill="#001dff"/>
<path d="M736.7,763.0 738.0,754.3 740.1,753.1 738.8,761.9z" fill="#004cff"/>
<path d="M738.0,754.3 739.6,754.9 741.7,753.8 740.1,753.1z" fill="#0060ff"/>
<path d="M739.6,754.9 741.5,755.7 743.6,754.5 741.7,753.8z" fill="#0060ff"/>
<path d="M741.5,755.7 743.4,756.5 745.5,755.3 743.6,754.5z" fill="#0060ff"/>
<path d="M743.4,756.5 745.6,748.1 747.8,746.9 745.5,755.3z" fill="#0073ff"/>
<path d="M745.6,748.1 747.7,748.9 749.8,747.7 747.8,746.9z" fill="#0086ff"/>
<path d="M747.7,748.9 750.1,749.9 752.2,748.7 749.8,747.7z" fill="#0086ff"/>
<path d="M750.1,749.9 752.8,751.0 754.9,749.8 752.2,748.7z" fill="#0086ff"/>
<path d="M752.8,751.0 755.4,756.7 757.6,755.6 754.9,749.8z" fill="#007cff"/>
<path d="M755.4,756.7 759.5,758.4 761.6,757.2 757.6,755.6z" fill="#0073ff"/>
<path d="M759.5,758.4 763.5,760.0 765.6,758.8 761.6,757.2z" fill="#0073ff"/>
<path d="M763.5,760.0 768.9,776.1 771.0,775.0 765.6,758.8z" fill="#0056ff"/>
<path d="M768.9,776.1 775.6,778.9 777.7,777.7 771.0,775.0z" fill="#0039ff"/>
<path d="M775.6,778.9 783.7,782.1 785.8,781.0 777.7,777.7z" fill="#0039ff"/>
<path d="M783.7,782.1 794.4,786.5 796.5,785.4 785.8,781.0z" fill="#0039ff"/>
<path d="M794.4,786.5 807.9,792.0 810.0,790.8 796.5,785.4z" fill="#0039ff"/>
<path d="M807.9,792.0 824.0,798.5 826.1,797.4 810.0,790.8z" fill="#0039ff"/>
<path d="M824.0,798.5 840.1,805.1 842.2,803.9 826.1,797.4z" fill="#0039ff"/>
<path d="M840.1,805.1 858.9,812.7 861.0,811.6 842.2,803.9z" fill="#0039ff"/>
<path d="M858.9,812.7 880.4,821.5 882.5,820.3 861.0,811.6z" fill="#0039ff"/>
<path d="M880.4,821.5 901.9,830.2 904.0,829.1 882.5,820.3z" fill="#0039ff"/>
<path d="M901.9,830.2 923.4,838.9 925.5,837.8 904.0,829.1z" fill="#0039ff"/>
<path d="M923.4,838.9 947.6,848.8 949.7,847.6 925.5,837.8z" fill="#0039ff"/>
<path d="M730.5,776.5 731.3,776.8 733.4,775.7 732.6,775.4z" fill="#00f"/>
<path d="M731.3,776.8 732.4,777.3 734.5,776.1 733.4,775.7z" fill="#00f"/>
<path d="M732.4,777.3 733.2,777.6 735.3,776.4 734.5,776.1z" fill="#00f"/>
<path d="M733.2,777.6 734.5,764.2 736.7,763.0 735.3,776.4z" fill="#001dff"/>
<path d="M734.5,764.2 735.9,755.4 738.0,754.3 736.7,763.0z" fill="#004cff"/>
<path d="M735.9,755.4 737.5,756.1 739.6,754.9 738.0,754.3z" fill="#0060ff"/>
<path d="M737.5,756.1 739.4,756.8 741.5,755.7 739.6,754.9z" fill="#0060ff"/>
<path d="M739.4,756.8 741.2,757.6 743.4,756.5 741.5,755.7z" fill="#0060ff"/>
<path d="M741.2,757.6 743.5,749.2 745.6,748.1 743.4,756.5z" fill="#0073ff"/>
<path d="M743.5,749.2 745.5,750.0 747.7,748.9 745.6,748.1z" fill="#0086ff"/>
<path d="M745.5,750.0 748.0,751.0 750.1,749.9 747.7,748.9z" fill="#0086ff"/>
<path d="M748.0,751.0 750.7,752.1 752.8,751.0 750.1,749.9z" fill="#0086ff"/>
<path d="M750.7,752.1 753.3,757.9 755.4,756.7 752.8,751.0z" fill="#007cff"/>
<path d="M753.3,757.9 757.4,759.5 759.5,758.4 755.4,756.7z" fill="#0073ff"/>
<path d="M757.4,759.5 761.4,761.1 763.5,760.0 759.5,758.4z" fill="#0073ff"/>
<path d="M761.4,761.1 766.8,777.3 768.9,776.1 763.5,760.0z" fill="#0056ff"/>
<path d="M766.8,777.3 773.5,780.0 775.6,778.9 768.9,776.1z" fill="#0039ff"/>
<path d="M773.5,780.0 781.6,783.3 783.7,782.1 775.6,778.9z" fill="#0039ff"/>
<path d="M781.6,783.3 792.3,787.7 794.4,786.5 783.7,782.1z" fill="#0039ff"/>
<path d="M792.3,787.7 805.8,793.1 807.9,792.0 794.4,786.5z" fill="#0039ff"/>
<path d="M805.8,793.1 821.9,799.7 824.0,798.5 807.9,792.0z" fill="#0039ff"/>
<path d="M821.9,799.7 838.0,806.2 840.1,805.1 824.0,798.5z" fill="#0039ff"/>
<path d="M838.0,806.2 856.8,813.9 858.9,812.7 840.1,805.1z" fill="#0039ff"/>
<path d="M856.8,813.9 878.3,822.6 880.4,821.5 858.9,812.7z" fill="#0039ff"/>
<path d="M878.3,822.6 899.8,831.4 901.9,830.2 880.4,821.5z" fill="#0039ff"/>
<path d="M899.8,831.4 921.3,840.1 923.4,838.9 901.9,830.2z" fill="#0039ff"/>
<path d="M921.3,840.1 945.5,849.9 947.6,848.8 923.4,838.9z" fill="#0039ff"/>
</g>
<text x="726.5" y="533.7" fill="#00f" text-anchor="end">48.40</text>
<text x="1132.6" y="519.0" fill="#00f">48.40</text>
<text x="726.5" y="583.4" fill="#00f" text-anchor="end">37.72</text>
<text x="1132.6" y="568.7" fill="#00f">37.72</text>
<text x="726.5" y="633.1" fill="#00f" text-anchor="end">27.04</text>
<text x="1132.6" y="618.4" fill="#00f">27.04</text>
<text x="726.5" y="682.8" fill="#00f" text-anchor="end">16.36</text>
<text x="1132.6" y="668.1" fill="#00f">16.36</text>
<text x="726.5" y="732.5" fill="#00f" text-anchor="end">5.68</text>
<text x="1132.6" y="717.8" fill="#00f">5.68</text>
<text x="727.0" y="782.2" fill="#000" text-anchor="end">0.00</text>
<text x="747.2" y="790.4" fill="#000" text-anchor="end">9.38</text>
<text x="778.1" y="803.0" fill="#000" text-anchor="end">23.75</text>
<text x="818.4" y="819.3" fill="#000" text-anchor="end">42.50</text>
<text x="853.3" y="833.5" fill="#000" text-anchor="end">58.75</text>
<text x="896.3" y="851.0" fill="#000" text-anchor="end">78.75</text>
<text x="942.0" y="869.6" fill="#000" text-anchor="end">100.00</text>
<text x="948.7" y="869.6" fill="#f00">1200</text>
<text x="971.7" y="856.8" fill="#f00">2300</text>
<text x="996.8" y="842.9" fill="#f00">3500</text>
<text x="1028.1" y="825.5" fill="#f00">5000</text>
<text x="1049.0" y="813.9" fill="#f00">6000</text>
<text x="1069.9" y="802.3" fill="#f00">7000</text>
<text x="1101.3" y="784.9" fill="#f00">8500</text>
<text x="1132.6" y="767.5" fill="#f00">10000</text>
<text x="1068.5" y="848.5" fill="#f00" font-weight="bold" font-size="10" text-anchor="middle">RPM</text>
<text x="796.5" y="858.3" fill="#808080" font-weight="bold" font-size="10" text-anchor="middle">% Throttle</text>
<text transform="translate(670,652.500) rotate(-90)" fill="#00f" font-weight="bold" font-size="11" text-anchor="middle">deg</text>
<text transform="translate(1189,638) rotate(-90)" fill="#00f" font-weight="bold" font-size="11" text-anchor="middle">deg</text>
<text x="930" y="428.8" fill="#000" font-weight="bold" font-size="14.6" text-anchor="middle">Ignition advance-angle characteristic map 1</text>
<text x="928.5" y="409.5" fill="#c4c4c4" font-size="9" text-anchor="middle">TunerPro - Version 5.00</text>
</svg>
<div style="left:0;top:566px;width:864px;height:30px;background:#f0f0f0;border-top:1px solid #d7d7d7"></div>
<div style="left:129px;top:568px;width:1px;height:20px;background:#d0d0d0"></div>
<div style="left:259px;top:568px;width:1px;height:20px;background:#d0d0d0"></div>
<div style="left:389px;top:568px;width:1px;height:20px;background:#d0d0d0"></div>
</div>
<svg style="left:0;top:0;pointer-events:none" width="1780" height="901" viewBox="0 0 1780 901">
<g opacity=".33" fill="#000" stroke="none">
<g><path d="M304,296 C322,289 354,295 374,313 C362,327 342,334 326,329 C313,324 306,311 304,296Z"/><polygon points="265.3,346.6 275.9,353.3 237.3,417.2 226.6,409.2"/><path fill-rule="evenodd" d="M278.6,357.3 L323.9,386.6 L317.5,397 L305,391.5 L288,432 L290,441 L285.2,447.8 L238.6,419.9Z M285.4,399.9 a10,10 0 1,0 -20,0 a10,10 0 1,0 20,0Z"/><polygon points="297.8,423.7 414.8,502.7 425.2,487.3 308.2,408.3"/><path fill-rule="evenodd" d="M463.5,506 a28,28 0 1,0 -56,0 a28,28 0 1,0 56,0Z M447.5,506 a12,12 0 1,0 -24,0 a12,12 0 1,0 24,0Z"/></g>
<g transform="translate(782.0,0) scale(-1,1)"><path d="M304,296 C322,289 354,295 374,313 C362,327 342,334 326,329 C313,324 306,311 304,296Z"/><polygon points="265.3,346.6 275.9,353.3 237.3,417.2 226.6,409.2"/><path fill-rule="evenodd" d="M278.6,357.3 L323.9,386.6 L317.5,397 L305,391.5 L288,432 L290,441 L285.2,447.8 L238.6,419.9Z M285.4,399.9 a10,10 0 1,0 -20,0 a10,10 0 1,0 20,0Z"/><polygon points="297.8,423.7 414.8,502.7 425.2,487.3 308.2,408.3"/><path fill-rule="evenodd" d="M463.5,506 a28,28 0 1,0 -56,0 a28,28 0 1,0 56,0Z M447.5,506 a12,12 0 1,0 -24,0 a12,12 0 1,0 24,0Z"/></g>
<polygon points="244.5,454.1 250.8,468.4 266.4,467.8 254.7,478.2 260.1,492.9 246.6,485.0 234.3,494.7 237.7,479.4 224.7,470.7 240.2,469.1"/>
<polygon points="533.1,454.4 537.4,469.4 552.9,471.0 539.9,479.7 543.3,495.0 531.0,485.3 517.5,493.2 522.9,478.5 511.2,468.1 526.8,468.7"/>
<polygon points="345.8,393.2 360,401.5 361.6,399 370,406.5 373.3,403.2 381.6,410.7 386.6,408.2 389,409 389,419 378.3,425.7 376,415 365.8,419 364,409 355.8,411.5 353,400"/>
<g transform="translate(777,0) scale(-1,1)"><polygon points="345.8,393.2 360,401.5 361.6,399 370,406.5 373.3,403.2 381.6,410.7 386.6,408.2 389,409 389,419 378.3,425.7 376,415 365.8,419 364,409 355.8,411.5 353,400"/></g>
<polygon points="387.4,328.3 367.4,362.4 379.1,383.2 388.3,361.6 397.4,381.6 406.6,362.4"/>
<path d="M285,290 C281,265 281,240 286,222" fill="none" stroke="#000" stroke-width="9"/>
<path d="M290,208 C305,180 340,161.500 388,161.500 C450,161.500 490,200 490,250 C490,268 487,282 481,294" fill="none" stroke="#000" stroke-width="9"/>
<path d="M283,225 L310.300,216.900 L331.100,253.500 L350.600,240.100 L377.400,277.900" fill="none" stroke="#000" stroke-width="7.500" stroke-linejoin="miter" stroke-miterlimit="10"/>
<path d="M287,209 L314,198.600 L334.700,227.900 L355.500,216.900 L377.400,277.900" fill="none" stroke="#000" stroke-width="7.500" stroke-linejoin="miter" stroke-miterlimit="10"/>
<defs><filter id="hd" x="-5%" y="-5%" width="110%" height="110%"><feMorphology operator="dilate" radius="4.5 0"/></filter></defs>
<g filter="url(#hd)"><text font-family="Liberation Sans,sans-serif" stroke="#000" stroke-width="2.6" stroke-linejoin="miter" stroke-miterlimit="2">
<tspan x="99.7" y="638.7" font-size="144.1" textLength="39.9" lengthAdjust="spacingAndGlyphs">O</tspan><tspan x="171.9" y="655.7" font-size="152.8" textLength="41.3" lengthAdjust="spacingAndGlyphs">L</tspan><tspan x="245.7" y="655.7" font-size="136.8" textLength="46.2" lengthAdjust="spacingAndGlyphs">D</tspan><tspan x="327.1" y="655.7" font-size="125.2" textLength="45.7" lengthAdjust="spacingAndGlyphs">S</tspan><tspan x="406.4" y="655.7" font-size="129.6" textLength="45.3" lengthAdjust="spacingAndGlyphs">K</tspan><tspan x="486.9" y="655.7" font-size="136.8" textLength="50.3" lengthAdjust="spacingAndGlyphs">U</tspan><tspan x="565.2" y="655.7" font-size="148.4" textLength="38.8" lengthAdjust="spacingAndGlyphs">L</tspan><tspan x="634.0" y="655.7" font-size="168.7" textLength="40.0" lengthAdjust="spacingAndGlyphs">L</tspan></text></g>
<text font-family="Liberation Sans,sans-serif" font-weight="bold" font-size="39.500" text-anchor="middle" stroke="#000" stroke-width="6" stroke-linejoin="miter" stroke-miterlimit="3" x="194 273.500 355.500 428 499.500" y="722">TUNIN<tspan x="581.700" y="723" font-size="42.500" stroke-width="3.600">G</tspan></text>
</g></svg>
</body></html>
